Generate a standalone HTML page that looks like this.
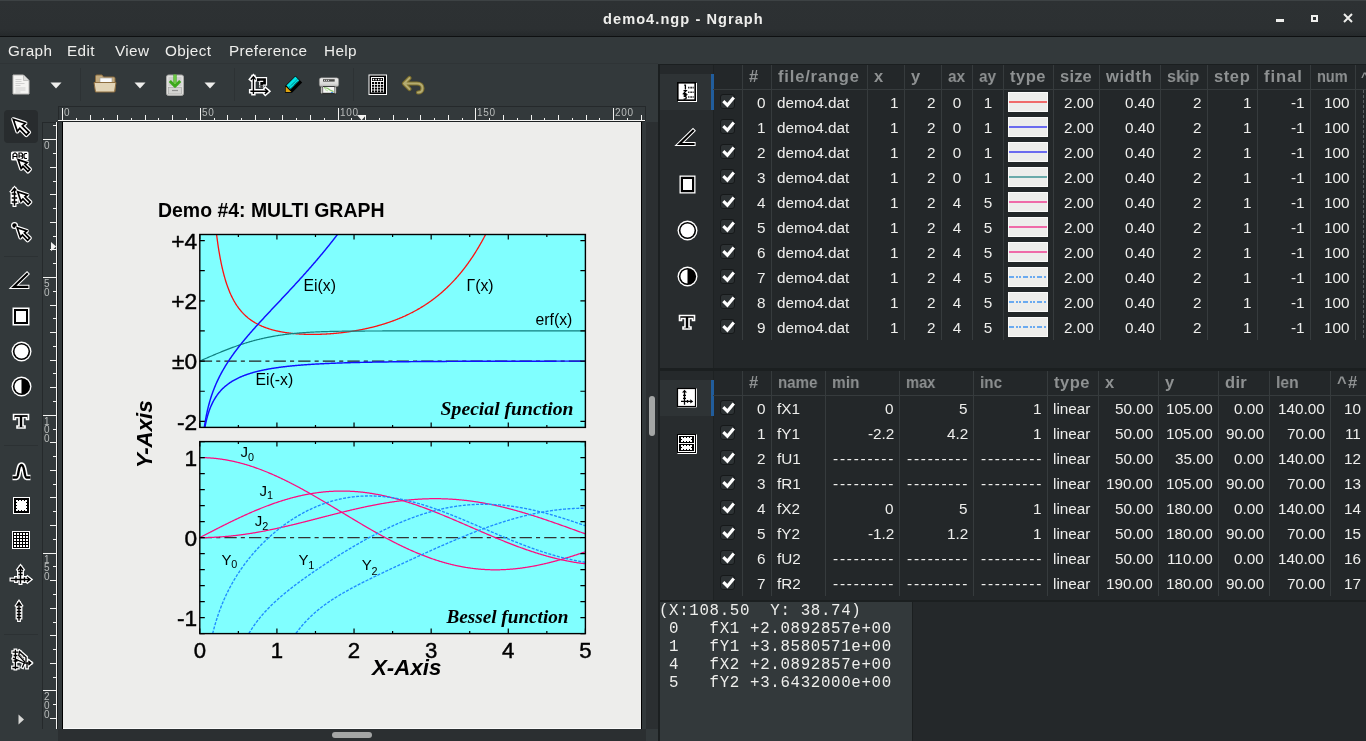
<!DOCTYPE html><html><head><meta charset="utf-8"><style>
*{margin:0;padding:0}
html,body{width:1366px;height:741px;overflow:hidden;background:#33393b;font-family:"Liberation Sans",sans-serif}
body>div,body>span,body>svg{position:absolute;display:block}
.t{white-space:pre;line-height:1;-webkit-font-smoothing:antialiased;will-change:transform}
svg{overflow:visible;will-change:transform}
</style></head><body><div style="left:0px;top:0px;width:1366px;height:36px;background:linear-gradient(to bottom,#2d3133 0%,#2c3032 80%,#25292b 100%)"></div><div style="left:0px;top:0px;width:1366px;height:1px;background:#3d4244"></div><div style="left:0px;top:36px;width:1366px;height:1px;background:#0e1011"></div><span class="t" style="left:603px;top:11.7px;font-weight:bold;font-size:14.6px;letter-spacing:1.05px;color:#eeeeec">demo4.ngp - Ngraph</span><div style="left:1276px;top:19px;width:8px;height:3px;background:#eeeeec"></div><div style="left:1311px;top:15px;width:7px;height:7px;border:2px solid #eeeeec;box-sizing:border-box"></div><svg style="left:1343px;top:13px" width="10" height="10"><path d="M1 1L9 9M9 1L1 9" stroke="#eeeeec" stroke-width="2"/></svg><div style="left:0px;top:37px;width:1366px;height:27px;background:#33393b"></div><span class="t" style="left:8px;top:42.5px;font-size:15.3px;letter-spacing:0.35px;color:#eeeeec">Graph</span><span class="t" style="left:67px;top:42.5px;font-size:15.3px;letter-spacing:0.35px;color:#eeeeec">Edit</span><span class="t" style="left:115px;top:42.5px;font-size:15.3px;letter-spacing:0.35px;color:#eeeeec">View</span><span class="t" style="left:165px;top:42.5px;font-size:15.3px;letter-spacing:0.35px;color:#eeeeec">Object</span><span class="t" style="left:229px;top:42.5px;font-size:15.3px;letter-spacing:0.35px;color:#eeeeec">Preference</span><span class="t" style="left:324px;top:42.5px;font-size:15.3px;letter-spacing:0.35px;color:#eeeeec">Help</span><div style="left:0px;top:63px;width:658px;height:1px;background:#2f3436"></div><div style="left:80px;top:68px;width:1px;height:33px;background:#2d3234"></div><div style="left:234px;top:68px;width:1px;height:33px;background:#2d3234"></div><div style="left:353px;top:68px;width:1px;height:33px;background:#2d3234"></div><svg style="left:50px;top:82px" width="12" height="7"><path d="M0.5 0.5L11.5 0.5L6 6.5Z" fill="#eeeeec"/></svg><svg style="left:134px;top:82px" width="12" height="7"><path d="M0.5 0.5L11.5 0.5L6 6.5Z" fill="#eeeeec"/></svg><svg style="left:204px;top:82px" width="12" height="7"><path d="M0.5 0.5L11.5 0.5L6 6.5Z" fill="#eeeeec"/></svg><div style="left:4px;top:110px;width:34px;height:33px;background:#282c2e;border-radius:4px"></div><div style="left:4px;top:256px;width:34px;height:1px;background:#2c3133"></div><div style="left:4px;top:445px;width:34px;height:1px;background:#2c3133"></div><div style="left:4px;top:634px;width:34px;height:1px;background:#2c3133"></div><div style="left:58px;top:106px;width:588px;height:15px;border-left:1px solid #25292b;border-top:1px solid #25292b;border-right:1px solid #25292b;box-sizing:border-box"></div><div style="left:58px;top:120px;width:587px;height:1px;background:#f4f4f2"></div><svg style="left:58px;top:106px" width="588" height="15"><line x1="4.5" y1="2" x2="4.5" y2="15" stroke="#f4f4f2" stroke-width="1"/><line x1="18.5" y1="12" x2="18.5" y2="15" stroke="#f4f4f2" stroke-width="1"/><line x1="32.5" y1="9" x2="32.5" y2="15" stroke="#f4f4f2" stroke-width="1"/><line x1="45.5" y1="12" x2="45.5" y2="15" stroke="#f4f4f2" stroke-width="1"/><line x1="59.5" y1="9" x2="59.5" y2="15" stroke="#f4f4f2" stroke-width="1"/><line x1="73.5" y1="12" x2="73.5" y2="15" stroke="#f4f4f2" stroke-width="1"/><line x1="87.5" y1="9" x2="87.5" y2="15" stroke="#f4f4f2" stroke-width="1"/><line x1="100.5" y1="12" x2="100.5" y2="15" stroke="#f4f4f2" stroke-width="1"/><line x1="114.5" y1="9" x2="114.5" y2="15" stroke="#f4f4f2" stroke-width="1"/><line x1="128.5" y1="12" x2="128.5" y2="15" stroke="#f4f4f2" stroke-width="1"/><line x1="142.5" y1="2" x2="142.5" y2="15" stroke="#f4f4f2" stroke-width="1"/><line x1="156.5" y1="12" x2="156.5" y2="15" stroke="#f4f4f2" stroke-width="1"/><line x1="169.5" y1="9" x2="169.5" y2="15" stroke="#f4f4f2" stroke-width="1"/><line x1="183.5" y1="12" x2="183.5" y2="15" stroke="#f4f4f2" stroke-width="1"/><line x1="197.5" y1="9" x2="197.5" y2="15" stroke="#f4f4f2" stroke-width="1"/><line x1="211.5" y1="12" x2="211.5" y2="15" stroke="#f4f4f2" stroke-width="1"/><line x1="224.5" y1="9" x2="224.5" y2="15" stroke="#f4f4f2" stroke-width="1"/><line x1="238.5" y1="12" x2="238.5" y2="15" stroke="#f4f4f2" stroke-width="1"/><line x1="252.5" y1="9" x2="252.5" y2="15" stroke="#f4f4f2" stroke-width="1"/><line x1="266.5" y1="12" x2="266.5" y2="15" stroke="#f4f4f2" stroke-width="1"/><line x1="280.5" y1="2" x2="280.5" y2="15" stroke="#f4f4f2" stroke-width="1"/><line x1="293.5" y1="12" x2="293.5" y2="15" stroke="#f4f4f2" stroke-width="1"/><line x1="307.5" y1="9" x2="307.5" y2="15" stroke="#f4f4f2" stroke-width="1"/><line x1="321.5" y1="12" x2="321.5" y2="15" stroke="#f4f4f2" stroke-width="1"/><line x1="335.5" y1="9" x2="335.5" y2="15" stroke="#f4f4f2" stroke-width="1"/><line x1="349.5" y1="12" x2="349.5" y2="15" stroke="#f4f4f2" stroke-width="1"/><line x1="362.5" y1="9" x2="362.5" y2="15" stroke="#f4f4f2" stroke-width="1"/><line x1="376.5" y1="12" x2="376.5" y2="15" stroke="#f4f4f2" stroke-width="1"/><line x1="390.5" y1="9" x2="390.5" y2="15" stroke="#f4f4f2" stroke-width="1"/><line x1="404.5" y1="12" x2="404.5" y2="15" stroke="#f4f4f2" stroke-width="1"/><line x1="417.5" y1="2" x2="417.5" y2="15" stroke="#f4f4f2" stroke-width="1"/><line x1="431.5" y1="12" x2="431.5" y2="15" stroke="#f4f4f2" stroke-width="1"/><line x1="445.5" y1="9" x2="445.5" y2="15" stroke="#f4f4f2" stroke-width="1"/><line x1="459.5" y1="12" x2="459.5" y2="15" stroke="#f4f4f2" stroke-width="1"/><line x1="473.5" y1="9" x2="473.5" y2="15" stroke="#f4f4f2" stroke-width="1"/><line x1="486.5" y1="12" x2="486.5" y2="15" stroke="#f4f4f2" stroke-width="1"/><line x1="500.5" y1="9" x2="500.5" y2="15" stroke="#f4f4f2" stroke-width="1"/><line x1="514.5" y1="12" x2="514.5" y2="15" stroke="#f4f4f2" stroke-width="1"/><line x1="528.5" y1="9" x2="528.5" y2="15" stroke="#f4f4f2" stroke-width="1"/><line x1="541.5" y1="12" x2="541.5" y2="15" stroke="#f4f4f2" stroke-width="1"/><line x1="555.5" y1="2" x2="555.5" y2="15" stroke="#f4f4f2" stroke-width="1"/><line x1="569.5" y1="12" x2="569.5" y2="15" stroke="#f4f4f2" stroke-width="1"/><line x1="583.5" y1="9" x2="583.5" y2="15" stroke="#f4f4f2" stroke-width="1"/></svg><span class="t" style="left:64px;top:107.5px;font-size:10px;letter-spacing:0.7px;color:#b9bcbb">0</span><span class="t" style="left:202px;top:107.5px;font-size:10px;letter-spacing:0.7px;color:#b9bcbb">50</span><span class="t" style="left:340px;top:107.5px;font-size:10px;letter-spacing:0.7px;color:#b9bcbb">100</span><span class="t" style="left:477px;top:107.5px;font-size:10px;letter-spacing:0.7px;color:#b9bcbb">150</span><span class="t" style="left:615px;top:107.5px;font-size:10px;letter-spacing:0.7px;color:#b9bcbb">200</span><svg style="left:357px;top:115px" width="10" height="6"><path d="M0 0L9.2 0L4.6 5.2Z" fill="#f4f4f2"/></svg><div style="left:42px;top:122px;width:15px;height:607px;border-left:1px solid #25292b;border-top:1px solid #25292b;box-sizing:border-box"></div><div style="left:56px;top:122px;width:1px;height:607px;background:#f4f4f2"></div><svg style="left:42px;top:122px" width="15" height="607"><line x1="11" y1="3.5" x2="15" y2="3.5" stroke="#f4f4f2" stroke-width="1"/><line x1="1" y1="17.5" x2="15" y2="17.5" stroke="#f4f4f2" stroke-width="1"/><line x1="11" y1="31.5" x2="15" y2="31.5" stroke="#f4f4f2" stroke-width="1"/><line x1="8" y1="45.5" x2="15" y2="45.5" stroke="#f4f4f2" stroke-width="1"/><line x1="11" y1="59.5" x2="15" y2="59.5" stroke="#f4f4f2" stroke-width="1"/><line x1="8" y1="72.5" x2="15" y2="72.5" stroke="#f4f4f2" stroke-width="1"/><line x1="11" y1="86.5" x2="15" y2="86.5" stroke="#f4f4f2" stroke-width="1"/><line x1="8" y1="100.5" x2="15" y2="100.5" stroke="#f4f4f2" stroke-width="1"/><line x1="11" y1="114.5" x2="15" y2="114.5" stroke="#f4f4f2" stroke-width="1"/><line x1="8" y1="127.5" x2="15" y2="127.5" stroke="#f4f4f2" stroke-width="1"/><line x1="11" y1="141.5" x2="15" y2="141.5" stroke="#f4f4f2" stroke-width="1"/><line x1="1" y1="155.5" x2="15" y2="155.5" stroke="#f4f4f2" stroke-width="1"/><line x1="11" y1="169.5" x2="15" y2="169.5" stroke="#f4f4f2" stroke-width="1"/><line x1="8" y1="183.5" x2="15" y2="183.5" stroke="#f4f4f2" stroke-width="1"/><line x1="11" y1="196.5" x2="15" y2="196.5" stroke="#f4f4f2" stroke-width="1"/><line x1="8" y1="210.5" x2="15" y2="210.5" stroke="#f4f4f2" stroke-width="1"/><line x1="11" y1="224.5" x2="15" y2="224.5" stroke="#f4f4f2" stroke-width="1"/><line x1="8" y1="238.5" x2="15" y2="238.5" stroke="#f4f4f2" stroke-width="1"/><line x1="11" y1="251.5" x2="15" y2="251.5" stroke="#f4f4f2" stroke-width="1"/><line x1="8" y1="265.5" x2="15" y2="265.5" stroke="#f4f4f2" stroke-width="1"/><line x1="11" y1="279.5" x2="15" y2="279.5" stroke="#f4f4f2" stroke-width="1"/><line x1="1" y1="293.5" x2="15" y2="293.5" stroke="#f4f4f2" stroke-width="1"/><line x1="11" y1="307.5" x2="15" y2="307.5" stroke="#f4f4f2" stroke-width="1"/><line x1="8" y1="320.5" x2="15" y2="320.5" stroke="#f4f4f2" stroke-width="1"/><line x1="11" y1="334.5" x2="15" y2="334.5" stroke="#f4f4f2" stroke-width="1"/><line x1="8" y1="348.5" x2="15" y2="348.5" stroke="#f4f4f2" stroke-width="1"/><line x1="11" y1="362.5" x2="15" y2="362.5" stroke="#f4f4f2" stroke-width="1"/><line x1="8" y1="375.5" x2="15" y2="375.5" stroke="#f4f4f2" stroke-width="1"/><line x1="11" y1="389.5" x2="15" y2="389.5" stroke="#f4f4f2" stroke-width="1"/><line x1="8" y1="403.5" x2="15" y2="403.5" stroke="#f4f4f2" stroke-width="1"/><line x1="11" y1="417.5" x2="15" y2="417.5" stroke="#f4f4f2" stroke-width="1"/><line x1="1" y1="431.5" x2="15" y2="431.5" stroke="#f4f4f2" stroke-width="1"/><line x1="11" y1="444.5" x2="15" y2="444.5" stroke="#f4f4f2" stroke-width="1"/><line x1="8" y1="458.5" x2="15" y2="458.5" stroke="#f4f4f2" stroke-width="1"/><line x1="11" y1="472.5" x2="15" y2="472.5" stroke="#f4f4f2" stroke-width="1"/><line x1="8" y1="486.5" x2="15" y2="486.5" stroke="#f4f4f2" stroke-width="1"/><line x1="11" y1="500.5" x2="15" y2="500.5" stroke="#f4f4f2" stroke-width="1"/><line x1="8" y1="513.5" x2="15" y2="513.5" stroke="#f4f4f2" stroke-width="1"/><line x1="11" y1="527.5" x2="15" y2="527.5" stroke="#f4f4f2" stroke-width="1"/><line x1="8" y1="541.5" x2="15" y2="541.5" stroke="#f4f4f2" stroke-width="1"/><line x1="11" y1="555.5" x2="15" y2="555.5" stroke="#f4f4f2" stroke-width="1"/><line x1="1" y1="568.5" x2="15" y2="568.5" stroke="#f4f4f2" stroke-width="1"/><line x1="11" y1="582.5" x2="15" y2="582.5" stroke="#f4f4f2" stroke-width="1"/><line x1="8" y1="596.5" x2="15" y2="596.5" stroke="#f4f4f2" stroke-width="1"/></svg><span class="t" style="left:43.5px;top:141.2px;font-size:10px;color:#b9bcbb">0</span><span class="t" style="left:43.5px;top:279.0px;font-size:10px;color:#b9bcbb">5</span><span class="t" style="left:43.5px;top:287.6px;font-size:10px;color:#b9bcbb">0</span><span class="t" style="left:43.5px;top:416.79999999999995px;font-size:10px;color:#b9bcbb">1</span><span class="t" style="left:43.5px;top:425.4px;font-size:10px;color:#b9bcbb">0</span><span class="t" style="left:43.5px;top:433.99999999999994px;font-size:10px;color:#b9bcbb">0</span><span class="t" style="left:43.5px;top:554.5999999999999px;font-size:10px;color:#b9bcbb">1</span><span class="t" style="left:43.5px;top:563.1999999999999px;font-size:10px;color:#b9bcbb">5</span><span class="t" style="left:43.5px;top:571.8px;font-size:10px;color:#b9bcbb">0</span><span class="t" style="left:43.5px;top:692.3999999999999px;font-size:10px;color:#b9bcbb">2</span><span class="t" style="left:43.5px;top:700.9999999999999px;font-size:10px;color:#b9bcbb">0</span><span class="t" style="left:43.5px;top:709.5999999999999px;font-size:10px;color:#b9bcbb">0</span><svg style="left:51px;top:241.5px" width="7" height="10"><path d="M0 0L0 9.2L5.2 4.6Z" fill="#f4f4f2"/></svg><div style="left:58px;top:121px;width:587px;height:1px;background:#1d2122"></div><div style="left:57px;top:122px;width:1px;height:607px;background:#1d2122"></div><div style="left:62px;top:122px;width:580px;height:607px;background:#000"></div><div style="left:63px;top:122px;width:578px;height:606px;background:#ededeb"></div><div style="left:63px;top:728px;width:578px;height:1px;background:#fafafa"></div><div style="left:58px;top:729px;width:588px;height:12px;background:#2b2f31"></div><div style="left:332px;top:732px;width:40px;height:6px;background:#a4a6a5;border-radius:3px"></div><div style="left:646px;top:122px;width:12px;height:607px;background:#2b2f31"></div><div style="left:649px;top:396px;width:6px;height:40px;background:#a4a6a5;border-radius:3px"></div><svg style="left:63px;top:122px" width="578" height="606"><g transform="translate(-63,-122)"><defs><clipPath id="cu"><rect x="199.8" y="234.5" width="385.6" height="192.9"/></clipPath><clipPath id="cl"><rect x="199.8" y="441.6" width="385.6" height="192.0"/></clipPath></defs><rect x="199.8" y="234.5" width="385.6" height="192.9" fill="#80ffff"/><rect x="199.8" y="441.6" width="385.6" height="192.0" fill="#80ffff"/><line x1="199.8" y1="361.09" x2="585.4" y2="361.09" stroke="#222" stroke-width="1.35" stroke-dasharray="12.3 4.1 4.1 4.1"/><line x1="199.8" y1="537.60" x2="585.4" y2="537.60" stroke="#333" stroke-width="1.35" stroke-dasharray="12.3 4.1 4.1 4.1"/><polyline clip-path="url(#cu)" fill="none" stroke="#ff1010" stroke-width="1.3" points="200.57,-2000.00 201.05,-1477.33 201.53,-962.31 202.02,-671.23 202.50,-484.15 202.98,-353.79 203.46,-257.78 203.94,-184.14 204.42,-125.87 204.91,-78.62 205.39,-39.54 205.87,-6.69 206.35,21.31 206.83,45.45 207.31,66.48 207.80,84.95 208.28,101.31 208.76,115.90 209.24,128.98 209.72,140.79 210.20,151.48 210.69,161.22 211.17,170.12 211.65,178.29 212.13,185.81 212.61,192.75 213.09,199.18 213.58,205.15 214.06,210.72 214.54,215.91 215.02,220.76 215.50,225.31 215.98,229.58 216.47,233.60 216.95,237.39 217.43,240.96 217.91,244.34 218.39,247.53 218.87,250.56 219.36,253.44 219.84,256.17 220.32,258.77 220.80,261.24 221.28,263.60 221.76,265.85 222.24,268.00 222.73,270.06 223.21,272.02 223.69,273.91 224.17,275.71 224.65,277.44 225.13,279.11 225.62,280.70 226.10,282.24 226.58,283.72 227.06,285.14 227.54,286.50 228.02,287.82 228.51,289.09 228.99,290.32 229.47,291.50 229.95,292.65 230.43,293.75 230.91,294.82 231.40,295.85 231.88,296.85 232.36,297.82 232.84,298.75 233.32,299.66 233.80,300.54 234.29,301.39 234.77,302.22 235.25,303.02 235.73,303.80 236.21,304.55 236.69,305.29 237.18,306.00 237.66,306.69 238.14,307.37 238.62,308.02 239.10,308.66 239.58,309.28 240.07,309.88 240.55,310.46 241.03,311.04 241.51,311.59 241.99,312.13 242.47,312.66 242.96,313.17 243.44,313.68 243.92,314.16 244.40,314.64 244.88,315.11 245.36,315.56 245.85,316.00 246.33,316.43 246.81,316.85 247.29,317.26 247.77,317.67 248.25,318.06 248.74,318.44 249.22,318.82 249.70,319.18 250.18,319.54 250.66,319.89 251.14,320.23 251.62,320.56 252.11,320.89 252.59,321.21 253.07,321.52 253.55,321.82 254.03,322.12 254.51,322.41 255.00,322.70 255.48,322.98 255.96,323.25 256.44,323.52 256.92,323.78 257.40,324.03 257.89,324.28 258.37,324.53 258.85,324.77 259.33,325.00 259.81,325.23 260.29,325.46 260.78,325.68 261.26,325.89 261.74,326.11 262.22,326.31 262.70,326.52 263.18,326.71 263.67,326.91 264.15,327.10 264.63,327.29 265.11,327.47 265.59,327.65 266.07,327.82 266.56,328.00 267.04,328.16 267.52,328.33 268.00,328.49 268.48,328.65 268.96,328.80 269.45,328.96 269.93,329.10 270.41,329.25 270.89,329.39 271.37,329.53 271.85,329.67 272.34,329.80 272.82,329.94 273.30,330.06 273.78,330.19 274.26,330.31 274.74,330.43 275.23,330.55 275.71,330.67 276.19,330.78 276.67,330.89 277.15,331.00 277.63,331.11 278.11,331.21 278.60,331.31 279.08,331.41 279.56,331.51 280.04,331.61 280.52,331.70 281.00,331.79 281.49,331.88 281.97,331.97 282.45,332.05 282.93,332.14 283.41,332.22 283.89,332.30 284.38,332.38 284.86,332.45 285.34,332.53 285.82,332.60 286.30,332.67 286.78,332.74 287.27,332.81 287.75,332.87 288.23,332.93 288.71,333.00 289.19,333.06 289.67,333.12 290.16,333.17 290.64,333.23 291.12,333.28 291.60,333.34 292.08,333.39 292.56,333.44 293.05,333.49 293.53,333.53 294.01,333.58 294.49,333.62 294.97,333.67 295.45,333.71 295.94,333.75 296.42,333.79 296.90,333.83 297.38,333.86 297.86,333.90 298.34,333.93 298.83,333.96 299.31,333.99 299.79,334.02 300.27,334.05 300.75,334.08 301.23,334.11 301.72,334.13 302.20,334.16 302.68,334.18 303.16,334.20 303.64,334.22 304.12,334.24 304.61,334.26 305.09,334.27 305.57,334.29 306.05,334.30 306.53,334.32 307.01,334.33 307.49,334.34 307.98,334.35 308.46,334.36 308.94,334.37 309.42,334.38 309.90,334.38 310.38,334.39 310.87,334.39 311.35,334.39 311.83,334.40 312.31,334.40 312.79,334.40 313.27,334.40 313.76,334.39 314.24,334.39 314.72,334.39 315.20,334.38 315.68,334.38 316.16,334.37 316.65,334.36 317.13,334.35 317.61,334.34 318.09,334.33 318.57,334.32 319.05,334.31 319.54,334.29 320.02,334.28 320.50,334.26 320.98,334.25 321.46,334.23 321.94,334.21 322.43,334.19 322.91,334.17 323.39,334.15 323.87,334.13 324.35,334.11 324.83,334.08 325.32,334.06 325.80,334.03 326.28,334.00 326.76,333.98 327.24,333.95 327.72,333.92 328.21,333.89 328.69,333.86 329.17,333.83 329.65,333.79 330.13,333.76 330.61,333.73 331.10,333.69 331.58,333.65 332.06,333.62 332.54,333.58 333.02,333.54 333.50,333.50 333.98,333.46 334.47,333.42 334.95,333.37 335.43,333.33 335.91,333.28 336.39,333.24 336.87,333.19 337.36,333.15 337.84,333.10 338.32,333.05 338.80,333.00 339.28,332.95 339.76,332.90 340.25,332.84 340.73,332.79 341.21,332.74 341.69,332.68 342.17,332.62 342.65,332.57 343.14,332.51 343.62,332.45 344.10,332.39 344.58,332.33 345.06,332.27 345.54,332.21 346.03,332.14 346.51,332.08 346.99,332.01 347.47,331.95 347.95,331.88 348.43,331.81 348.92,331.74 349.40,331.67 349.88,331.60 350.36,331.53 350.84,331.46 351.32,331.38 351.81,331.31 352.29,331.23 352.77,331.16 353.25,331.08 353.73,331.00 354.21,330.92 354.70,330.84 355.18,330.76 355.66,330.68 356.14,330.59 356.62,330.51 357.10,330.42 357.59,330.34 358.07,330.25 358.55,330.16 359.03,330.07 359.51,329.98 359.99,329.89 360.48,329.80 360.96,329.71 361.44,329.61 361.92,329.52 362.40,329.42 362.88,329.32 363.36,329.22 363.85,329.12 364.33,329.02 364.81,328.92 365.29,328.82 365.77,328.71 366.25,328.61 366.74,328.50 367.22,328.40 367.70,328.29 368.18,328.18 368.66,328.07 369.14,327.96 369.63,327.84 370.11,327.73 370.59,327.61 371.07,327.50 371.55,327.38 372.03,327.26 372.52,327.14 373.00,327.02 373.48,326.90 373.96,326.78 374.44,326.65 374.92,326.53 375.41,326.40 375.89,326.27 376.37,326.14 376.85,326.01 377.33,325.88 377.81,325.75 378.30,325.62 378.78,325.48 379.26,325.34 379.74,325.21 380.22,325.07 380.70,324.93 381.19,324.78 381.67,324.64 382.15,324.50 382.63,324.35 383.11,324.20 383.59,324.06 384.08,323.91 384.56,323.76 385.04,323.60 385.52,323.45 386.00,323.29 386.48,323.14 386.97,322.98 387.45,322.82 387.93,322.66 388.41,322.50 388.89,322.33 389.37,322.17 389.85,322.00 390.34,321.83 390.82,321.66 391.30,321.49 391.78,321.32 392.26,321.15 392.74,320.97 393.23,320.79 393.71,320.61 394.19,320.43 394.67,320.25 395.15,320.07 395.63,319.88 396.12,319.70 396.60,319.51 397.08,319.32 397.56,319.13 398.04,318.93 398.52,318.74 399.01,318.54 399.49,318.34 399.97,318.14 400.45,317.94 400.93,317.74 401.41,317.53 401.90,317.33 402.38,317.12 402.86,316.91 403.34,316.69 403.82,316.48 404.30,316.26 404.79,316.05 405.27,315.83 405.75,315.61 406.23,315.38 406.71,315.16 407.19,314.93 407.68,314.70 408.16,314.47 408.64,314.24 409.12,314.00 409.60,313.76 410.08,313.52 410.57,313.28 411.05,313.04 411.53,312.79 412.01,312.55 412.49,312.30 412.97,312.05 413.46,311.79 413.94,311.54 414.42,311.28 414.90,311.02 415.38,310.75 415.86,310.49 416.35,310.22 416.83,309.95 417.31,309.68 417.79,309.41 418.27,309.13 418.75,308.85 419.23,308.57 419.72,308.29 420.20,308.00 420.68,307.72 421.16,307.43 421.64,307.13 422.12,306.84 422.61,306.54 423.09,306.24 423.57,305.94 424.05,305.63 424.53,305.32 425.01,305.01 425.50,304.70 425.98,304.38 426.46,304.06 426.94,303.74 427.42,303.42 427.90,303.09 428.39,302.76 428.87,302.43 429.35,302.09 429.83,301.76 430.31,301.42 430.79,301.07 431.28,300.73 431.76,300.38 432.24,300.02 432.72,299.67 433.20,299.31 433.68,298.95 434.17,298.58 434.65,298.22 435.13,297.84 435.61,297.47 436.09,297.09 436.57,296.71 437.06,296.33 437.54,295.94 438.02,295.55 438.50,295.16 438.98,294.76 439.46,294.36 439.95,293.96 440.43,293.55 440.91,293.14 441.39,292.73 441.87,292.31 442.35,291.89 442.84,291.46 443.32,291.03 443.80,290.60 444.28,290.17 444.76,289.73 445.24,289.28 445.72,288.84 446.21,288.39 446.69,287.93 447.17,287.47 447.65,287.01 448.13,286.54 448.61,286.07 449.10,285.60 449.58,285.12 450.06,284.64 450.54,284.15 451.02,283.66 451.50,283.17 451.99,282.67 452.47,282.16 452.95,281.65 453.43,281.14 453.91,280.62 454.39,280.10 454.88,279.58 455.36,279.05 455.84,278.51 456.32,277.97 456.80,277.43 457.28,276.88 457.77,276.33 458.25,275.77 458.73,275.20 459.21,274.63 459.69,274.06 460.17,273.48 460.66,272.90 461.14,272.31 461.62,271.72 462.10,271.12 462.58,270.52 463.06,269.91 463.55,269.29 464.03,268.67 464.51,268.05 464.99,267.42 465.47,266.78 465.95,266.14 466.44,265.49 466.92,264.84 467.40,264.18 467.88,263.52 468.36,262.84 468.84,262.17 469.33,261.49 469.81,260.80 470.29,260.10 470.77,259.40 471.25,258.70 471.73,257.98 472.22,257.27 472.70,256.54 473.18,255.81 473.66,255.07 474.14,254.33 474.62,253.57 475.10,252.82 475.59,252.05 476.07,251.28 476.55,250.50 477.03,249.72 477.51,248.92 477.99,248.12 478.48,247.32 478.96,246.50 479.44,245.68 479.92,244.85 480.40,244.02 480.88,243.18 481.37,242.33 481.85,241.47 482.33,240.60 482.81,239.73 483.29,238.85 483.77,237.96 484.26,237.06 484.74,236.15 485.22,235.24 485.70,234.32 486.18,233.39 486.66,232.45 487.15,231.50 487.63,230.55 488.11,229.59 488.59,228.61 489.07,227.63 489.55,226.64 490.04,225.64 490.52,224.63 491.00,223.62 491.48,222.59 491.96,221.55 492.44,220.51 492.93,219.45 493.41,218.39 493.89,217.31 494.37,216.23 494.85,215.14 495.33,214.03 495.82,212.92 496.30,211.79 496.78,210.66 497.26,209.52 497.74,208.36 498.22,207.19 498.71,206.02 499.19,204.83 499.67,203.63 500.15,202.42 500.63,201.20 501.11,199.97 501.59,198.73 502.08,197.48 502.56,196.21 503.04,194.93 503.52,193.64 504.00,192.34 504.48,191.03 504.97,189.70 505.45,188.37 505.93,187.02 506.41,185.65 506.89,184.28 507.37,182.89 507.86,181.49 508.34,180.08 508.82,178.65 509.30,177.21 509.78,175.76 510.26,174.29 510.75,172.81 511.23,171.31 511.71,169.80 512.19,168.28 512.67,166.74 513.15,165.19 513.64,163.63 514.12,162.05 514.60,160.45 515.08,158.84 515.56,157.22 516.04,155.58 516.53,153.92 517.01,152.25 517.49,150.56 517.97,148.86 518.45,147.14 518.93,145.40 519.42,143.65 519.90,141.88 520.38,140.10 520.86,138.29 521.34,136.47 521.82,134.64 522.31,132.78 522.79,130.91 523.27,129.02 523.75,127.11 524.23,125.19 524.71,123.25 525.20,121.28 525.68,119.30 526.16,117.30 526.64,115.28 527.12,113.24 527.60,111.19 528.09,109.11 528.57,107.01 529.05,104.89 529.53,102.76 530.01,100.60 530.49,98.42 530.97,96.22 531.46,94.00 531.94,91.75 532.42,89.49 532.90,87.20 533.38,84.90 533.86,82.57 534.35,80.21 534.83,77.84 535.31,75.44 535.79,73.02 536.27,70.57 536.75,68.10 537.24,65.61 537.72,63.09 538.20,60.55 538.68,57.99 539.16,55.39 539.64,52.78 540.13,50.14 540.61,47.47 541.09,44.77 541.57,42.06 542.05,39.31 542.53,36.54 543.02,33.73 543.50,30.91 543.98,28.05 544.46,25.17 544.94,22.26 545.42,19.32 545.91,16.35 546.39,13.35 546.87,10.32 547.35,7.26 547.83,4.17 548.31,1.06 548.80,-2.09 549.28,-5.27 549.76,-8.48 550.24,-11.73 550.72,-15.00 551.20,-18.31 551.69,-21.65 552.17,-25.02 552.65,-28.43 553.13,-31.87 553.61,-35.35 554.09,-38.86 554.58,-42.40 555.06,-45.98 555.54,-49.60 556.02,-53.25 556.50,-56.93 556.98,-60.66 557.46,-64.42 557.95,-68.22 558.43,-72.06 558.91,-75.93 559.39,-79.85 559.87,-83.80 560.35,-87.79 560.84,-91.83 561.32,-95.90 561.80,-100.02 562.28,-104.17 562.76,-108.37 563.24,-112.61 563.73,-116.89 564.21,-121.22 564.69,-125.59 565.17,-130.00 565.65,-134.46 566.13,-138.96 566.62,-143.51 567.10,-148.11 567.58,-152.75 568.06,-157.44 568.54,-162.17 569.02,-166.96 569.51,-171.79 569.99,-176.67 570.47,-181.60 570.95,-186.58 571.43,-191.62 571.91,-196.70 572.40,-201.83 572.88,-207.02 573.36,-212.26 573.84,-217.56 574.32,-222.91 574.80,-228.31 575.29,-233.77 575.77,-239.28 576.25,-244.85 576.73,-250.48 577.21,-256.16 577.69,-261.91 578.18,-267.71 578.66,-273.57 579.14,-279.49 579.62,-285.48 580.10,-291.52 580.58,-297.63 581.07,-303.80 581.55,-310.03 582.03,-316.33 582.51,-322.70 582.99,-329.13 583.47,-335.62 583.96,-342.18 584.44,-348.82 584.92,-355.52 585.40,-362.28"/><polyline clip-path="url(#cu)" fill="none" stroke="#108080" stroke-width="1.2" points="199.88,361.06 200.52,360.77 201.16,360.49 201.81,360.21 202.45,359.92 203.10,359.64 203.74,359.36 204.38,359.07 205.03,358.79 205.67,358.51 206.31,358.23 206.96,357.94 207.60,357.66 208.24,357.38 208.89,357.10 209.53,356.82 210.17,356.54 210.82,356.26 211.46,355.99 212.11,355.71 212.75,355.43 213.39,355.16 214.04,354.88 214.68,354.61 215.32,354.34 215.97,354.06 216.61,353.79 217.25,353.52 217.90,353.25 218.54,352.99 219.19,352.72 219.83,352.45 220.47,352.19 221.12,351.92 221.76,351.66 222.40,351.40 223.05,351.14 223.69,350.88 224.33,350.63 224.98,350.37 225.62,350.11 226.27,349.86 226.91,349.61 227.55,349.36 228.20,349.11 228.84,348.86 229.48,348.62 230.13,348.37 230.77,348.13 231.41,347.89 232.06,347.65 232.70,347.42 233.34,347.18 233.99,346.95 234.63,346.71 235.28,346.48 235.92,346.25 236.56,346.03 237.21,345.80 237.85,345.58 238.49,345.36 239.14,345.14 239.78,344.92 240.42,344.70 241.07,344.49 241.71,344.28 242.36,344.07 243.00,343.86 243.64,343.65 244.29,343.45 244.93,343.24 245.57,343.04 246.22,342.85 246.86,342.65 247.50,342.45 248.15,342.26 248.79,342.07 249.44,341.88 250.08,341.70 250.72,341.51 251.37,341.33 252.01,341.15 252.65,340.97 253.30,340.79 253.94,340.62 254.58,340.45 255.23,340.28 255.87,340.11 256.51,339.94 257.16,339.78 257.80,339.62 258.45,339.46 259.09,339.30 259.73,339.14 260.38,338.99 261.02,338.83 261.66,338.68 262.31,338.54 262.95,338.39 263.59,338.25 264.24,338.10 264.88,337.96 265.53,337.83 266.17,337.69 266.81,337.55 267.46,337.42 268.10,337.29 268.74,337.16 269.39,337.04 270.03,336.91 270.67,336.79 271.32,336.67 271.96,336.55 272.61,336.43 273.25,336.32 273.89,336.20 274.54,336.09 275.18,335.98 275.82,335.87 276.47,335.77 277.11,335.66 277.75,335.56 278.40,335.46 279.04,335.36 279.68,335.26 280.33,335.16 280.97,335.07 281.62,334.97 282.26,334.88 282.90,334.79 283.55,334.71 284.19,334.62 284.83,334.53 285.48,334.45 286.12,334.37 286.76,334.29 287.41,334.21 288.05,334.13 288.70,334.06 289.34,333.98 289.98,333.91 290.63,333.84 291.27,333.77 291.91,333.70 292.56,333.63 293.20,333.56 293.84,333.50 294.49,333.44 295.13,333.37 295.78,333.31 296.42,333.25 297.06,333.20 297.71,333.14 298.35,333.08 298.99,333.03 299.64,332.97 300.28,332.92 300.92,332.87 301.57,332.82 302.21,332.77 302.85,332.72 303.50,332.67 304.14,332.63 304.79,332.58 305.43,332.54 306.07,332.50 306.72,332.45 307.36,332.41 308.00,332.37 308.65,332.33 309.29,332.30 309.93,332.26 310.58,332.22 311.22,332.19 311.87,332.15 312.51,332.12 313.15,332.08 313.80,332.05 314.44,332.02 315.08,331.99 315.73,331.96 316.37,331.93 317.01,331.90 317.66,331.87 318.30,331.85 318.95,331.82 319.59,331.80 320.23,331.77 320.88,331.75 321.52,331.72 322.16,331.70 322.81,331.68 323.45,331.65 324.09,331.63 324.74,331.61 325.38,331.59 326.02,331.57 326.67,331.55 327.31,331.53 327.96,331.52 328.60,331.50 329.24,331.48 329.89,331.46 330.53,331.45 331.17,331.43 331.82,331.42 332.46,331.40 333.10,331.39 333.75,331.37 334.39,331.36 335.04,331.35 335.68,331.33 336.32,331.32 336.97,331.31 337.61,331.30 338.25,331.29 338.90,331.27 339.54,331.26 340.18,331.25 340.83,331.24 341.47,331.23 342.12,331.22 342.76,331.21 343.40,331.20 344.05,331.20 344.69,331.19 345.33,331.18 345.98,331.17 346.62,331.16 347.26,331.16 347.91,331.15 348.55,331.14 349.19,331.14 349.84,331.13 350.48,331.12 351.13,331.12 351.77,331.11 352.41,331.10 353.06,331.10 353.70,331.09 354.34,331.09 354.99,331.08 355.63,331.08 356.27,331.07 356.92,331.07 357.56,331.07 358.21,331.06 358.85,331.06 359.49,331.05 360.14,331.05 360.78,331.05 361.42,331.04 362.07,331.04 362.71,331.03 363.35,331.03 364.00,331.03 364.64,331.03 365.29,331.02 365.93,331.02 366.57,331.02 367.22,331.01 367.86,331.01 368.50,331.01 369.15,331.01 369.79,331.01 370.43,331.00 371.08,331.00 371.72,331.00 372.36,331.00 373.01,330.99 373.65,330.99 374.30,330.99 374.94,330.99 375.58,330.99 376.23,330.99 376.87,330.99 377.51,330.98 378.16,330.98 378.80,330.98 379.44,330.98 380.09,330.98 380.73,330.98 381.38,330.98 382.02,330.98 382.66,330.97 383.31,330.97 383.95,330.97 384.59,330.97 385.24,330.97 385.88,330.97 386.52,330.97 387.17,330.97 387.81,330.97 388.46,330.97 389.10,330.97 389.74,330.96 390.39,330.96 391.03,330.96 391.67,330.96 392.32,330.96 392.96,330.96 393.60,330.96 394.25,330.96 394.89,330.96 395.53,330.96 396.18,330.96 396.82,330.96 397.47,330.96 398.11,330.96 398.75,330.96 399.40,330.96 400.04,330.96 400.68,330.96 401.33,330.96 401.97,330.96 402.61,330.96 403.26,330.96 403.90,330.96 404.55,330.96 405.19,330.95 405.83,330.95 406.48,330.95 407.12,330.95 407.76,330.95 408.41,330.95 409.05,330.95 409.69,330.95 410.34,330.95 410.98,330.95 411.63,330.95 412.27,330.95 412.91,330.95 413.56,330.95 414.20,330.95 414.84,330.95 415.49,330.95 416.13,330.95 416.77,330.95 417.42,330.95 418.06,330.95 418.70,330.95 419.35,330.95 419.99,330.95 420.64,330.95 421.28,330.95 421.92,330.95 422.57,330.95 423.21,330.95 423.85,330.95 424.50,330.95 425.14,330.95 425.78,330.95 426.43,330.95 427.07,330.95 427.72,330.95 428.36,330.95 429.00,330.95 429.65,330.95 430.29,330.95 430.93,330.95 431.58,330.95 432.22,330.95 432.86,330.95 433.51,330.95 434.15,330.95 434.80,330.95 435.44,330.95 436.08,330.95 436.73,330.95 437.37,330.95 438.01,330.95 438.66,330.95 439.30,330.95 439.94,330.95 440.59,330.95 441.23,330.95 441.87,330.95 442.52,330.95 443.16,330.95 443.81,330.95 444.45,330.95 445.09,330.95 445.74,330.95 446.38,330.95 447.02,330.95 447.67,330.95 448.31,330.95 448.95,330.95 449.60,330.95 450.24,330.95 450.89,330.95 451.53,330.95 452.17,330.95 452.82,330.95 453.46,330.95 454.10,330.95 454.75,330.95 455.39,330.95 456.03,330.95 456.68,330.95 457.32,330.95 457.97,330.95 458.61,330.95 459.25,330.95 459.90,330.95 460.54,330.95 461.18,330.95 461.83,330.95 462.47,330.95 463.11,330.95 463.76,330.95 464.40,330.95 465.04,330.95 465.69,330.95 466.33,330.95 466.98,330.95 467.62,330.95 468.26,330.95 468.91,330.95 469.55,330.95 470.19,330.95 470.84,330.95 471.48,330.95 472.12,330.95 472.77,330.95 473.41,330.95 474.06,330.95 474.70,330.95 475.34,330.95 475.99,330.95 476.63,330.95 477.27,330.95 477.92,330.95 478.56,330.95 479.20,330.95 479.85,330.95 480.49,330.95 481.14,330.95 481.78,330.95 482.42,330.95 483.07,330.95 483.71,330.95 484.35,330.95 485.00,330.95 485.64,330.95 486.28,330.95 486.93,330.95 487.57,330.95 488.21,330.95 488.86,330.95 489.50,330.95 490.15,330.95 490.79,330.95 491.43,330.95 492.08,330.95 492.72,330.95 493.36,330.95 494.01,330.95 494.65,330.95 495.29,330.95 495.94,330.95 496.58,330.95 497.23,330.95 497.87,330.95 498.51,330.95 499.16,330.95 499.80,330.95 500.44,330.95 501.09,330.95 501.73,330.95 502.37,330.95 503.02,330.95 503.66,330.95 504.31,330.95 504.95,330.95 505.59,330.95 506.24,330.95 506.88,330.95 507.52,330.95 508.17,330.95 508.81,330.95 509.45,330.95 510.10,330.95 510.74,330.95 511.38,330.95 512.03,330.95 512.67,330.95 513.32,330.95 513.96,330.95 514.60,330.95 515.25,330.95 515.89,330.95 516.53,330.95 517.18,330.95 517.82,330.95 518.46,330.95 519.11,330.95 519.75,330.95 520.40,330.95 521.04,330.95 521.68,330.95 522.33,330.95 522.97,330.95 523.61,330.95 524.26,330.95 524.90,330.95 525.54,330.95 526.19,330.95 526.83,330.95 527.48,330.95 528.12,330.95 528.76,330.95 529.41,330.95 530.05,330.95 530.69,330.95 531.34,330.95 531.98,330.95 532.62,330.95 533.27,330.95 533.91,330.95 534.55,330.95 535.20,330.95 535.84,330.95 536.49,330.95 537.13,330.95 537.77,330.95 538.42,330.95 539.06,330.95 539.70,330.95 540.35,330.95 540.99,330.95 541.63,330.95 542.28,330.95 542.92,330.95 543.57,330.95 544.21,330.95 544.85,330.95 545.50,330.95 546.14,330.95 546.78,330.95 547.43,330.95 548.07,330.95 548.71,330.95 549.36,330.95 550.00,330.95 550.65,330.95 551.29,330.95 551.93,330.95 552.58,330.95 553.22,330.95 553.86,330.95 554.51,330.95 555.15,330.95 555.79,330.95 556.44,330.95 557.08,330.95 557.72,330.95 558.37,330.95 559.01,330.95 559.66,330.95 560.30,330.95 560.94,330.95 561.59,330.95 562.23,330.95 562.87,330.95 563.52,330.95 564.16,330.95 564.80,330.95 565.45,330.95 566.09,330.95 566.74,330.95 567.38,330.95 568.02,330.95 568.67,330.95 569.31,330.95 569.95,330.95 570.60,330.95 571.24,330.95 571.88,330.95 572.53,330.95 573.17,330.95 573.82,330.95 574.46,330.95 575.10,330.95 575.75,330.95 576.39,330.95 577.03,330.95 577.68,330.95 578.32,330.95 578.96,330.95 579.61,330.95 580.25,330.95 580.89,330.95 581.54,330.95 582.18,330.95 582.83,330.95 583.47,330.95 584.11,330.95 584.76,330.95 585.40,330.95"/><polyline clip-path="url(#cu)" fill="none" stroke="#1010ff" stroke-width="1.45" points="200.57,482.19 201.05,467.38 201.53,457.38 202.02,449.81 202.50,443.69 202.98,438.55 203.46,434.10 203.94,430.18 204.42,426.68 204.91,423.49 205.39,420.58 205.87,417.89 206.35,415.40 206.83,413.06 207.31,410.87 207.80,408.80 208.28,406.84 208.76,404.97 209.24,403.19 209.72,401.49 210.20,399.86 210.69,398.30 211.17,396.79 211.65,395.34 212.13,393.93 212.61,392.57 213.09,391.25 213.58,389.98 214.06,388.73 214.54,387.52 215.02,386.35 215.50,385.20 215.98,384.08 216.47,382.99 216.95,381.92 217.43,380.87 217.91,379.85 218.39,378.84 218.87,377.86 219.36,376.89 219.84,375.95 220.32,375.01 220.80,374.10 221.28,373.20 221.76,372.31 222.24,371.44 222.73,370.58 223.21,369.74 223.69,368.90 224.17,368.08 224.65,367.27 225.13,366.47 225.62,365.68 226.10,364.90 226.58,364.12 227.06,363.36 227.54,362.61 228.02,361.86 228.51,361.12 228.99,360.39 229.47,359.67 229.95,358.96 230.43,358.25 230.91,357.55 231.40,356.85 231.88,356.16 232.36,355.48 232.84,354.80 233.32,354.13 233.80,353.46 234.29,352.80 234.77,352.15 235.25,351.50 235.73,350.85 236.21,350.21 236.69,349.57 237.18,348.94 237.66,348.31 238.14,347.69 238.62,347.06 239.10,346.45 239.58,345.84 240.07,345.23 240.55,344.62 241.03,344.02 241.51,343.42 241.99,342.82 242.47,342.23 242.96,341.64 243.44,341.05 243.92,340.47 244.40,339.88 244.88,339.31 245.36,338.73 245.85,338.16 246.33,337.58 246.81,337.01 247.29,336.45 247.77,335.88 248.25,335.32 248.74,334.76 249.22,334.20 249.70,333.64 250.18,333.09 250.66,332.54 251.14,331.99 251.62,331.44 252.11,330.89 252.59,330.34 253.07,329.80 253.55,329.26 254.03,328.71 254.51,328.17 255.00,327.64 255.48,327.10 255.96,326.56 256.44,326.03 256.92,325.49 257.40,324.96 257.89,324.43 258.37,323.90 258.85,323.37 259.33,322.84 259.81,322.31 260.29,321.79 260.78,321.26 261.26,320.74 261.74,320.21 262.22,319.69 262.70,319.17 263.18,318.65 263.67,318.13 264.15,317.61 264.63,317.09 265.11,316.57 265.59,316.05 266.07,315.53 266.56,315.02 267.04,314.50 267.52,313.98 268.00,313.47 268.48,312.95 268.96,312.44 269.45,311.92 269.93,311.41 270.41,310.90 270.89,310.38 271.37,309.87 271.85,309.36 272.34,308.84 272.82,308.33 273.30,307.82 273.78,307.31 274.26,306.80 274.74,306.28 275.23,305.77 275.71,305.26 276.19,304.75 276.67,304.24 277.15,303.72 277.63,303.21 278.11,302.70 278.60,302.19 279.08,301.68 279.56,301.17 280.04,300.65 280.52,300.14 281.00,299.63 281.49,299.12 281.97,298.60 282.45,298.09 282.93,297.58 283.41,297.06 283.89,296.55 284.38,296.04 284.86,295.52 285.34,295.01 285.82,294.49 286.30,293.98 286.78,293.46 287.27,292.95 287.75,292.43 288.23,291.92 288.71,291.40 289.19,290.88 289.67,290.36 290.16,289.85 290.64,289.33 291.12,288.81 291.60,288.29 292.08,287.77 292.56,287.25 293.05,286.73 293.53,286.20 294.01,285.68 294.49,285.16 294.97,284.63 295.45,284.11 295.94,283.58 296.42,283.06 296.90,282.53 297.38,282.01 297.86,281.48 298.34,280.95 298.83,280.42 299.31,279.89 299.79,279.36 300.27,278.83 300.75,278.30 301.23,277.76 301.72,277.23 302.20,276.70 302.68,276.16 303.16,275.63 303.64,275.09 304.12,274.55 304.61,274.01 305.09,273.47 305.57,272.93 306.05,272.39 306.53,271.85 307.01,271.30 307.49,270.76 307.98,270.22 308.46,269.67 308.94,269.12 309.42,268.57 309.90,268.02 310.38,267.47 310.87,266.92 311.35,266.37 311.83,265.82 312.31,265.26 312.79,264.71 313.27,264.15 313.76,263.59 314.24,263.03 314.72,262.47 315.20,261.91 315.68,261.35 316.16,260.79 316.65,260.22 317.13,259.66 317.61,259.09 318.09,258.52 318.57,257.95 319.05,257.38 319.54,256.81 320.02,256.24 320.50,255.66 320.98,255.09 321.46,254.51 321.94,253.93 322.43,253.35 322.91,252.77 323.39,252.19 323.87,251.60 324.35,251.02 324.83,250.43 325.32,249.84 325.80,249.25 326.28,248.66 326.76,248.07 327.24,247.47 327.72,246.88 328.21,246.28 328.69,245.68 329.17,245.08 329.65,244.48 330.13,243.88 330.61,243.28 331.10,242.67 331.58,242.06 332.06,241.45 332.54,240.84 333.02,240.23 333.50,239.62 333.98,239.00 334.47,238.38 334.95,237.76 335.43,237.14 335.91,236.52 336.39,235.90 336.87,235.27 337.36,234.65 337.84,234.02 338.32,233.39 338.80,232.75 339.28,232.12 339.76,231.48 340.25,230.85 340.73,230.21 341.21,229.56 341.69,228.92 342.17,228.28 342.65,227.63 343.14,226.98 343.62,226.33 344.10,225.68 344.58,225.02 345.06,224.37 345.54,223.71 346.03,223.05 346.51,222.39 346.99,221.72 347.47,221.06 347.95,220.39 348.43,219.72 348.92,219.05 349.40,218.37 349.88,217.70 350.36,217.02 350.84,216.34 351.32,215.65 351.81,214.97 352.29,214.28 352.77,213.59 353.25,212.90 353.73,212.21 354.21,211.52 354.70,210.82 355.18,210.12 355.66,209.42 356.14,208.71 356.62,208.01 357.10,207.30 357.59,206.59 358.07,205.88 358.55,205.16 359.03,204.44 359.51,203.72 359.99,203.00 360.48,202.28 360.96,201.55 361.44,200.82 361.92,200.09 362.40,199.35 362.88,198.62 363.36,197.88 363.85,197.14 364.33,196.39 364.81,195.65 365.29,194.90 365.77,194.15 366.25,193.39 366.74,192.64 367.22,191.88 367.70,191.12 368.18,190.35 368.66,189.59 369.14,188.82 369.63,188.05 370.11,187.27 370.59,186.49 371.07,185.71 371.55,184.93 372.03,184.15 372.52,183.36 373.00,182.57 373.48,181.78 373.96,180.98 374.44,180.18 374.92,179.38 375.41,178.57 375.89,177.77 376.37,176.96 376.85,176.14 377.33,175.33 377.81,174.51 378.30,173.69 378.78,172.86 379.26,172.04 379.74,171.21 380.22,170.37 380.70,169.54 381.19,168.70 381.67,167.85 382.15,167.01 382.63,166.16 383.11,165.31 383.59,164.45 384.08,163.60 384.56,162.74 385.04,161.87 385.52,161.00 386.00,160.13 386.48,159.26 386.97,158.38 387.45,157.50 387.93,156.62 388.41,155.73 388.89,154.84 389.37,153.95 389.85,153.06 390.34,152.16 390.82,151.25 391.30,150.35 391.78,149.44 392.26,148.52 392.74,147.61 393.23,146.69 393.71,145.76 394.19,144.84 394.67,143.91 395.15,142.97 395.63,142.03 396.12,141.09 396.60,140.15 397.08,139.20 397.56,138.25 398.04,137.29 398.52,136.33 399.01,135.37 399.49,134.40 399.97,133.43 400.45,132.46 400.93,131.48 401.41,130.50 401.90,129.52 402.38,128.53 402.86,127.53 403.34,126.54 403.82,125.54 404.30,124.53 404.79,123.52 405.27,122.51 405.75,121.49 406.23,120.47 406.71,119.45 407.19,118.42 407.68,117.39 408.16,116.35 408.64,115.31 409.12,114.27 409.60,113.22 410.08,112.17 410.57,111.11 411.05,110.05 411.53,108.98 412.01,107.91 412.49,106.84 412.97,105.76 413.46,104.68 413.94,103.59 414.42,102.50 414.90,101.40 415.38,100.30 415.86,99.20 416.35,98.09 416.83,96.98 417.31,95.86 417.79,94.74 418.27,93.61 418.75,92.48 419.23,91.34 419.72,90.20 420.20,89.06 420.68,87.91 421.16,86.75 421.64,85.59 422.12,84.43 422.61,83.26 423.09,82.08 423.57,80.91 424.05,79.72 424.53,78.53 425.01,77.34 425.50,76.14 425.98,74.94 426.46,73.73 426.94,72.52 427.42,71.30 427.90,70.08 428.39,68.85 428.87,67.62 429.35,66.38 429.83,65.14 430.31,63.89 430.79,62.63 431.28,61.38 431.76,60.11 432.24,58.84 432.72,57.57 433.20,56.29 433.68,55.00 434.17,53.71 434.65,52.41 435.13,51.11 435.61,49.81 436.09,48.49 436.57,47.17 437.06,45.85 437.54,44.52 438.02,43.19 438.50,41.85 438.98,40.50 439.46,39.15 439.95,37.79 440.43,36.43 440.91,35.06 441.39,33.68 441.87,32.30 442.35,30.91 442.84,29.52 443.32,28.12 443.80,26.72 444.28,25.31 444.76,23.89 445.24,22.47 445.72,21.04 446.21,19.60 446.69,18.16 447.17,16.71 447.65,15.26 448.13,13.80 448.61,12.33 449.10,10.86 449.58,9.38 450.06,7.90 450.54,6.40 451.02,4.91 451.50,3.40 451.99,1.89 452.47,0.37 452.95,-1.15 453.43,-2.68 453.91,-4.22 454.39,-5.77 454.88,-7.32 455.36,-8.88 455.84,-10.44 456.32,-12.01 456.80,-13.59 457.28,-15.18 457.77,-16.77 458.25,-18.37 458.73,-19.98 459.21,-21.59 459.69,-23.21 460.17,-24.84 460.66,-26.47 461.14,-28.11 461.62,-29.76 462.10,-31.42 462.58,-33.08 463.06,-34.76 463.55,-36.43 464.03,-38.12 464.51,-39.81 464.99,-41.52 465.47,-43.22 465.95,-44.94 466.44,-46.66 466.92,-48.40 467.40,-50.14 467.88,-51.88 468.36,-53.64 468.84,-55.40 469.33,-57.17 469.81,-58.95 470.29,-60.74 470.77,-62.53 471.25,-64.33 471.73,-66.14 472.22,-67.96 472.70,-69.79 473.18,-71.62 473.66,-73.47 474.14,-75.32 474.62,-77.18 475.10,-79.05 475.59,-80.92 476.07,-82.81 476.55,-84.70 477.03,-86.60 477.51,-88.52 477.99,-90.43 478.48,-92.36 478.96,-94.30 479.44,-96.25 479.92,-98.20 480.40,-100.16 480.88,-102.14 481.37,-104.12 481.85,-106.11 482.33,-108.11 482.81,-110.11 483.29,-112.13 483.77,-114.16 484.26,-116.19 484.74,-118.24 485.22,-120.29 485.70,-122.36 486.18,-124.43 486.66,-126.51 487.15,-128.61 487.63,-130.71 488.11,-132.82 488.59,-134.94 489.07,-137.07 489.55,-139.21 490.04,-141.36 490.52,-143.52 491.00,-145.69 491.48,-147.88 491.96,-150.07 492.44,-152.27 492.93,-154.48 493.41,-156.70 493.89,-158.93 494.37,-161.17 494.85,-163.42 495.33,-165.68 495.82,-167.96 496.30,-170.24 496.78,-172.53 497.26,-174.84 497.74,-177.15 498.22,-179.48 498.71,-181.82 499.19,-184.16 499.67,-186.52 500.15,-188.89 500.63,-191.27 501.11,-193.66 501.59,-196.07 502.08,-198.48 502.56,-200.90 503.04,-203.34 503.52,-205.79 504.00,-208.25 504.48,-210.72 504.97,-213.20 505.45,-215.69 505.93,-218.20 506.41,-220.72 506.89,-223.25 507.37,-225.79 507.86,-228.34 508.34,-230.91 508.82,-233.48 509.30,-236.07 509.78,-238.67 510.26,-241.29 510.75,-243.91 511.23,-246.55 511.71,-249.20 512.19,-251.86 512.67,-254.54 513.15,-257.23 513.64,-259.93 514.12,-262.64 514.60,-265.37 515.08,-268.11 515.56,-270.86 516.04,-273.62 516.53,-276.40 517.01,-279.19 517.49,-282.00 517.97,-284.82 518.45,-287.65 518.93,-290.49 519.42,-293.35 519.90,-296.22 520.38,-299.11 520.86,-302.01 521.34,-304.92 521.82,-307.85 522.31,-310.79 522.79,-313.74 523.27,-316.71 523.75,-319.69 524.23,-322.69 524.71,-325.70 525.20,-328.73 525.68,-331.77 526.16,-334.82 526.64,-337.89 527.12,-340.98 527.60,-344.08 528.09,-347.19 528.57,-350.32 529.05,-353.46 529.53,-356.62 530.01,-359.80 530.49,-362.98 530.97,-366.19 531.46,-369.41 531.94,-372.64 532.42,-375.90 532.90,-379.16 533.38,-382.44 533.86,-385.74 534.35,-389.06 534.83,-392.39 535.31,-395.73 535.79,-399.09 536.27,-402.47 536.75,-405.87 537.24,-409.28 537.72,-412.71 538.20,-416.15 538.68,-419.61 539.16,-423.09 539.64,-426.58 540.13,-430.09 540.61,-433.62 541.09,-437.17 541.57,-440.73 542.05,-444.31 542.53,-447.91 543.02,-451.52 543.50,-455.15 543.98,-458.80 544.46,-462.47 544.94,-466.15 545.42,-469.86 545.91,-473.58 546.39,-477.32 546.87,-481.07 547.35,-484.85 547.83,-488.64 548.31,-492.46 548.80,-496.29 549.28,-500.14 549.76,-504.01 550.24,-507.89 550.72,-511.80 551.20,-515.73 551.69,-519.67 552.17,-523.64 552.65,-527.62 553.13,-531.62 553.61,-535.64 554.09,-539.69 554.58,-543.75 555.06,-547.83 555.54,-551.93 556.02,-556.05 556.50,-560.20 556.98,-564.36 557.46,-568.54 557.95,-572.75 558.43,-576.97 558.91,-581.22 559.39,-585.48 559.87,-589.77 560.35,-594.08 560.84,-598.41 561.32,-602.76 561.80,-607.13 562.28,-611.52 562.76,-615.94 563.24,-620.37 563.73,-624.83 564.21,-629.31 564.69,-633.82 565.17,-638.34 565.65,-642.89 566.13,-647.46 566.62,-652.05 567.10,-656.67 567.58,-661.30 568.06,-665.96 568.54,-670.65 569.02,-675.36 569.51,-680.09 569.99,-684.84 570.47,-689.62 570.95,-694.42 571.43,-699.24 571.91,-704.09 572.40,-708.97 572.88,-713.86 573.36,-718.78 573.84,-723.73 574.32,-728.70 574.80,-733.70 575.29,-738.72 575.77,-743.76 576.25,-748.83 576.73,-753.93 577.21,-759.05 577.69,-764.19 578.18,-769.37 578.66,-774.56 579.14,-779.79 579.62,-785.04 580.10,-790.31 580.58,-795.62 581.07,-800.95 581.55,-806.30 582.03,-811.68 582.51,-817.09 582.99,-822.53 583.47,-827.99 583.96,-833.48 584.44,-839.00 584.92,-844.55 585.40,-850.12"/><polyline clip-path="url(#cu)" fill="none" stroke="#1010ff" stroke-width="1.45" points="200.57,482.80 201.05,468.36 201.53,458.74 202.02,451.54 202.50,445.80 202.98,441.03 203.46,436.96 203.94,433.42 204.42,430.29 204.91,427.49 205.39,424.95 205.87,422.64 206.35,420.52 206.83,418.56 207.31,416.74 207.80,415.05 208.28,413.47 208.76,411.98 209.24,410.58 209.72,409.26 210.20,408.00 210.69,406.81 211.17,405.69 211.65,404.61 212.13,403.58 212.61,402.60 213.09,401.66 213.58,400.76 214.06,399.90 214.54,399.07 215.02,398.27 215.50,397.50 215.98,396.76 216.47,396.05 216.95,395.36 217.43,394.69 217.91,394.05 218.39,393.42 218.87,392.82 219.36,392.23 219.84,391.67 220.32,391.12 220.80,390.58 221.28,390.06 221.76,389.56 222.24,389.07 222.73,388.59 223.21,388.13 223.69,387.68 224.17,387.24 224.65,386.81 225.13,386.39 225.62,385.98 226.10,385.58 226.58,385.20 227.06,384.82 227.54,384.45 228.02,384.09 228.51,383.74 228.99,383.39 229.47,383.05 229.95,382.72 230.43,382.40 230.91,382.09 231.40,381.78 231.88,381.48 232.36,381.18 232.84,380.89 233.32,380.61 233.80,380.33 234.29,380.06 234.77,379.79 235.25,379.53 235.73,379.28 236.21,379.03 236.69,378.78 237.18,378.54 237.66,378.30 238.14,378.07 238.62,377.84 239.10,377.62 239.58,377.40 240.07,377.18 240.55,376.97 241.03,376.76 241.51,376.56 241.99,376.35 242.47,376.16 242.96,375.96 243.44,375.77 243.92,375.59 244.40,375.40 244.88,375.22 245.36,375.04 245.85,374.87 246.33,374.70 246.81,374.53 247.29,374.36 247.77,374.20 248.25,374.03 248.74,373.88 249.22,373.72 249.70,373.57 250.18,373.42 250.66,373.27 251.14,373.12 251.62,372.98 252.11,372.83 252.59,372.69 253.07,372.56 253.55,372.42 254.03,372.29 254.51,372.16 255.00,372.03 255.48,371.90 255.96,371.77 256.44,371.65 256.92,371.53 257.40,371.41 257.89,371.29 258.37,371.17 258.85,371.06 259.33,370.94 259.81,370.83 260.29,370.72 260.78,370.61 261.26,370.50 261.74,370.40 262.22,370.29 262.70,370.19 263.18,370.09 263.67,369.99 264.15,369.89 264.63,369.79 265.11,369.70 265.59,369.60 266.07,369.51 266.56,369.42 267.04,369.33 267.52,369.24 268.00,369.15 268.48,369.06 268.96,368.98 269.45,368.89 269.93,368.81 270.41,368.72 270.89,368.64 271.37,368.56 271.85,368.48 272.34,368.40 272.82,368.33 273.30,368.25 273.78,368.17 274.26,368.10 274.74,368.02 275.23,367.95 275.71,367.88 276.19,367.81 276.67,367.74 277.15,367.67 277.63,367.60 278.11,367.53 278.60,367.47 279.08,367.40 279.56,367.34 280.04,367.27 280.52,367.21 281.00,367.15 281.49,367.08 281.97,367.02 282.45,366.96 282.93,366.90 283.41,366.84 283.89,366.78 284.38,366.73 284.86,366.67 285.34,366.61 285.82,366.56 286.30,366.50 286.78,366.45 287.27,366.39 287.75,366.34 288.23,366.29 288.71,366.24 289.19,366.19 289.67,366.14 290.16,366.09 290.64,366.04 291.12,365.99 291.60,365.94 292.08,365.89 292.56,365.84 293.05,365.80 293.53,365.75 294.01,365.71 294.49,365.66 294.97,365.62 295.45,365.57 295.94,365.53 296.42,365.48 296.90,365.44 297.38,365.40 297.86,365.36 298.34,365.32 298.83,365.28 299.31,365.24 299.79,365.20 300.27,365.16 300.75,365.12 301.23,365.08 301.72,365.04 302.20,365.00 302.68,364.96 303.16,364.93 303.64,364.89 304.12,364.85 304.61,364.82 305.09,364.78 305.57,364.75 306.05,364.71 306.53,364.68 307.01,364.65 307.49,364.61 307.98,364.58 308.46,364.55 308.94,364.51 309.42,364.48 309.90,364.45 310.38,364.42 310.87,364.39 311.35,364.36 311.83,364.33 312.31,364.30 312.79,364.27 313.27,364.24 313.76,364.21 314.24,364.18 314.72,364.15 315.20,364.12 315.68,364.09 316.16,364.07 316.65,364.04 317.13,364.01 317.61,363.98 318.09,363.96 318.57,363.93 319.05,363.91 319.54,363.88 320.02,363.85 320.50,363.83 320.98,363.80 321.46,363.78 321.94,363.75 322.43,363.73 322.91,363.71 323.39,363.68 323.87,363.66 324.35,363.64 324.83,363.61 325.32,363.59 325.80,363.57 326.28,363.54 326.76,363.52 327.24,363.50 327.72,363.48 328.21,363.46 328.69,363.44 329.17,363.41 329.65,363.39 330.13,363.37 330.61,363.35 331.10,363.33 331.58,363.31 332.06,363.29 332.54,363.27 333.02,363.25 333.50,363.23 333.98,363.22 334.47,363.20 334.95,363.18 335.43,363.16 335.91,363.14 336.39,363.12 336.87,363.10 337.36,363.09 337.84,363.07 338.32,363.05 338.80,363.03 339.28,363.02 339.76,363.00 340.25,362.98 340.73,362.97 341.21,362.95 341.69,362.93 342.17,362.92 342.65,362.90 343.14,362.89 343.62,362.87 344.10,362.85 344.58,362.84 345.06,362.82 345.54,362.81 346.03,362.79 346.51,362.78 346.99,362.76 347.47,362.75 347.95,362.74 348.43,362.72 348.92,362.71 349.40,362.69 349.88,362.68 350.36,362.67 350.84,362.65 351.32,362.64 351.81,362.62 352.29,362.61 352.77,362.60 353.25,362.59 353.73,362.57 354.21,362.56 354.70,362.55 355.18,362.53 355.66,362.52 356.14,362.51 356.62,362.50 357.10,362.49 357.59,362.47 358.07,362.46 358.55,362.45 359.03,362.44 359.51,362.43 359.99,362.42 360.48,362.40 360.96,362.39 361.44,362.38 361.92,362.37 362.40,362.36 362.88,362.35 363.36,362.34 363.85,362.33 364.33,362.32 364.81,362.31 365.29,362.30 365.77,362.29 366.25,362.28 366.74,362.27 367.22,362.26 367.70,362.25 368.18,362.24 368.66,362.23 369.14,362.22 369.63,362.21 370.11,362.20 370.59,362.19 371.07,362.18 371.55,362.17 372.03,362.16 372.52,362.15 373.00,362.14 373.48,362.14 373.96,362.13 374.44,362.12 374.92,362.11 375.41,362.10 375.89,362.09 376.37,362.08 376.85,362.08 377.33,362.07 377.81,362.06 378.30,362.05 378.78,362.04 379.26,362.04 379.74,362.03 380.22,362.02 380.70,362.01 381.19,362.00 381.67,362.00 382.15,361.99 382.63,361.98 383.11,361.97 383.59,361.97 384.08,361.96 384.56,361.95 385.04,361.95 385.52,361.94 386.00,361.93 386.48,361.92 386.97,361.92 387.45,361.91 387.93,361.90 388.41,361.90 388.89,361.89 389.37,361.88 389.85,361.88 390.34,361.87 390.82,361.86 391.30,361.86 391.78,361.85 392.26,361.85 392.74,361.84 393.23,361.83 393.71,361.83 394.19,361.82 394.67,361.82 395.15,361.81 395.63,361.80 396.12,361.80 396.60,361.79 397.08,361.79 397.56,361.78 398.04,361.78 398.52,361.77 399.01,361.76 399.49,361.76 399.97,361.75 400.45,361.75 400.93,361.74 401.41,361.74 401.90,361.73 402.38,361.73 402.86,361.72 403.34,361.72 403.82,361.71 404.30,361.71 404.79,361.70 405.27,361.70 405.75,361.69 406.23,361.69 406.71,361.68 407.19,361.68 407.68,361.67 408.16,361.67 408.64,361.66 409.12,361.66 409.60,361.65 410.08,361.65 410.57,361.64 411.05,361.64 411.53,361.64 412.01,361.63 412.49,361.63 412.97,361.62 413.46,361.62 413.94,361.61 414.42,361.61 414.90,361.61 415.38,361.60 415.86,361.60 416.35,361.59 416.83,361.59 417.31,361.59 417.79,361.58 418.27,361.58 418.75,361.57 419.23,361.57 419.72,361.57 420.20,361.56 420.68,361.56 421.16,361.55 421.64,361.55 422.12,361.55 422.61,361.54 423.09,361.54 423.57,361.54 424.05,361.53 424.53,361.53 425.01,361.53 425.50,361.52 425.98,361.52 426.46,361.52 426.94,361.51 427.42,361.51 427.90,361.51 428.39,361.50 428.87,361.50 429.35,361.50 429.83,361.49 430.31,361.49 430.79,361.49 431.28,361.48 431.76,361.48 432.24,361.48 432.72,361.47 433.20,361.47 433.68,361.47 434.17,361.46 434.65,361.46 435.13,361.46 435.61,361.46 436.09,361.45 436.57,361.45 437.06,361.45 437.54,361.44 438.02,361.44 438.50,361.44 438.98,361.44 439.46,361.43 439.95,361.43 440.43,361.43 440.91,361.43 441.39,361.42 441.87,361.42 442.35,361.42 442.84,361.42 443.32,361.41 443.80,361.41 444.28,361.41 444.76,361.41 445.24,361.40 445.72,361.40 446.21,361.40 446.69,361.40 447.17,361.39 447.65,361.39 448.13,361.39 448.61,361.39 449.10,361.38 449.58,361.38 450.06,361.38 450.54,361.38 451.02,361.37 451.50,361.37 451.99,361.37 452.47,361.37 452.95,361.37 453.43,361.36 453.91,361.36 454.39,361.36 454.88,361.36 455.36,361.36 455.84,361.35 456.32,361.35 456.80,361.35 457.28,361.35 457.77,361.35 458.25,361.34 458.73,361.34 459.21,361.34 459.69,361.34 460.17,361.34 460.66,361.33 461.14,361.33 461.62,361.33 462.10,361.33 462.58,361.33 463.06,361.32 463.55,361.32 464.03,361.32 464.51,361.32 464.99,361.32 465.47,361.32 465.95,361.31 466.44,361.31 466.92,361.31 467.40,361.31 467.88,361.31 468.36,361.31 468.84,361.30 469.33,361.30 469.81,361.30 470.29,361.30 470.77,361.30 471.25,361.30 471.73,361.29 472.22,361.29 472.70,361.29 473.18,361.29 473.66,361.29 474.14,361.29 474.62,361.28 475.10,361.28 475.59,361.28 476.07,361.28 476.55,361.28 477.03,361.28 477.51,361.28 477.99,361.27 478.48,361.27 478.96,361.27 479.44,361.27 479.92,361.27 480.40,361.27 480.88,361.27 481.37,361.27 481.85,361.26 482.33,361.26 482.81,361.26 483.29,361.26 483.77,361.26 484.26,361.26 484.74,361.26 485.22,361.25 485.70,361.25 486.18,361.25 486.66,361.25 487.15,361.25 487.63,361.25 488.11,361.25 488.59,361.25 489.07,361.24 489.55,361.24 490.04,361.24 490.52,361.24 491.00,361.24 491.48,361.24 491.96,361.24 492.44,361.24 492.93,361.24 493.41,361.23 493.89,361.23 494.37,361.23 494.85,361.23 495.33,361.23 495.82,361.23 496.30,361.23 496.78,361.23 497.26,361.23 497.74,361.23 498.22,361.22 498.71,361.22 499.19,361.22 499.67,361.22 500.15,361.22 500.63,361.22 501.11,361.22 501.59,361.22 502.08,361.22 502.56,361.22 503.04,361.21 503.52,361.21 504.00,361.21 504.48,361.21 504.97,361.21 505.45,361.21 505.93,361.21 506.41,361.21 506.89,361.21 507.37,361.21 507.86,361.21 508.34,361.20 508.82,361.20 509.30,361.20 509.78,361.20 510.26,361.20 510.75,361.20 511.23,361.20 511.71,361.20 512.19,361.20 512.67,361.20 513.15,361.20 513.64,361.20 514.12,361.19 514.60,361.19 515.08,361.19 515.56,361.19 516.04,361.19 516.53,361.19 517.01,361.19 517.49,361.19 517.97,361.19 518.45,361.19 518.93,361.19 519.42,361.19 519.90,361.19 520.38,361.18 520.86,361.18 521.34,361.18 521.82,361.18 522.31,361.18 522.79,361.18 523.27,361.18 523.75,361.18 524.23,361.18 524.71,361.18 525.20,361.18 525.68,361.18 526.16,361.18 526.64,361.18 527.12,361.18 527.60,361.17 528.09,361.17 528.57,361.17 529.05,361.17 529.53,361.17 530.01,361.17 530.49,361.17 530.97,361.17 531.46,361.17 531.94,361.17 532.42,361.17 532.90,361.17 533.38,361.17 533.86,361.17 534.35,361.17 534.83,361.17 535.31,361.17 535.79,361.16 536.27,361.16 536.75,361.16 537.24,361.16 537.72,361.16 538.20,361.16 538.68,361.16 539.16,361.16 539.64,361.16 540.13,361.16 540.61,361.16 541.09,361.16 541.57,361.16 542.05,361.16 542.53,361.16 543.02,361.16 543.50,361.16 543.98,361.16 544.46,361.16 544.94,361.15 545.42,361.15 545.91,361.15 546.39,361.15 546.87,361.15 547.35,361.15 547.83,361.15 548.31,361.15 548.80,361.15 549.28,361.15 549.76,361.15 550.24,361.15 550.72,361.15 551.20,361.15 551.69,361.15 552.17,361.15 552.65,361.15 553.13,361.15 553.61,361.15 554.09,361.15 554.58,361.15 555.06,361.15 555.54,361.15 556.02,361.14 556.50,361.14 556.98,361.14 557.46,361.14 557.95,361.14 558.43,361.14 558.91,361.14 559.39,361.14 559.87,361.14 560.35,361.14 560.84,361.14 561.32,361.14 561.80,361.14 562.28,361.14 562.76,361.14 563.24,361.14 563.73,361.14 564.21,361.14 564.69,361.14 565.17,361.14 565.65,361.14 566.13,361.14 566.62,361.14 567.10,361.14 567.58,361.14 568.06,361.14 568.54,361.14 569.02,361.14 569.51,361.13 569.99,361.13 570.47,361.13 570.95,361.13 571.43,361.13 571.91,361.13 572.40,361.13 572.88,361.13 573.36,361.13 573.84,361.13 574.32,361.13 574.80,361.13 575.29,361.13 575.77,361.13 576.25,361.13 576.73,361.13 577.21,361.13 577.69,361.13 578.18,361.13 578.66,361.13 579.14,361.13 579.62,361.13 580.10,361.13 580.58,361.13 581.07,361.13 581.55,361.13 582.03,361.13 582.51,361.13 582.99,361.13 583.47,361.13 583.96,361.13 584.44,361.13 584.92,361.13 585.40,361.13"/><polyline clip-path="url(#cl)" fill="none" stroke="#ff0a80" stroke-width="1.25" points="199.88,457.60 200.52,457.60 201.16,457.61 201.81,457.61 202.45,457.62 203.10,457.64 203.74,457.65 204.38,457.67 205.03,457.69 205.67,457.72 206.31,457.74 206.96,457.77 207.60,457.80 208.24,457.84 208.89,457.88 209.53,457.92 210.17,457.96 210.82,458.01 211.46,458.06 212.11,458.11 212.75,458.16 213.39,458.22 214.04,458.28 214.68,458.34 215.32,458.41 215.97,458.48 216.61,458.55 217.25,458.62 217.90,458.70 218.54,458.78 219.19,458.86 219.83,458.94 220.47,459.03 221.12,459.12 221.76,459.21 222.40,459.31 223.05,459.41 223.69,459.51 224.33,459.61 224.98,459.72 225.62,459.83 226.27,459.94 226.91,460.05 227.55,460.17 228.20,460.29 228.84,460.41 229.48,460.54 230.13,460.66 230.77,460.79 231.41,460.93 232.06,461.06 232.70,461.20 233.34,461.34 233.99,461.48 234.63,461.63 235.28,461.78 235.92,461.93 236.56,462.08 237.21,462.24 237.85,462.40 238.49,462.56 239.14,462.72 239.78,462.89 240.42,463.05 241.07,463.23 241.71,463.40 242.36,463.57 243.00,463.75 243.64,463.93 244.29,464.12 244.93,464.30 245.57,464.49 246.22,464.68 246.86,464.88 247.50,465.07 248.15,465.27 248.79,465.47 249.44,465.67 250.08,465.88 250.72,466.09 251.37,466.29 252.01,466.51 252.65,466.72 253.30,466.94 253.94,467.16 254.58,467.38 255.23,467.60 255.87,467.83 256.51,468.06 257.16,468.29 257.80,468.52 258.45,468.75 259.09,468.99 259.73,469.23 260.38,469.47 261.02,469.72 261.66,469.96 262.31,470.21 262.95,470.46 263.59,470.71 264.24,470.97 264.88,471.22 265.53,471.48 266.17,471.74 266.81,472.00 267.46,472.27 268.10,472.53 268.74,472.80 269.39,473.07 270.03,473.35 270.67,473.62 271.32,473.90 271.96,474.18 272.61,474.46 273.25,474.74 273.89,475.02 274.54,475.31 275.18,475.60 275.82,475.89 276.47,476.18 277.11,476.47 277.75,476.77 278.40,477.06 279.04,477.36 279.68,477.66 280.33,477.97 280.97,478.27 281.62,478.57 282.26,478.88 282.90,479.19 283.55,479.50 284.19,479.81 284.83,480.13 285.48,480.44 286.12,480.76 286.76,481.08 287.41,481.40 288.05,481.72 288.70,482.05 289.34,482.37 289.98,482.70 290.63,483.03 291.27,483.36 291.91,483.69 292.56,484.02 293.20,484.35 293.84,484.69 294.49,485.03 295.13,485.36 295.78,485.70 296.42,486.04 297.06,486.39 297.71,486.73 298.35,487.07 298.99,487.42 299.64,487.77 300.28,488.11 300.92,488.46 301.57,488.82 302.21,489.17 302.85,489.52 303.50,489.87 304.14,490.23 304.79,490.59 305.43,490.94 306.07,491.30 306.72,491.66 307.36,492.02 308.00,492.38 308.65,492.75 309.29,493.11 309.93,493.48 310.58,493.84 311.22,494.21 311.87,494.57 312.51,494.94 313.15,495.31 313.80,495.68 314.44,496.05 315.08,496.42 315.73,496.80 316.37,497.17 317.01,497.54 317.66,497.92 318.30,498.29 318.95,498.67 319.59,499.05 320.23,499.42 320.88,499.80 321.52,500.18 322.16,500.56 322.81,500.94 323.45,501.32 324.09,501.70 324.74,502.08 325.38,502.47 326.02,502.85 326.67,503.23 327.31,503.61 327.96,504.00 328.60,504.38 329.24,504.77 329.89,505.15 330.53,505.54 331.17,505.92 331.82,506.31 332.46,506.70 333.10,507.08 333.75,507.47 334.39,507.86 335.04,508.24 335.68,508.63 336.32,509.02 336.97,509.41 337.61,509.79 338.25,510.18 338.90,510.57 339.54,510.96 340.18,511.35 340.83,511.74 341.47,512.12 342.12,512.51 342.76,512.90 343.40,513.29 344.05,513.68 344.69,514.07 345.33,514.45 345.98,514.84 346.62,515.23 347.26,515.62 347.91,516.01 348.55,516.39 349.19,516.78 349.84,517.17 350.48,517.56 351.13,517.94 351.77,518.33 352.41,518.71 353.06,519.10 353.70,519.49 354.34,519.87 354.99,520.26 355.63,520.64 356.27,521.02 356.92,521.41 357.56,521.79 358.21,522.17 358.85,522.55 359.49,522.94 360.14,523.32 360.78,523.70 361.42,524.08 362.07,524.46 362.71,524.84 363.35,525.21 364.00,525.59 364.64,525.97 365.29,526.35 365.93,526.72 366.57,527.10 367.22,527.47 367.86,527.84 368.50,528.22 369.15,528.59 369.79,528.96 370.43,529.33 371.08,529.70 371.72,530.07 372.36,530.44 373.01,530.80 373.65,531.17 374.30,531.53 374.94,531.90 375.58,532.26 376.23,532.62 376.87,532.99 377.51,533.35 378.16,533.71 378.80,534.06 379.44,534.42 380.09,534.78 380.73,535.13 381.38,535.49 382.02,535.84 382.66,536.19 383.31,536.54 383.95,536.89 384.59,537.24 385.24,537.59 385.88,537.93 386.52,538.28 387.17,538.62 387.81,538.96 388.46,539.31 389.10,539.65 389.74,539.98 390.39,540.32 391.03,540.66 391.67,540.99 392.32,541.32 392.96,541.66 393.60,541.99 394.25,542.32 394.89,542.64 395.53,542.97 396.18,543.29 396.82,543.62 397.47,543.94 398.11,544.26 398.75,544.58 399.40,544.90 400.04,545.21 400.68,545.53 401.33,545.84 401.97,546.15 402.61,546.46 403.26,546.77 403.90,547.07 404.55,547.38 405.19,547.68 405.83,547.98 406.48,548.28 407.12,548.58 407.76,548.88 408.41,549.17 409.05,549.46 409.69,549.76 410.34,550.04 410.98,550.33 411.63,550.62 412.27,550.90 412.91,551.19 413.56,551.47 414.20,551.74 414.84,552.02 415.49,552.30 416.13,552.57 416.77,552.84 417.42,553.11 418.06,553.38 418.70,553.64 419.35,553.91 419.99,554.17 420.64,554.43 421.28,554.69 421.92,554.95 422.57,555.20 423.21,555.45 423.85,555.70 424.50,555.95 425.14,556.20 425.78,556.44 426.43,556.68 427.07,556.92 427.72,557.16 428.36,557.40 429.00,557.63 429.65,557.87 430.29,558.10 430.93,558.32 431.58,558.55 432.22,558.77 432.86,559.00 433.51,559.22 434.15,559.43 434.80,559.65 435.44,559.86 436.08,560.07 436.73,560.28 437.37,560.49 438.01,560.70 438.66,560.90 439.30,561.10 439.94,561.30 440.59,561.49 441.23,561.69 441.87,561.88 442.52,562.07 443.16,562.26 443.81,562.44 444.45,562.62 445.09,562.80 445.74,562.98 446.38,563.16 447.02,563.33 447.67,563.51 448.31,563.68 448.95,563.84 449.60,564.01 450.24,564.17 450.89,564.33 451.53,564.49 452.17,564.65 452.82,564.80 453.46,564.95 454.10,565.10 454.75,565.25 455.39,565.39 456.03,565.53 456.68,565.67 457.32,565.81 457.97,565.95 458.61,566.08 459.25,566.21 459.90,566.34 460.54,566.46 461.18,566.59 461.83,566.71 462.47,566.83 463.11,566.95 463.76,567.06 464.40,567.17 465.04,567.28 465.69,567.39 466.33,567.50 466.98,567.60 467.62,567.70 468.26,567.80 468.91,567.89 469.55,567.99 470.19,568.08 470.84,568.17 471.48,568.25 472.12,568.34 472.77,568.42 473.41,568.50 474.06,568.58 474.70,568.65 475.34,568.72 475.99,568.79 476.63,568.86 477.27,568.93 477.92,568.99 478.56,569.05 479.20,569.11 479.85,569.16 480.49,569.22 481.14,569.27 481.78,569.32 482.42,569.37 483.07,569.41 483.71,569.45 484.35,569.49 485.00,569.53 485.64,569.57 486.28,569.60 486.93,569.63 487.57,569.66 488.21,569.68 488.86,569.71 489.50,569.73 490.15,569.75 490.79,569.77 491.43,569.78 492.08,569.79 492.72,569.80 493.36,569.81 494.01,569.82 494.65,569.82 495.29,569.82 495.94,569.82 496.58,569.82 497.23,569.81 497.87,569.80 498.51,569.79 499.16,569.78 499.80,569.77 500.44,569.75 501.09,569.73 501.73,569.71 502.37,569.69 503.02,569.66 503.66,569.63 504.31,569.60 504.95,569.57 505.59,569.54 506.24,569.50 506.88,569.46 507.52,569.42 508.17,569.38 508.81,569.33 509.45,569.29 510.10,569.24 510.74,569.19 511.38,569.13 512.03,569.08 512.67,569.02 513.32,568.96 513.96,568.90 514.60,568.84 515.25,568.77 515.89,568.70 516.53,568.63 517.18,568.56 517.82,568.49 518.46,568.41 519.11,568.34 519.75,568.26 520.40,568.17 521.04,568.09 521.68,568.01 522.33,567.92 522.97,567.83 523.61,567.74 524.26,567.64 524.90,567.55 525.54,567.45 526.19,567.35 526.83,567.25 527.48,567.15 528.12,567.05 528.76,566.94 529.41,566.83 530.05,566.72 530.69,566.61 531.34,566.50 531.98,566.38 532.62,566.26 533.27,566.14 533.91,566.02 534.55,565.90 535.20,565.78 535.84,565.65 536.49,565.52 537.13,565.39 537.77,565.26 538.42,565.13 539.06,564.99 539.70,564.86 540.35,564.72 540.99,564.58 541.63,564.44 542.28,564.30 542.92,564.15 543.57,564.01 544.21,563.86 544.85,563.71 545.50,563.56 546.14,563.41 546.78,563.26 547.43,563.10 548.07,562.95 548.71,562.79 549.36,562.63 550.00,562.47 550.65,562.31 551.29,562.14 551.93,561.98 552.58,561.81 553.22,561.64 553.86,561.47 554.51,561.30 555.15,561.13 555.79,560.96 556.44,560.78 557.08,560.61 557.72,560.43 558.37,560.25 559.01,560.07 559.66,559.89 560.30,559.71 560.94,559.53 561.59,559.34 562.23,559.16 562.87,558.97 563.52,558.78 564.16,558.59 564.80,558.40 565.45,558.21 566.09,558.02 566.74,557.82 567.38,557.63 568.02,557.43 568.67,557.24 569.31,557.04 569.95,556.84 570.60,556.64 571.24,556.44 571.88,556.24 572.53,556.04 573.17,555.83 573.82,555.63 574.46,555.42 575.10,555.22 575.75,555.01 576.39,554.80 577.03,554.59 577.68,554.38 578.32,554.17 578.96,553.96 579.61,553.75 580.25,553.54 580.89,553.32 581.54,553.11 582.18,552.89 582.83,552.68 583.47,552.46 584.11,552.24 584.76,552.03 585.40,551.81"/><polyline clip-path="url(#cl)" fill="none" stroke="#ff0a80" stroke-width="1.25" points="199.88,537.56 200.52,537.23 201.16,536.89 201.81,536.56 202.45,536.22 203.10,535.89 203.74,535.56 204.38,535.22 205.03,534.89 205.67,534.56 206.31,534.22 206.96,533.89 207.60,533.56 208.24,533.23 208.89,532.89 209.53,532.56 210.17,532.23 210.82,531.90 211.46,531.57 212.11,531.24 212.75,530.91 213.39,530.58 214.04,530.25 214.68,529.92 215.32,529.59 215.97,529.26 216.61,528.93 217.25,528.60 217.90,528.28 218.54,527.95 219.19,527.62 219.83,527.30 220.47,526.97 221.12,526.65 221.76,526.33 222.40,526.00 223.05,525.68 223.69,525.36 224.33,525.04 224.98,524.71 225.62,524.39 226.27,524.07 226.91,523.76 227.55,523.44 228.20,523.12 228.84,522.80 229.48,522.49 230.13,522.17 230.77,521.86 231.41,521.54 232.06,521.23 232.70,520.92 233.34,520.61 233.99,520.30 234.63,519.99 235.28,519.68 235.92,519.37 236.56,519.07 237.21,518.76 237.85,518.46 238.49,518.16 239.14,517.85 239.78,517.55 240.42,517.25 241.07,516.95 241.71,516.65 242.36,516.36 243.00,516.06 243.64,515.77 244.29,515.47 244.93,515.18 245.57,514.89 246.22,514.60 246.86,514.31 247.50,514.02 248.15,513.74 248.79,513.45 249.44,513.17 250.08,512.88 250.72,512.60 251.37,512.32 252.01,512.04 252.65,511.76 253.30,511.49 253.94,511.21 254.58,510.94 255.23,510.67 255.87,510.40 256.51,510.13 257.16,509.86 257.80,509.59 258.45,509.33 259.09,509.06 259.73,508.80 260.38,508.54 261.02,508.28 261.66,508.03 262.31,507.77 262.95,507.52 263.59,507.26 264.24,507.01 264.88,506.76 265.53,506.51 266.17,506.27 266.81,506.02 267.46,505.78 268.10,505.54 268.74,505.30 269.39,505.06 270.03,504.82 270.67,504.59 271.32,504.35 271.96,504.12 272.61,503.89 273.25,503.66 273.89,503.44 274.54,503.21 275.18,502.99 275.82,502.77 276.47,502.55 277.11,502.33 277.75,502.12 278.40,501.90 279.04,501.69 279.68,501.48 280.33,501.27 280.97,501.07 281.62,500.86 282.26,500.66 282.90,500.46 283.55,500.26 284.19,500.06 284.83,499.87 285.48,499.67 286.12,499.48 286.76,499.29 287.41,499.11 288.05,498.92 288.70,498.74 289.34,498.56 289.98,498.38 290.63,498.20 291.27,498.02 291.91,497.85 292.56,497.68 293.20,497.51 293.84,497.34 294.49,497.18 295.13,497.02 295.78,496.86 296.42,496.70 297.06,496.54 297.71,496.38 298.35,496.23 298.99,496.08 299.64,495.93 300.28,495.79 300.92,495.64 301.57,495.50 302.21,495.36 302.85,495.22 303.50,495.09 304.14,494.95 304.79,494.82 305.43,494.69 306.07,494.57 306.72,494.44 307.36,494.32 308.00,494.20 308.65,494.08 309.29,493.97 309.93,493.85 310.58,493.74 311.22,493.63 311.87,493.52 312.51,493.42 313.15,493.32 313.80,493.22 314.44,493.12 315.08,493.02 315.73,492.93 316.37,492.84 317.01,492.75 317.66,492.66 318.30,492.58 318.95,492.49 319.59,492.41 320.23,492.34 320.88,492.26 321.52,492.19 322.16,492.12 322.81,492.05 323.45,491.98 324.09,491.92 324.74,491.86 325.38,491.80 326.02,491.74 326.67,491.68 327.31,491.63 327.96,491.58 328.60,491.53 329.24,491.49 329.89,491.44 330.53,491.40 331.17,491.36 331.82,491.33 332.46,491.29 333.10,491.26 333.75,491.23 334.39,491.20 335.04,491.18 335.68,491.15 336.32,491.13 336.97,491.12 337.61,491.10 338.25,491.09 338.90,491.07 339.54,491.06 340.18,491.06 340.83,491.05 341.47,491.05 342.12,491.05 342.76,491.05 343.40,491.06 344.05,491.06 344.69,491.07 345.33,491.09 345.98,491.10 346.62,491.11 347.26,491.13 347.91,491.15 348.55,491.18 349.19,491.20 349.84,491.23 350.48,491.26 351.13,491.29 351.77,491.32 352.41,491.36 353.06,491.40 353.70,491.44 354.34,491.48 354.99,491.53 355.63,491.58 356.27,491.62 356.92,491.68 357.56,491.73 358.21,491.79 358.85,491.85 359.49,491.91 360.14,491.97 360.78,492.03 361.42,492.10 362.07,492.17 362.71,492.24 363.35,492.32 364.00,492.39 364.64,492.47 365.29,492.55 365.93,492.63 366.57,492.72 367.22,492.80 367.86,492.89 368.50,492.98 369.15,493.08 369.79,493.17 370.43,493.27 371.08,493.37 371.72,493.47 372.36,493.57 373.01,493.68 373.65,493.79 374.30,493.90 374.94,494.01 375.58,494.12 376.23,494.24 376.87,494.35 377.51,494.47 378.16,494.59 378.80,494.72 379.44,494.84 380.09,494.97 380.73,495.10 381.38,495.23 382.02,495.37 382.66,495.50 383.31,495.64 383.95,495.78 384.59,495.92 385.24,496.06 385.88,496.21 386.52,496.35 387.17,496.50 387.81,496.65 388.46,496.81 389.10,496.96 389.74,497.12 390.39,497.28 391.03,497.44 391.67,497.60 392.32,497.76 392.96,497.93 393.60,498.09 394.25,498.26 394.89,498.43 395.53,498.60 396.18,498.78 396.82,498.95 397.47,499.13 398.11,499.31 398.75,499.49 399.40,499.67 400.04,499.86 400.68,500.04 401.33,500.23 401.97,500.42 402.61,500.61 403.26,500.80 403.90,500.99 404.55,501.19 405.19,501.39 405.83,501.58 406.48,501.78 407.12,501.99 407.76,502.19 408.41,502.39 409.05,502.60 409.69,502.81 410.34,503.02 410.98,503.23 411.63,503.44 412.27,503.65 412.91,503.87 413.56,504.08 414.20,504.30 414.84,504.52 415.49,504.74 416.13,504.96 416.77,505.18 417.42,505.41 418.06,505.63 418.70,505.86 419.35,506.09 419.99,506.31 420.64,506.55 421.28,506.78 421.92,507.01 422.57,507.24 423.21,507.48 423.85,507.71 424.50,507.95 425.14,508.19 425.78,508.43 426.43,508.67 427.07,508.91 427.72,509.16 428.36,509.40 429.00,509.65 429.65,509.89 430.29,510.14 430.93,510.39 431.58,510.64 432.22,510.89 432.86,511.14 433.51,511.39 434.15,511.64 434.80,511.90 435.44,512.15 436.08,512.41 436.73,512.66 437.37,512.92 438.01,513.18 438.66,513.44 439.30,513.70 439.94,513.96 440.59,514.22 441.23,514.48 441.87,514.75 442.52,515.01 443.16,515.28 443.81,515.54 444.45,515.81 445.09,516.07 445.74,516.34 446.38,516.61 447.02,516.88 447.67,517.14 448.31,517.41 448.95,517.68 449.60,517.96 450.24,518.23 450.89,518.50 451.53,518.77 452.17,519.04 452.82,519.32 453.46,519.59 454.10,519.86 454.75,520.14 455.39,520.41 456.03,520.69 456.68,520.97 457.32,521.24 457.97,521.52 458.61,521.80 459.25,522.07 459.90,522.35 460.54,522.63 461.18,522.91 461.83,523.18 462.47,523.46 463.11,523.74 463.76,524.02 464.40,524.30 465.04,524.58 465.69,524.86 466.33,525.14 466.98,525.42 467.62,525.70 468.26,525.98 468.91,526.26 469.55,526.54 470.19,526.82 470.84,527.10 471.48,527.38 472.12,527.66 472.77,527.94 473.41,528.22 474.06,528.50 474.70,528.78 475.34,529.06 475.99,529.34 476.63,529.61 477.27,529.89 477.92,530.17 478.56,530.45 479.20,530.73 479.85,531.01 480.49,531.29 481.14,531.57 481.78,531.84 482.42,532.12 483.07,532.40 483.71,532.68 484.35,532.95 485.00,533.23 485.64,533.51 486.28,533.78 486.93,534.06 487.57,534.33 488.21,534.61 488.86,534.88 489.50,535.16 490.15,535.43 490.79,535.70 491.43,535.97 492.08,536.25 492.72,536.52 493.36,536.79 494.01,537.06 494.65,537.33 495.29,537.60 495.94,537.87 496.58,538.13 497.23,538.40 497.87,538.67 498.51,538.93 499.16,539.20 499.80,539.46 500.44,539.73 501.09,539.99 501.73,540.25 502.37,540.52 503.02,540.78 503.66,541.04 504.31,541.30 504.95,541.56 505.59,541.81 506.24,542.07 506.88,542.33 507.52,542.58 508.17,542.84 508.81,543.09 509.45,543.35 510.10,543.60 510.74,543.85 511.38,544.10 512.03,544.35 512.67,544.60 513.32,544.84 513.96,545.09 514.60,545.34 515.25,545.58 515.89,545.82 516.53,546.07 517.18,546.31 517.82,546.55 518.46,546.79 519.11,547.02 519.75,547.26 520.40,547.50 521.04,547.73 521.68,547.97 522.33,548.20 522.97,548.43 523.61,548.66 524.26,548.89 524.90,549.12 525.54,549.34 526.19,549.57 526.83,549.79 527.48,550.01 528.12,550.24 528.76,550.46 529.41,550.68 530.05,550.89 530.69,551.11 531.34,551.33 531.98,551.54 532.62,551.75 533.27,551.96 533.91,552.17 534.55,552.38 535.20,552.59 535.84,552.79 536.49,553.00 537.13,553.20 537.77,553.40 538.42,553.60 539.06,553.80 539.70,554.00 540.35,554.19 540.99,554.39 541.63,554.58 542.28,554.77 542.92,554.96 543.57,555.15 544.21,555.34 544.85,555.52 545.50,555.71 546.14,555.89 546.78,556.07 547.43,556.25 548.07,556.43 548.71,556.60 549.36,556.78 550.00,556.95 550.65,557.12 551.29,557.29 551.93,557.46 552.58,557.62 553.22,557.79 553.86,557.95 554.51,558.11 555.15,558.27 555.79,558.43 556.44,558.59 557.08,558.74 557.72,558.90 558.37,559.05 559.01,559.20 559.66,559.34 560.30,559.49 560.94,559.64 561.59,559.78 562.23,559.92 562.87,560.06 563.52,560.20 564.16,560.33 564.80,560.47 565.45,560.60 566.09,560.73 566.74,560.86 567.38,560.99 568.02,561.11 568.67,561.23 569.31,561.36 569.95,561.48 570.60,561.59 571.24,561.71 571.88,561.82 572.53,561.94 573.17,562.05 573.82,562.16 574.46,562.26 575.10,562.37 575.75,562.47 576.39,562.58 577.03,562.68 577.68,562.77 578.32,562.87 578.96,562.96 579.61,563.06 580.25,563.15 580.89,563.24 581.54,563.32 582.18,563.41 582.83,563.49 583.47,563.57 584.11,563.65 584.76,563.73 585.40,563.81"/><polyline clip-path="url(#cl)" fill="none" stroke="#ff0a80" stroke-width="1.25" points="199.88,537.60 200.52,537.60 201.16,537.60 201.81,537.59 202.45,537.59 203.10,537.58 203.74,537.57 204.38,537.56 205.03,537.55 205.67,537.54 206.31,537.53 206.96,537.51 207.60,537.50 208.24,537.48 208.89,537.46 209.53,537.44 210.17,537.42 210.82,537.40 211.46,537.37 212.11,537.35 212.75,537.32 213.39,537.29 214.04,537.26 214.68,537.23 215.32,537.20 215.97,537.16 216.61,537.13 217.25,537.09 217.90,537.05 218.54,537.01 219.19,536.97 219.83,536.93 220.47,536.89 221.12,536.84 221.76,536.79 222.40,536.75 223.05,536.70 223.69,536.65 224.33,536.60 224.98,536.54 225.62,536.49 226.27,536.43 226.91,536.38 227.55,536.32 228.20,536.26 228.84,536.20 229.48,536.14 230.13,536.07 230.77,536.01 231.41,535.94 232.06,535.88 232.70,535.81 233.34,535.74 233.99,535.67 234.63,535.59 235.28,535.52 235.92,535.45 236.56,535.37 237.21,535.29 237.85,535.21 238.49,535.14 239.14,535.05 239.78,534.97 240.42,534.89 241.07,534.80 241.71,534.72 242.36,534.63 243.00,534.54 243.64,534.45 244.29,534.36 244.93,534.27 245.57,534.18 246.22,534.09 246.86,533.99 247.50,533.89 248.15,533.80 248.79,533.70 249.44,533.60 250.08,533.50 250.72,533.40 251.37,533.29 252.01,533.19 252.65,533.08 253.30,532.98 253.94,532.87 254.58,532.76 255.23,532.65 255.87,532.54 256.51,532.43 257.16,532.32 257.80,532.21 258.45,532.09 259.09,531.98 259.73,531.86 260.38,531.74 261.02,531.62 261.66,531.50 262.31,531.38 262.95,531.26 263.59,531.14 264.24,531.02 264.88,530.89 265.53,530.77 266.17,530.64 266.81,530.51 267.46,530.39 268.10,530.26 268.74,530.13 269.39,530.00 270.03,529.87 270.67,529.73 271.32,529.60 271.96,529.47 272.61,529.33 273.25,529.20 273.89,529.06 274.54,528.92 275.18,528.78 275.82,528.65 276.47,528.51 277.11,528.37 277.75,528.23 278.40,528.08 279.04,527.94 279.68,527.80 280.33,527.65 280.97,527.51 281.62,527.36 282.26,527.22 282.90,527.07 283.55,526.92 284.19,526.78 284.83,526.63 285.48,526.48 286.12,526.33 286.76,526.18 287.41,526.03 288.05,525.88 288.70,525.72 289.34,525.57 289.98,525.42 290.63,525.26 291.27,525.11 291.91,524.96 292.56,524.80 293.20,524.64 293.84,524.49 294.49,524.33 295.13,524.17 295.78,524.02 296.42,523.86 297.06,523.70 297.71,523.54 298.35,523.38 298.99,523.22 299.64,523.06 300.28,522.90 300.92,522.74 301.57,522.58 302.21,522.42 302.85,522.26 303.50,522.09 304.14,521.93 304.79,521.77 305.43,521.61 306.07,521.44 306.72,521.28 307.36,521.12 308.00,520.95 308.65,520.79 309.29,520.62 309.93,520.46 310.58,520.29 311.22,520.13 311.87,519.96 312.51,519.80 313.15,519.63 313.80,519.47 314.44,519.30 315.08,519.14 315.73,518.97 316.37,518.80 317.01,518.64 317.66,518.47 318.30,518.31 318.95,518.14 319.59,517.97 320.23,517.81 320.88,517.64 321.52,517.47 322.16,517.31 322.81,517.14 323.45,516.98 324.09,516.81 324.74,516.64 325.38,516.48 326.02,516.31 326.67,516.15 327.31,515.98 327.96,515.82 328.60,515.65 329.24,515.49 329.89,515.32 330.53,515.16 331.17,514.99 331.82,514.83 332.46,514.66 333.10,514.50 333.75,514.34 334.39,514.17 335.04,514.01 335.68,513.85 336.32,513.68 336.97,513.52 337.61,513.36 338.25,513.20 338.90,513.04 339.54,512.88 340.18,512.72 340.83,512.56 341.47,512.40 342.12,512.24 342.76,512.08 343.40,511.92 344.05,511.76 344.69,511.60 345.33,511.45 345.98,511.29 346.62,511.14 347.26,510.98 347.91,510.82 348.55,510.67 349.19,510.52 349.84,510.36 350.48,510.21 351.13,510.06 351.77,509.90 352.41,509.75 353.06,509.60 353.70,509.45 354.34,509.30 354.99,509.15 355.63,509.01 356.27,508.86 356.92,508.71 357.56,508.56 358.21,508.42 358.85,508.27 359.49,508.13 360.14,507.99 360.78,507.84 361.42,507.70 362.07,507.56 362.71,507.42 363.35,507.28 364.00,507.14 364.64,507.00 365.29,506.87 365.93,506.73 366.57,506.59 367.22,506.46 367.86,506.33 368.50,506.19 369.15,506.06 369.79,505.93 370.43,505.80 371.08,505.67 371.72,505.54 372.36,505.41 373.01,505.29 373.65,505.16 374.30,505.03 374.94,504.91 375.58,504.79 376.23,504.67 376.87,504.54 377.51,504.42 378.16,504.30 378.80,504.19 379.44,504.07 380.09,503.95 380.73,503.84 381.38,503.72 382.02,503.61 382.66,503.50 383.31,503.39 383.95,503.28 384.59,503.17 385.24,503.06 385.88,502.96 386.52,502.85 387.17,502.75 387.81,502.64 388.46,502.54 389.10,502.44 389.74,502.34 390.39,502.24 391.03,502.15 391.67,502.05 392.32,501.96 392.96,501.86 393.60,501.77 394.25,501.68 394.89,501.59 395.53,501.50 396.18,501.41 396.82,501.33 397.47,501.24 398.11,501.16 398.75,501.08 399.40,501.00 400.04,500.92 400.68,500.84 401.33,500.76 401.97,500.68 402.61,500.61 403.26,500.54 403.90,500.46 404.55,500.39 405.19,500.32 405.83,500.26 406.48,500.19 407.12,500.12 407.76,500.06 408.41,500.00 409.05,499.94 409.69,499.88 410.34,499.82 410.98,499.76 411.63,499.71 412.27,499.65 412.91,499.60 413.56,499.55 414.20,499.50 414.84,499.45 415.49,499.40 416.13,499.36 416.77,499.31 417.42,499.27 418.06,499.23 418.70,499.19 419.35,499.15 419.99,499.11 420.64,499.08 421.28,499.05 421.92,499.01 422.57,498.98 423.21,498.95 423.85,498.92 424.50,498.90 425.14,498.87 425.78,498.85 426.43,498.83 427.07,498.81 427.72,498.79 428.36,498.77 429.00,498.75 429.65,498.74 430.29,498.73 430.93,498.72 431.58,498.71 432.22,498.70 432.86,498.69 433.51,498.69 434.15,498.68 434.80,498.68 435.44,498.68 436.08,498.68 436.73,498.68 437.37,498.69 438.01,498.69 438.66,498.70 439.30,498.71 439.94,498.72 440.59,498.73 441.23,498.75 441.87,498.76 442.52,498.78 443.16,498.79 443.81,498.81 444.45,498.84 445.09,498.86 445.74,498.88 446.38,498.91 447.02,498.94 447.67,498.97 448.31,499.00 448.95,499.03 449.60,499.06 450.24,499.10 450.89,499.14 451.53,499.17 452.17,499.21 452.82,499.26 453.46,499.30 454.10,499.34 454.75,499.39 455.39,499.44 456.03,499.49 456.68,499.54 457.32,499.59 457.97,499.65 458.61,499.70 459.25,499.76 459.90,499.82 460.54,499.88 461.18,499.94 461.83,500.00 462.47,500.07 463.11,500.14 463.76,500.20 464.40,500.27 465.04,500.35 465.69,500.42 466.33,500.49 466.98,500.57 467.62,500.65 468.26,500.73 468.91,500.81 469.55,500.89 470.19,500.97 470.84,501.06 471.48,501.14 472.12,501.23 472.77,501.32 473.41,501.41 474.06,501.50 474.70,501.60 475.34,501.69 475.99,501.79 476.63,501.89 477.27,501.99 477.92,502.09 478.56,502.20 479.20,502.30 479.85,502.41 480.49,502.51 481.14,502.62 481.78,502.73 482.42,502.84 483.07,502.96 483.71,503.07 484.35,503.19 485.00,503.31 485.64,503.43 486.28,503.55 486.93,503.67 487.57,503.79 488.21,503.92 488.86,504.04 489.50,504.17 490.15,504.30 490.79,504.43 491.43,504.56 492.08,504.69 492.72,504.83 493.36,504.96 494.01,505.10 494.65,505.24 495.29,505.38 495.94,505.52 496.58,505.66 497.23,505.80 497.87,505.95 498.51,506.10 499.16,506.24 499.80,506.39 500.44,506.54 501.09,506.69 501.73,506.85 502.37,507.00 503.02,507.16 503.66,507.31 504.31,507.47 504.95,507.63 505.59,507.79 506.24,507.95 506.88,508.11 507.52,508.28 508.17,508.44 508.81,508.61 509.45,508.77 510.10,508.94 510.74,509.11 511.38,509.28 512.03,509.45 512.67,509.63 513.32,509.80 513.96,509.98 514.60,510.15 515.25,510.33 515.89,510.51 516.53,510.69 517.18,510.87 517.82,511.05 518.46,511.23 519.11,511.42 519.75,511.60 520.40,511.79 521.04,511.97 521.68,512.16 522.33,512.35 522.97,512.54 523.61,512.73 524.26,512.92 524.90,513.11 525.54,513.31 526.19,513.50 526.83,513.70 527.48,513.89 528.12,514.09 528.76,514.29 529.41,514.49 530.05,514.69 530.69,514.89 531.34,515.09 531.98,515.29 532.62,515.50 533.27,515.70 533.91,515.90 534.55,516.11 535.20,516.32 535.84,516.52 536.49,516.73 537.13,516.94 537.77,517.15 538.42,517.36 539.06,517.57 539.70,517.78 540.35,517.99 540.99,518.21 541.63,518.42 542.28,518.64 542.92,518.85 543.57,519.07 544.21,519.28 544.85,519.50 545.50,519.72 546.14,519.93 546.78,520.15 547.43,520.37 548.07,520.59 548.71,520.81 549.36,521.03 550.00,521.25 550.65,521.48 551.29,521.70 551.93,521.92 552.58,522.14 553.22,522.37 553.86,522.59 554.51,522.82 555.15,523.04 555.79,523.27 556.44,523.49 557.08,523.72 557.72,523.95 558.37,524.17 559.01,524.40 559.66,524.63 560.30,524.86 560.94,525.08 561.59,525.31 562.23,525.54 562.87,525.77 563.52,526.00 564.16,526.23 564.80,526.46 565.45,526.69 566.09,526.92 566.74,527.15 567.38,527.38 568.02,527.61 568.67,527.84 569.31,528.08 569.95,528.31 570.60,528.54 571.24,528.77 571.88,529.00 572.53,529.24 573.17,529.47 573.82,529.70 574.46,529.93 575.10,530.16 575.75,530.40 576.39,530.63 577.03,530.86 577.68,531.09 578.32,531.32 578.96,531.56 579.61,531.79 580.25,532.02 580.89,532.25 581.54,532.49 582.18,532.72 582.83,532.95 583.47,533.18 584.11,533.41 584.76,533.64 585.40,533.87"/><polyline clip-path="url(#cl)" fill="none" stroke="#1e8cff" stroke-width="1.35" stroke-dasharray="3 1.4" points="200.57,778.04 201.05,753.31 201.53,736.73 202.02,724.24 202.50,714.20 202.98,705.81 203.46,698.60 203.94,692.28 204.42,686.64 204.91,681.56 205.39,676.94 205.87,672.69 206.35,668.76 206.83,665.10 207.31,661.68 207.80,658.47 208.28,655.44 208.76,652.58 209.24,649.86 209.72,647.27 210.20,644.80 210.69,642.44 211.17,640.18 211.65,638.01 212.13,635.91 212.61,633.90 213.09,631.96 213.58,630.08 214.06,628.26 214.54,626.50 215.02,624.80 215.50,623.14 215.98,621.53 216.47,619.96 216.95,618.44 217.43,616.95 217.91,615.50 218.39,614.09 218.87,612.71 219.36,611.36 219.84,610.04 220.32,608.75 220.80,607.49 221.28,606.25 221.76,605.04 222.24,603.85 222.73,602.68 223.21,601.54 223.69,600.41 224.17,599.31 224.65,598.23 225.13,597.16 225.62,596.11 226.10,595.08 226.58,594.07 227.06,593.07 227.54,592.09 228.02,591.12 228.51,590.16 228.99,589.22 229.47,588.30 229.95,587.38 230.43,586.48 230.91,585.59 231.40,584.71 231.88,583.85 232.36,582.99 232.84,582.15 233.32,581.32 233.80,580.49 234.29,579.68 234.77,578.88 235.25,578.08 235.73,577.30 236.21,576.52 236.69,575.75 237.18,574.99 237.66,574.24 238.14,573.50 238.62,572.76 239.10,572.04 239.58,571.32 240.07,570.61 240.55,569.90 241.03,569.20 241.51,568.51 241.99,567.83 242.47,567.15 242.96,566.48 243.44,565.81 243.92,565.15 244.40,564.50 244.88,563.85 245.36,563.21 245.85,562.58 246.33,561.95 246.81,561.32 247.29,560.71 247.77,560.09 248.25,559.48 248.74,558.88 249.22,558.28 249.70,557.69 250.18,557.10 250.66,556.52 251.14,555.94 251.62,555.37 252.11,554.80 252.59,554.24 253.07,553.68 253.55,553.12 254.03,552.57 254.51,552.02 255.00,551.48 255.48,550.94 255.96,550.41 256.44,549.88 256.92,549.35 257.40,548.83 257.89,548.31 258.37,547.79 258.85,547.28 259.33,546.78 259.81,546.27 260.29,545.77 260.78,545.28 261.26,544.79 261.74,544.30 262.22,543.81 262.70,543.33 263.18,542.85 263.67,542.38 264.15,541.91 264.63,541.44 265.11,540.97 265.59,540.51 266.07,540.05 266.56,539.60 267.04,539.15 267.52,538.70 268.00,538.25 268.48,537.81 268.96,537.37 269.45,536.94 269.93,536.50 270.41,536.07 270.89,535.64 271.37,535.22 271.85,534.80 272.34,534.38 272.82,533.96 273.30,533.55 273.78,533.14 274.26,532.74 274.74,532.33 275.23,531.93 275.71,531.53 276.19,531.14 276.67,530.74 277.15,530.35 277.63,529.96 278.11,529.58 278.60,529.20 279.08,528.82 279.56,528.44 280.04,528.07 280.52,527.69 281.00,527.33 281.49,526.96 281.97,526.59 282.45,526.23 282.93,525.87 283.41,525.52 283.89,525.16 284.38,524.81 284.86,524.46 285.34,524.12 285.82,523.77 286.30,523.43 286.78,523.09 287.27,522.76 287.75,522.42 288.23,522.09 288.71,521.76 289.19,521.43 289.67,521.11 290.16,520.79 290.64,520.47 291.12,520.15 291.60,519.83 292.08,519.52 292.56,519.21 293.05,518.90 293.53,518.60 294.01,518.29 294.49,517.99 294.97,517.69 295.45,517.40 295.94,517.10 296.42,516.81 296.90,516.52 297.38,516.23 297.86,515.95 298.34,515.67 298.83,515.38 299.31,515.11 299.79,514.83 300.27,514.56 300.75,514.28 301.23,514.01 301.72,513.75 302.20,513.48 302.68,513.22 303.16,512.96 303.64,512.70 304.12,512.44 304.61,512.19 305.09,511.93 305.57,511.68 306.05,511.44 306.53,511.19 307.01,510.95 307.49,510.70 307.98,510.46 308.46,510.23 308.94,509.99 309.42,509.76 309.90,509.53 310.38,509.30 310.87,509.07 311.35,508.85 311.83,508.62 312.31,508.40 312.79,508.19 313.27,507.97 313.76,507.75 314.24,507.54 314.72,507.33 315.20,507.12 315.68,506.92 316.16,506.71 316.65,506.51 317.13,506.31 317.61,506.11 318.09,505.92 318.57,505.72 319.05,505.53 319.54,505.34 320.02,505.15 320.50,504.97 320.98,504.78 321.46,504.60 321.94,504.42 322.43,504.24 322.91,504.07 323.39,503.90 323.87,503.72 324.35,503.55 324.83,503.39 325.32,503.22 325.80,503.06 326.28,502.89 326.76,502.73 327.24,502.58 327.72,502.42 328.21,502.27 328.69,502.11 329.17,501.96 329.65,501.81 330.13,501.67 330.61,501.52 331.10,501.38 331.58,501.24 332.06,501.10 332.54,500.97 333.02,500.83 333.50,500.70 333.98,500.57 334.47,500.44 334.95,500.31 335.43,500.19 335.91,500.06 336.39,499.94 336.87,499.82 337.36,499.70 337.84,499.59 338.32,499.47 338.80,499.36 339.28,499.25 339.76,499.14 340.25,499.04 340.73,498.93 341.21,498.83 341.69,498.73 342.17,498.63 342.65,498.53 343.14,498.44 343.62,498.35 344.10,498.25 344.58,498.16 345.06,498.08 345.54,497.99 346.03,497.91 346.51,497.82 346.99,497.74 347.47,497.66 347.95,497.59 348.43,497.51 348.92,497.44 349.40,497.37 349.88,497.30 350.36,497.23 350.84,497.16 351.32,497.10 351.81,497.04 352.29,496.98 352.77,496.92 353.25,496.86 353.73,496.80 354.21,496.75 354.70,496.70 355.18,496.65 355.66,496.60 356.14,496.55 356.62,496.51 357.10,496.47 357.59,496.42 358.07,496.38 358.55,496.35 359.03,496.31 359.51,496.27 359.99,496.24 360.48,496.21 360.96,496.18 361.44,496.15 361.92,496.13 362.40,496.10 362.88,496.08 363.36,496.06 363.85,496.04 364.33,496.02 364.81,496.01 365.29,495.99 365.77,495.98 366.25,495.97 366.74,495.96 367.22,495.95 367.70,495.95 368.18,495.94 368.66,495.94 369.14,495.94 369.63,495.94 370.11,495.94 370.59,495.94 371.07,495.95 371.55,495.96 372.03,495.96 372.52,495.97 373.00,495.99 373.48,496.00 373.96,496.01 374.44,496.03 374.92,496.05 375.41,496.07 375.89,496.09 376.37,496.11 376.85,496.14 377.33,496.16 377.81,496.19 378.30,496.22 378.78,496.25 379.26,496.28 379.74,496.31 380.22,496.35 380.70,496.39 381.19,496.42 381.67,496.46 382.15,496.51 382.63,496.55 383.11,496.59 383.59,496.64 384.08,496.68 384.56,496.73 385.04,496.78 385.52,496.83 386.00,496.89 386.48,496.94 386.97,497.00 387.45,497.05 387.93,497.11 388.41,497.17 388.89,497.23 389.37,497.30 389.85,497.36 390.34,497.43 390.82,497.49 391.30,497.56 391.78,497.63 392.26,497.70 392.74,497.78 393.23,497.85 393.71,497.93 394.19,498.00 394.67,498.08 395.15,498.16 395.63,498.24 396.12,498.32 396.60,498.41 397.08,498.49 397.56,498.58 398.04,498.66 398.52,498.75 399.01,498.84 399.49,498.93 399.97,499.03 400.45,499.12 400.93,499.22 401.41,499.31 401.90,499.41 402.38,499.51 402.86,499.61 403.34,499.71 403.82,499.81 404.30,499.92 404.79,500.02 405.27,500.13 405.75,500.24 406.23,500.34 406.71,500.45 407.19,500.57 407.68,500.68 408.16,500.79 408.64,500.91 409.12,501.02 409.60,501.14 410.08,501.26 410.57,501.38 411.05,501.50 411.53,501.62 412.01,501.74 412.49,501.86 412.97,501.99 413.46,502.12 413.94,502.24 414.42,502.37 414.90,502.50 415.38,502.63 415.86,502.76 416.35,502.89 416.83,503.03 417.31,503.16 417.79,503.30 418.27,503.43 418.75,503.57 419.23,503.71 419.72,503.85 420.20,503.99 420.68,504.13 421.16,504.28 421.64,504.42 422.12,504.56 422.61,504.71 423.09,504.86 423.57,505.00 424.05,505.15 424.53,505.30 425.01,505.45 425.50,505.60 425.98,505.76 426.46,505.91 426.94,506.06 427.42,506.22 427.90,506.38 428.39,506.53 428.87,506.69 429.35,506.85 429.83,507.01 430.31,507.17 430.79,507.33 431.28,507.49 431.76,507.65 432.24,507.82 432.72,507.98 433.20,508.15 433.68,508.31 434.17,508.48 434.65,508.65 435.13,508.82 435.61,508.99 436.09,509.16 436.57,509.33 437.06,509.50 437.54,509.67 438.02,509.84 438.50,510.02 438.98,510.19 439.46,510.37 439.95,510.54 440.43,510.72 440.91,510.90 441.39,511.07 441.87,511.25 442.35,511.43 442.84,511.61 443.32,511.79 443.80,511.97 444.28,512.16 444.76,512.34 445.24,512.52 445.72,512.71 446.21,512.89 446.69,513.08 447.17,513.26 447.65,513.45 448.13,513.63 448.61,513.82 449.10,514.01 449.58,514.20 450.06,514.39 450.54,514.58 451.02,514.77 451.50,514.96 451.99,515.15 452.47,515.34 452.95,515.53 453.43,515.73 453.91,515.92 454.39,516.11 454.88,516.31 455.36,516.50 455.84,516.70 456.32,516.89 456.80,517.09 457.28,517.28 457.77,517.48 458.25,517.68 458.73,517.88 459.21,518.07 459.69,518.27 460.17,518.47 460.66,518.67 461.14,518.87 461.62,519.07 462.10,519.27 462.58,519.47 463.06,519.67 463.55,519.87 464.03,520.07 464.51,520.28 464.99,520.48 465.47,520.68 465.95,520.88 466.44,521.09 466.92,521.29 467.40,521.49 467.88,521.70 468.36,521.90 468.84,522.11 469.33,522.31 469.81,522.52 470.29,522.72 470.77,522.93 471.25,523.13 471.73,523.34 472.22,523.54 472.70,523.75 473.18,523.96 473.66,524.16 474.14,524.37 474.62,524.57 475.10,524.78 475.59,524.99 476.07,525.20 476.55,525.40 477.03,525.61 477.51,525.82 477.99,526.03 478.48,526.23 478.96,526.44 479.44,526.65 479.92,526.86 480.40,527.06 480.88,527.27 481.37,527.48 481.85,527.69 482.33,527.90 482.81,528.11 483.29,528.31 483.77,528.52 484.26,528.73 484.74,528.94 485.22,529.15 485.70,529.35 486.18,529.56 486.66,529.77 487.15,529.98 487.63,530.19 488.11,530.40 488.59,530.60 489.07,530.81 489.55,531.02 490.04,531.23 490.52,531.43 491.00,531.64 491.48,531.85 491.96,532.06 492.44,532.26 492.93,532.47 493.41,532.68 493.89,532.88 494.37,533.09 494.85,533.30 495.33,533.50 495.82,533.71 496.30,533.91 496.78,534.12 497.26,534.32 497.74,534.53 498.22,534.74 498.71,534.94 499.19,535.14 499.67,535.35 500.15,535.55 500.63,535.76 501.11,535.96 501.59,536.16 502.08,536.37 502.56,536.57 503.04,536.77 503.52,536.97 504.00,537.18 504.48,537.38 504.97,537.58 505.45,537.78 505.93,537.98 506.41,538.18 506.89,538.38 507.37,538.58 507.86,538.78 508.34,538.98 508.82,539.18 509.30,539.38 509.78,539.57 510.26,539.77 510.75,539.97 511.23,540.16 511.71,540.36 512.19,540.56 512.67,540.75 513.15,540.95 513.64,541.14 514.12,541.34 514.60,541.53 515.08,541.72 515.56,541.92 516.04,542.11 516.53,542.30 517.01,542.49 517.49,542.68 517.97,542.87 518.45,543.06 518.93,543.25 519.42,543.44 519.90,543.63 520.38,543.82 520.86,544.00 521.34,544.19 521.82,544.38 522.31,544.56 522.79,544.75 523.27,544.93 523.75,545.12 524.23,545.30 524.71,545.48 525.20,545.67 525.68,545.85 526.16,546.03 526.64,546.21 527.12,546.39 527.60,546.57 528.09,546.75 528.57,546.93 529.05,547.10 529.53,547.28 530.01,547.46 530.49,547.63 530.97,547.81 531.46,547.98 531.94,548.16 532.42,548.33 532.90,548.50 533.38,548.67 533.86,548.84 534.35,549.01 534.83,549.18 535.31,549.35 535.79,549.52 536.27,549.69 536.75,549.86 537.24,550.02 537.72,550.19 538.20,550.35 538.68,550.52 539.16,550.68 539.64,550.84 540.13,551.00 540.61,551.16 541.09,551.32 541.57,551.48 542.05,551.64 542.53,551.80 543.02,551.96 543.50,552.11 543.98,552.27 544.46,552.42 544.94,552.58 545.42,552.73 545.91,552.88 546.39,553.03 546.87,553.19 547.35,553.34 547.83,553.48 548.31,553.63 548.80,553.78 549.28,553.93 549.76,554.07 550.24,554.22 550.72,554.36 551.20,554.50 551.69,554.65 552.17,554.79 552.65,554.93 553.13,555.07 553.61,555.21 554.09,555.35 554.58,555.48 555.06,555.62 555.54,555.76 556.02,555.89 556.50,556.02 556.98,556.16 557.46,556.29 557.95,556.42 558.43,556.55 558.91,556.68 559.39,556.81 559.87,556.93 560.35,557.06 560.84,557.18 561.32,557.31 561.80,557.43 562.28,557.56 562.76,557.68 563.24,557.80 563.73,557.92 564.21,558.04 564.69,558.15 565.17,558.27 565.65,558.39 566.13,558.50 566.62,558.62 567.10,558.73 567.58,558.84 568.06,558.95 568.54,559.06 569.02,559.17 569.51,559.28 569.99,559.39 570.47,559.49 570.95,559.60 571.43,559.70 571.91,559.81 572.40,559.91 572.88,560.01 573.36,560.11 573.84,560.21 574.32,560.31 574.80,560.40 575.29,560.50 575.77,560.60 576.25,560.69 576.73,560.78 577.21,560.87 577.69,560.97 578.18,561.06 578.66,561.14 579.14,561.23 579.62,561.32 580.10,561.41 580.58,561.49 581.07,561.57 581.55,561.66 582.03,561.74 582.51,561.82 582.99,561.90 583.47,561.98 583.96,562.06 584.44,562.13 584.92,562.21 585.40,562.28"/><polyline clip-path="url(#cl)" fill="none" stroke="#1e8cff" stroke-width="1.35" stroke-dasharray="3 1.4" points="200.57,2000.00 201.05,2000.00 201.53,2000.00 202.02,2000.00 202.50,1997.05 202.98,1776.95 203.46,1614.86 203.94,1490.55 204.42,1392.19 204.91,1312.45 205.39,1246.51 205.87,1191.07 206.35,1143.83 206.83,1103.09 207.31,1067.60 207.80,1036.42 208.28,1008.80 208.76,984.18 209.24,962.09 209.72,942.16 210.20,924.09 210.69,907.64 211.17,892.59 211.65,878.78 212.13,866.06 212.61,854.31 213.09,843.42 213.58,833.30 214.06,823.88 214.54,815.07 215.02,806.83 215.50,799.11 215.98,791.84 216.47,785.01 216.95,778.56 217.43,772.47 217.91,766.71 218.39,761.25 218.87,756.07 219.36,751.15 219.84,746.47 220.32,742.01 220.80,737.75 221.28,733.69 221.76,729.81 222.24,726.10 222.73,722.55 223.21,719.14 223.69,715.87 224.17,712.73 224.65,709.72 225.13,706.82 225.62,704.03 226.10,701.34 226.58,698.75 227.06,696.24 227.54,693.83 228.02,691.50 228.51,689.25 228.99,687.07 229.47,684.96 229.95,682.91 230.43,680.93 230.91,679.02 231.40,677.15 231.88,675.35 232.36,673.60 232.84,671.89 233.32,670.24 233.80,668.63 234.29,667.06 234.77,665.53 235.25,664.05 235.73,662.60 236.21,661.19 236.69,659.82 237.18,658.48 237.66,657.17 238.14,655.89 238.62,654.65 239.10,653.43 239.58,652.24 240.07,651.07 240.55,649.93 241.03,648.82 241.51,647.73 241.99,646.66 242.47,645.62 242.96,644.59 243.44,643.59 243.92,642.61 244.40,641.64 244.88,640.70 245.36,639.77 245.85,638.85 246.33,637.96 246.81,637.08 247.29,636.22 247.77,635.37 248.25,634.54 248.74,633.72 249.22,632.91 249.70,632.12 250.18,631.33 250.66,630.57 251.14,629.81 251.62,629.07 252.11,628.33 252.59,627.61 253.07,626.90 253.55,626.20 254.03,625.50 254.51,624.82 255.00,624.15 255.48,623.48 255.96,622.83 256.44,622.18 256.92,621.54 257.40,620.91 257.89,620.29 258.37,619.68 258.85,619.07 259.33,618.47 259.81,617.87 260.29,617.29 260.78,616.71 261.26,616.13 261.74,615.57 262.22,615.00 262.70,614.45 263.18,613.90 263.67,613.35 264.15,612.82 264.63,612.28 265.11,611.75 265.59,611.23 266.07,610.71 266.56,610.20 267.04,609.69 267.52,609.19 268.00,608.69 268.48,608.19 268.96,607.70 269.45,607.21 269.93,606.73 270.41,606.25 270.89,605.77 271.37,605.30 271.85,604.83 272.34,604.37 272.82,603.90 273.30,603.44 273.78,602.99 274.26,602.54 274.74,602.09 275.23,601.64 275.71,601.20 276.19,600.76 276.67,600.32 277.15,599.89 277.63,599.46 278.11,599.03 278.60,598.60 279.08,598.18 279.56,597.76 280.04,597.34 280.52,596.92 281.00,596.50 281.49,596.09 281.97,595.68 282.45,595.27 282.93,594.87 283.41,594.46 283.89,594.06 284.38,593.66 284.86,593.26 285.34,592.87 285.82,592.47 286.30,592.08 286.78,591.69 287.27,591.30 287.75,590.91 288.23,590.53 288.71,590.14 289.19,589.76 289.67,589.38 290.16,589.00 290.64,588.62 291.12,588.24 291.60,587.87 292.08,587.49 292.56,587.12 293.05,586.75 293.53,586.38 294.01,586.01 294.49,585.64 294.97,585.28 295.45,584.91 295.94,584.55 296.42,584.19 296.90,583.82 297.38,583.46 297.86,583.10 298.34,582.75 298.83,582.39 299.31,582.03 299.79,581.68 300.27,581.32 300.75,580.97 301.23,580.62 301.72,580.27 302.20,579.92 302.68,579.57 303.16,579.22 303.64,578.87 304.12,578.53 304.61,578.18 305.09,577.84 305.57,577.49 306.05,577.15 306.53,576.81 307.01,576.47 307.49,576.12 307.98,575.78 308.46,575.45 308.94,575.11 309.42,574.77 309.90,574.43 310.38,574.10 310.87,573.76 311.35,573.43 311.83,573.09 312.31,572.76 312.79,572.43 313.27,572.10 313.76,571.76 314.24,571.43 314.72,571.10 315.20,570.78 315.68,570.45 316.16,570.12 316.65,569.79 317.13,569.47 317.61,569.14 318.09,568.81 318.57,568.49 319.05,568.17 319.54,567.84 320.02,567.52 320.50,567.20 320.98,566.88 321.46,566.55 321.94,566.23 322.43,565.91 322.91,565.59 323.39,565.28 323.87,564.96 324.35,564.64 324.83,564.32 325.32,564.01 325.80,563.69 326.28,563.38 326.76,563.06 327.24,562.75 327.72,562.43 328.21,562.12 328.69,561.81 329.17,561.50 329.65,561.19 330.13,560.88 330.61,560.56 331.10,560.26 331.58,559.95 332.06,559.64 332.54,559.33 333.02,559.02 333.50,558.72 333.98,558.41 334.47,558.10 334.95,557.80 335.43,557.49 335.91,557.19 336.39,556.89 336.87,556.58 337.36,556.28 337.84,555.98 338.32,555.68 338.80,555.38 339.28,555.08 339.76,554.78 340.25,554.48 340.73,554.18 341.21,553.88 341.69,553.59 342.17,553.29 342.65,552.99 343.14,552.70 343.62,552.40 344.10,552.11 344.58,551.81 345.06,551.52 345.54,551.23 346.03,550.94 346.51,550.64 346.99,550.35 347.47,550.06 347.95,549.77 348.43,549.48 348.92,549.20 349.40,548.91 349.88,548.62 350.36,548.33 350.84,548.05 351.32,547.76 351.81,547.48 352.29,547.19 352.77,546.91 353.25,546.63 353.73,546.34 354.21,546.06 354.70,545.78 355.18,545.50 355.66,545.22 356.14,544.94 356.62,544.66 357.10,544.38 357.59,544.11 358.07,543.83 358.55,543.55 359.03,543.28 359.51,543.00 359.99,542.73 360.48,542.46 360.96,542.18 361.44,541.91 361.92,541.64 362.40,541.37 362.88,541.10 363.36,540.83 363.85,540.56 364.33,540.29 364.81,540.03 365.29,539.76 365.77,539.49 366.25,539.23 366.74,538.96 367.22,538.70 367.70,538.44 368.18,538.18 368.66,537.91 369.14,537.65 369.63,537.39 370.11,537.13 370.59,536.88 371.07,536.62 371.55,536.36 372.03,536.10 372.52,535.85 373.00,535.59 373.48,535.34 373.96,535.09 374.44,534.84 374.92,534.58 375.41,534.33 375.89,534.08 376.37,533.83 376.85,533.59 377.33,533.34 377.81,533.09 378.30,532.84 378.78,532.60 379.26,532.36 379.74,532.11 380.22,531.87 380.70,531.63 381.19,531.39 381.67,531.15 382.15,530.91 382.63,530.67 383.11,530.43 383.59,530.19 384.08,529.96 384.56,529.72 385.04,529.49 385.52,529.25 386.00,529.02 386.48,528.79 386.97,528.56 387.45,528.33 387.93,528.10 388.41,527.87 388.89,527.65 389.37,527.42 389.85,527.19 390.34,526.97 390.82,526.75 391.30,526.52 391.78,526.30 392.26,526.08 392.74,525.86 393.23,525.64 393.71,525.42 394.19,525.21 394.67,524.99 395.15,524.78 395.63,524.56 396.12,524.35 396.60,524.14 397.08,523.92 397.56,523.71 398.04,523.50 398.52,523.30 399.01,523.09 399.49,522.88 399.97,522.68 400.45,522.47 400.93,522.27 401.41,522.07 401.90,521.86 402.38,521.66 402.86,521.46 403.34,521.27 403.82,521.07 404.30,520.87 404.79,520.68 405.27,520.48 405.75,520.29 406.23,520.10 406.71,519.91 407.19,519.71 407.68,519.53 408.16,519.34 408.64,519.15 409.12,518.96 409.60,518.78 410.08,518.60 410.57,518.41 411.05,518.23 411.53,518.05 412.01,517.87 412.49,517.69 412.97,517.51 413.46,517.34 413.94,517.16 414.42,516.99 414.90,516.81 415.38,516.64 415.86,516.47 416.35,516.30 416.83,516.13 417.31,515.96 417.79,515.80 418.27,515.63 418.75,515.47 419.23,515.30 419.72,515.14 420.20,514.98 420.68,514.82 421.16,514.66 421.64,514.51 422.12,514.35 422.61,514.19 423.09,514.04 423.57,513.89 424.05,513.73 424.53,513.58 425.01,513.43 425.50,513.29 425.98,513.14 426.46,512.99 426.94,512.85 427.42,512.70 427.90,512.56 428.39,512.42 428.87,512.28 429.35,512.14 429.83,512.00 430.31,511.86 430.79,511.73 431.28,511.59 431.76,511.46 432.24,511.33 432.72,511.20 433.20,511.07 433.68,510.94 434.17,510.81 434.65,510.69 435.13,510.56 435.61,510.44 436.09,510.31 436.57,510.19 437.06,510.07 437.54,509.95 438.02,509.84 438.50,509.72 438.98,509.60 439.46,509.49 439.95,509.38 440.43,509.26 440.91,509.15 441.39,509.04 441.87,508.94 442.35,508.83 442.84,508.72 443.32,508.62 443.80,508.52 444.28,508.41 444.76,508.31 445.24,508.21 445.72,508.12 446.21,508.02 446.69,507.92 447.17,507.83 447.65,507.73 448.13,507.64 448.61,507.55 449.10,507.46 449.58,507.37 450.06,507.29 450.54,507.20 451.02,507.12 451.50,507.03 451.99,506.95 452.47,506.87 452.95,506.79 453.43,506.71 453.91,506.63 454.39,506.56 454.88,506.48 455.36,506.41 455.84,506.34 456.32,506.26 456.80,506.19 457.28,506.13 457.77,506.06 458.25,505.99 458.73,505.93 459.21,505.86 459.69,505.80 460.17,505.74 460.66,505.68 461.14,505.62 461.62,505.56 462.10,505.51 462.58,505.45 463.06,505.40 463.55,505.35 464.03,505.30 464.51,505.25 464.99,505.20 465.47,505.15 465.95,505.10 466.44,505.06 466.92,505.01 467.40,504.97 467.88,504.93 468.36,504.89 468.84,504.85 469.33,504.81 469.81,504.78 470.29,504.74 470.77,504.71 471.25,504.68 471.73,504.65 472.22,504.62 472.70,504.59 473.18,504.56 473.66,504.53 474.14,504.51 474.62,504.48 475.10,504.46 475.59,504.44 476.07,504.42 476.55,504.40 477.03,504.38 477.51,504.37 477.99,504.35 478.48,504.34 478.96,504.32 479.44,504.31 479.92,504.30 480.40,504.29 480.88,504.28 481.37,504.28 481.85,504.27 482.33,504.27 482.81,504.26 483.29,504.26 483.77,504.26 484.26,504.26 484.74,504.26 485.22,504.27 485.70,504.27 486.18,504.28 486.66,504.28 487.15,504.29 487.63,504.30 488.11,504.31 488.59,504.32 489.07,504.33 489.55,504.35 490.04,504.36 490.52,504.38 491.00,504.39 491.48,504.41 491.96,504.43 492.44,504.45 492.93,504.47 493.41,504.50 493.89,504.52 494.37,504.55 494.85,504.57 495.33,504.60 495.82,504.63 496.30,504.66 496.78,504.69 497.26,504.72 497.74,504.76 498.22,504.79 498.71,504.83 499.19,504.86 499.67,504.90 500.15,504.94 500.63,504.98 501.11,505.02 501.59,505.06 502.08,505.11 502.56,505.15 503.04,505.20 503.52,505.24 504.00,505.29 504.48,505.34 504.97,505.39 505.45,505.44 505.93,505.49 506.41,505.55 506.89,505.60 507.37,505.66 507.86,505.72 508.34,505.77 508.82,505.83 509.30,505.89 509.78,505.95 510.26,506.01 510.75,506.08 511.23,506.14 511.71,506.21 512.19,506.27 512.67,506.34 513.15,506.41 513.64,506.48 514.12,506.55 514.60,506.62 515.08,506.69 515.56,506.77 516.04,506.84 516.53,506.92 517.01,506.99 517.49,507.07 517.97,507.15 518.45,507.23 518.93,507.31 519.42,507.39 519.90,507.47 520.38,507.56 520.86,507.64 521.34,507.73 521.82,507.81 522.31,507.90 522.79,507.99 523.27,508.08 523.75,508.17 524.23,508.26 524.71,508.35 525.20,508.44 525.68,508.54 526.16,508.63 526.64,508.73 527.12,508.83 527.60,508.92 528.09,509.02 528.57,509.12 529.05,509.22 529.53,509.32 530.01,509.43 530.49,509.53 530.97,509.63 531.46,509.74 531.94,509.84 532.42,509.95 532.90,510.06 533.38,510.17 533.86,510.27 534.35,510.38 534.83,510.50 535.31,510.61 535.79,510.72 536.27,510.83 536.75,510.95 537.24,511.06 537.72,511.18 538.20,511.30 538.68,511.41 539.16,511.53 539.64,511.65 540.13,511.77 540.61,511.89 541.09,512.01 541.57,512.13 542.05,512.26 542.53,512.38 543.02,512.51 543.50,512.63 543.98,512.76 544.46,512.88 544.94,513.01 545.42,513.14 545.91,513.27 546.39,513.40 546.87,513.53 547.35,513.66 547.83,513.79 548.31,513.92 548.80,514.06 549.28,514.19 549.76,514.33 550.24,514.46 550.72,514.60 551.20,514.73 551.69,514.87 552.17,515.01 552.65,515.15 553.13,515.29 553.61,515.43 554.09,515.57 554.58,515.71 555.06,515.85 555.54,515.99 556.02,516.13 556.50,516.28 556.98,516.42 557.46,516.57 557.95,516.71 558.43,516.86 558.91,517.00 559.39,517.15 559.87,517.30 560.35,517.45 560.84,517.60 561.32,517.75 561.80,517.89 562.28,518.05 562.76,518.20 563.24,518.35 563.73,518.50 564.21,518.65 564.69,518.80 565.17,518.96 565.65,519.11 566.13,519.27 566.62,519.42 567.10,519.58 567.58,519.73 568.06,519.89 568.54,520.05 569.02,520.20 569.51,520.36 569.99,520.52 570.47,520.68 570.95,520.84 571.43,521.00 571.91,521.16 572.40,521.32 572.88,521.48 573.36,521.64 573.84,521.80 574.32,521.96 574.80,522.12 575.29,522.28 575.77,522.45 576.25,522.61 576.73,522.77 577.21,522.94 577.69,523.10 578.18,523.27 578.66,523.43 579.14,523.60 579.62,523.76 580.10,523.93 580.58,524.09 581.07,524.26 581.55,524.43 582.03,524.59 582.51,524.76 582.99,524.93 583.47,525.10 583.96,525.27 584.44,525.43 584.92,525.60 585.40,525.77"/><polyline clip-path="url(#cl)" fill="none" stroke="#1e8cff" stroke-width="1.35" stroke-dasharray="3 1.4" points="200.57,2000.00 201.05,2000.00 201.53,2000.00 202.02,2000.00 202.50,2000.00 202.98,2000.00 203.46,2000.00 203.94,2000.00 204.42,2000.00 204.91,2000.00 205.39,2000.00 205.87,2000.00 206.35,2000.00 206.83,2000.00 207.31,2000.00 207.80,2000.00 208.28,2000.00 208.76,2000.00 209.24,2000.00 209.72,2000.00 210.20,2000.00 210.69,2000.00 211.17,2000.00 211.65,2000.00 212.13,2000.00 212.61,2000.00 213.09,2000.00 213.58,2000.00 214.06,2000.00 214.54,2000.00 215.02,2000.00 215.50,2000.00 215.98,2000.00 216.47,2000.00 216.95,2000.00 217.43,2000.00 217.91,2000.00 218.39,2000.00 218.87,2000.00 219.36,2000.00 219.84,2000.00 220.32,2000.00 220.80,1937.79 221.28,1876.92 221.76,1820.01 222.24,1766.72 222.73,1716.77 223.21,1669.86 223.69,1625.77 224.17,1584.26 224.65,1545.15 225.13,1508.25 225.62,1473.40 226.10,1440.45 226.58,1409.26 227.06,1379.72 227.54,1351.70 228.02,1325.10 228.51,1299.84 228.99,1275.81 229.47,1252.95 229.95,1231.18 230.43,1210.43 230.91,1190.63 231.40,1171.74 231.88,1153.69 232.36,1136.44 232.84,1119.94 233.32,1104.15 233.80,1089.03 234.29,1074.53 234.77,1060.64 235.25,1047.30 235.73,1034.51 236.21,1022.21 236.69,1010.40 237.18,999.04 237.66,988.12 238.14,977.60 238.62,967.48 239.10,957.73 239.58,948.33 240.07,939.26 240.55,930.52 241.03,922.08 241.51,913.94 241.99,906.07 242.47,898.47 242.96,891.13 243.44,884.02 243.92,877.15 244.40,870.50 244.88,864.07 245.36,857.84 245.85,851.80 246.33,845.95 246.81,840.28 247.29,834.79 247.77,829.46 248.25,824.29 248.74,819.27 249.22,814.40 249.70,809.66 250.18,805.07 250.66,800.61 251.14,796.27 251.62,792.05 252.11,787.95 252.59,783.96 253.07,780.08 253.55,776.31 254.03,772.63 254.51,769.05 255.00,765.57 255.48,762.18 255.96,758.87 256.44,755.65 256.92,752.51 257.40,749.45 257.89,746.46 258.37,743.55 258.85,740.71 259.33,737.94 259.81,735.24 260.29,732.60 260.78,730.02 261.26,727.51 261.74,725.05 262.22,722.65 262.70,720.31 263.18,718.01 263.67,715.77 264.15,713.59 264.63,711.44 265.11,709.35 265.59,707.30 266.07,705.30 266.56,703.34 267.04,701.42 267.52,699.55 268.00,697.71 268.48,695.91 268.96,694.15 269.45,692.43 269.93,690.74 270.41,689.08 270.89,687.46 271.37,685.87 271.85,684.32 272.34,682.79 272.82,681.29 273.30,679.83 273.78,678.39 274.26,676.98 274.74,675.59 275.23,674.23 275.71,672.90 276.19,671.59 276.67,670.31 277.15,669.05 277.63,667.82 278.11,666.60 278.60,665.41 279.08,664.24 279.56,663.09 280.04,661.96 280.52,660.85 281.00,659.76 281.49,658.69 281.97,657.63 282.45,656.60 282.93,655.58 283.41,654.58 283.89,653.59 284.38,652.63 284.86,651.67 285.34,650.74 285.82,649.82 286.30,648.91 286.78,648.02 287.27,647.14 287.75,646.27 288.23,645.42 288.71,644.59 289.19,643.76 289.67,642.95 290.16,642.15 290.64,641.36 291.12,640.59 291.60,639.82 292.08,639.07 292.56,638.33 293.05,637.60 293.53,636.87 294.01,636.16 294.49,635.46 294.97,634.77 295.45,634.09 295.94,633.42 296.42,632.76 296.90,632.11 297.38,631.46 297.86,630.82 298.34,630.20 298.83,629.58 299.31,628.97 299.79,628.36 300.27,627.77 300.75,627.18 301.23,626.60 301.72,626.03 302.20,625.46 302.68,624.90 303.16,624.35 303.64,623.81 304.12,623.27 304.61,622.74 305.09,622.21 305.57,621.69 306.05,621.18 306.53,620.67 307.01,620.17 307.49,619.67 307.98,619.18 308.46,618.69 308.94,618.21 309.42,617.74 309.90,617.27 310.38,616.81 310.87,616.35 311.35,615.89 311.83,615.44 312.31,615.00 312.79,614.56 313.27,614.12 313.76,613.69 314.24,613.26 314.72,612.84 315.20,612.42 315.68,612.00 316.16,611.59 316.65,611.18 317.13,610.78 317.61,610.38 318.09,609.98 318.57,609.59 319.05,609.20 319.54,608.81 320.02,608.43 320.50,608.05 320.98,607.68 321.46,607.30 321.94,606.94 322.43,606.57 322.91,606.21 323.39,605.84 323.87,605.49 324.35,605.13 324.83,604.78 325.32,604.43 325.80,604.08 326.28,603.74 326.76,603.40 327.24,603.06 327.72,602.72 328.21,602.39 328.69,602.06 329.17,601.73 329.65,601.40 330.13,601.08 330.61,600.75 331.10,600.43 331.58,600.11 332.06,599.80 332.54,599.48 333.02,599.17 333.50,598.86 333.98,598.55 334.47,598.25 334.95,597.94 335.43,597.64 335.91,597.34 336.39,597.04 336.87,596.74 337.36,596.44 337.84,596.15 338.32,595.86 338.80,595.56 339.28,595.27 339.76,594.99 340.25,594.70 340.73,594.41 341.21,594.13 341.69,593.85 342.17,593.57 342.65,593.29 343.14,593.01 343.62,592.73 344.10,592.45 344.58,592.18 345.06,591.90 345.54,591.63 346.03,591.36 346.51,591.09 346.99,590.82 347.47,590.55 347.95,590.29 348.43,590.02 348.92,589.75 349.40,589.49 349.88,589.23 350.36,588.97 350.84,588.70 351.32,588.44 351.81,588.18 352.29,587.93 352.77,587.67 353.25,587.41 353.73,587.16 354.21,586.90 354.70,586.65 355.18,586.39 355.66,586.14 356.14,585.89 356.62,585.64 357.10,585.39 357.59,585.14 358.07,584.89 358.55,584.64 359.03,584.39 359.51,584.14 359.99,583.90 360.48,583.65 360.96,583.40 361.44,583.16 361.92,582.92 362.40,582.67 362.88,582.43 363.36,582.19 363.85,581.94 364.33,581.70 364.81,581.46 365.29,581.22 365.77,580.98 366.25,580.74 366.74,580.50 367.22,580.26 367.70,580.02 368.18,579.79 368.66,579.55 369.14,579.31 369.63,579.07 370.11,578.84 370.59,578.60 371.07,578.37 371.55,578.13 372.03,577.90 372.52,577.66 373.00,577.43 373.48,577.19 373.96,576.96 374.44,576.73 374.92,576.49 375.41,576.26 375.89,576.03 376.37,575.80 376.85,575.57 377.33,575.33 377.81,575.10 378.30,574.87 378.78,574.64 379.26,574.41 379.74,574.18 380.22,573.95 380.70,573.72 381.19,573.49 381.67,573.26 382.15,573.03 382.63,572.80 383.11,572.58 383.59,572.35 384.08,572.12 384.56,571.89 385.04,571.66 385.52,571.43 386.00,571.21 386.48,570.98 386.97,570.75 387.45,570.53 387.93,570.30 388.41,570.07 388.89,569.85 389.37,569.62 389.85,569.39 390.34,569.17 390.82,568.94 391.30,568.72 391.78,568.49 392.26,568.26 392.74,568.04 393.23,567.81 393.71,567.59 394.19,567.36 394.67,567.14 395.15,566.91 395.63,566.69 396.12,566.47 396.60,566.24 397.08,566.02 397.56,565.79 398.04,565.57 398.52,565.34 399.01,565.12 399.49,564.90 399.97,564.67 400.45,564.45 400.93,564.23 401.41,564.00 401.90,563.78 402.38,563.56 402.86,563.33 403.34,563.11 403.82,562.89 404.30,562.67 404.79,562.44 405.27,562.22 405.75,562.00 406.23,561.78 406.71,561.56 407.19,561.33 407.68,561.11 408.16,560.89 408.64,560.67 409.12,560.45 409.60,560.22 410.08,560.00 410.57,559.78 411.05,559.56 411.53,559.34 412.01,559.12 412.49,558.90 412.97,558.68 413.46,558.46 413.94,558.24 414.42,558.02 414.90,557.80 415.38,557.58 415.86,557.36 416.35,557.14 416.83,556.92 417.31,556.70 417.79,556.48 418.27,556.26 418.75,556.04 419.23,555.82 419.72,555.60 420.20,555.38 420.68,555.16 421.16,554.94 421.64,554.72 422.12,554.50 422.61,554.29 423.09,554.07 423.57,553.85 424.05,553.63 424.53,553.41 425.01,553.20 425.50,552.98 425.98,552.76 426.46,552.54 426.94,552.33 427.42,552.11 427.90,551.89 428.39,551.68 428.87,551.46 429.35,551.24 429.83,551.03 430.31,550.81 430.79,550.60 431.28,550.38 431.76,550.16 432.24,549.95 432.72,549.73 433.20,549.52 433.68,549.30 434.17,549.09 434.65,548.88 435.13,548.66 435.61,548.45 436.09,548.23 436.57,548.02 437.06,547.81 437.54,547.59 438.02,547.38 438.50,547.17 438.98,546.95 439.46,546.74 439.95,546.53 440.43,546.32 440.91,546.11 441.39,545.89 441.87,545.68 442.35,545.47 442.84,545.26 443.32,545.05 443.80,544.84 444.28,544.63 444.76,544.42 445.24,544.21 445.72,544.00 446.21,543.79 446.69,543.58 447.17,543.37 447.65,543.17 448.13,542.96 448.61,542.75 449.10,542.54 449.58,542.34 450.06,542.13 450.54,541.92 451.02,541.72 451.50,541.51 451.99,541.30 452.47,541.10 452.95,540.89 453.43,540.69 453.91,540.48 454.39,540.28 454.88,540.08 455.36,539.87 455.84,539.67 456.32,539.47 456.80,539.26 457.28,539.06 457.77,538.86 458.25,538.66 458.73,538.46 459.21,538.26 459.69,538.06 460.17,537.86 460.66,537.66 461.14,537.46 461.62,537.26 462.10,537.06 462.58,536.86 463.06,536.66 463.55,536.47 464.03,536.27 464.51,536.07 464.99,535.88 465.47,535.68 465.95,535.48 466.44,535.29 466.92,535.09 467.40,534.90 467.88,534.71 468.36,534.51 468.84,534.32 469.33,534.13 469.81,533.94 470.29,533.74 470.77,533.55 471.25,533.36 471.73,533.17 472.22,532.98 472.70,532.79 473.18,532.60 473.66,532.41 474.14,532.23 474.62,532.04 475.10,531.85 475.59,531.67 476.07,531.48 476.55,531.29 477.03,531.11 477.51,530.92 477.99,530.74 478.48,530.56 478.96,530.37 479.44,530.19 479.92,530.01 480.40,529.83 480.88,529.65 481.37,529.47 481.85,529.29 482.33,529.11 482.81,528.93 483.29,528.75 483.77,528.57 484.26,528.39 484.74,528.22 485.22,528.04 485.70,527.86 486.18,527.69 486.66,527.51 487.15,527.34 487.63,527.17 488.11,526.99 488.59,526.82 489.07,526.65 489.55,526.48 490.04,526.31 490.52,526.14 491.00,525.97 491.48,525.80 491.96,525.63 492.44,525.47 492.93,525.30 493.41,525.13 493.89,524.97 494.37,524.80 494.85,524.64 495.33,524.48 495.82,524.31 496.30,524.15 496.78,523.99 497.26,523.83 497.74,523.67 498.22,523.51 498.71,523.35 499.19,523.19 499.67,523.03 500.15,522.87 500.63,522.72 501.11,522.56 501.59,522.41 502.08,522.25 502.56,522.10 503.04,521.95 503.52,521.79 504.00,521.64 504.48,521.49 504.97,521.34 505.45,521.19 505.93,521.04 506.41,520.90 506.89,520.75 507.37,520.60 507.86,520.46 508.34,520.31 508.82,520.17 509.30,520.02 509.78,519.88 510.26,519.74 510.75,519.60 511.23,519.45 511.71,519.31 512.19,519.18 512.67,519.04 513.15,518.90 513.64,518.76 514.12,518.63 514.60,518.49 515.08,518.36 515.56,518.22 516.04,518.09 516.53,517.96 517.01,517.83 517.49,517.70 517.97,517.57 518.45,517.44 518.93,517.31 519.42,517.18 519.90,517.05 520.38,516.93 520.86,516.80 521.34,516.68 521.82,516.55 522.31,516.43 522.79,516.31 523.27,516.19 523.75,516.07 524.23,515.95 524.71,515.83 525.20,515.71 525.68,515.60 526.16,515.48 526.64,515.37 527.12,515.25 527.60,515.14 528.09,515.02 528.57,514.91 529.05,514.80 529.53,514.69 530.01,514.58 530.49,514.47 530.97,514.37 531.46,514.26 531.94,514.15 532.42,514.05 532.90,513.95 533.38,513.84 533.86,513.74 534.35,513.64 534.83,513.54 535.31,513.44 535.79,513.34 536.27,513.24 536.75,513.14 537.24,513.05 537.72,512.95 538.20,512.86 538.68,512.77 539.16,512.67 539.64,512.58 540.13,512.49 540.61,512.40 541.09,512.31 541.57,512.22 542.05,512.14 542.53,512.05 543.02,511.97 543.50,511.88 543.98,511.80 544.46,511.72 544.94,511.63 545.42,511.55 545.91,511.47 546.39,511.39 546.87,511.32 547.35,511.24 547.83,511.16 548.31,511.09 548.80,511.01 549.28,510.94 549.76,510.87 550.24,510.80 550.72,510.73 551.20,510.66 551.69,510.59 552.17,510.52 552.65,510.46 553.13,510.39 553.61,510.33 554.09,510.26 554.58,510.20 555.06,510.14 555.54,510.08 556.02,510.02 556.50,509.96 556.98,509.90 557.46,509.84 557.95,509.79 558.43,509.73 558.91,509.68 559.39,509.62 559.87,509.57 560.35,509.52 560.84,509.47 561.32,509.42 561.80,509.37 562.28,509.32 562.76,509.28 563.24,509.23 563.73,509.19 564.21,509.14 564.69,509.10 565.17,509.06 565.65,509.02 566.13,508.98 566.62,508.94 567.10,508.90 567.58,508.87 568.06,508.83 568.54,508.79 569.02,508.76 569.51,508.73 569.99,508.70 570.47,508.67 570.95,508.64 571.43,508.61 571.91,508.58 572.40,508.55 572.88,508.52 573.36,508.50 573.84,508.48 574.32,508.45 574.80,508.43 575.29,508.41 575.77,508.39 576.25,508.37 576.73,508.35 577.21,508.33 577.69,508.32 578.18,508.30 578.66,508.29 579.14,508.27 579.62,508.26 580.10,508.25 580.58,508.24 581.07,508.23 581.55,508.22 582.03,508.21 582.51,508.21 582.99,508.20 583.47,508.20 583.96,508.19 584.44,508.19 584.92,508.19 585.40,508.19"/><rect x="199.8" y="234.5" width="385.6" height="192.9" fill="none" stroke="#000" stroke-width="1.4"/><rect x="199.8" y="441.6" width="385.6" height="192.0" fill="none" stroke="#000" stroke-width="1.4"/><path d="M199.80 427.4v-5M199.80 234.5v5M199.80 633.6v-5M199.80 441.6v5M238.36 427.4v-2.5M238.36 234.5v2.5M238.36 633.6v-2.5M238.36 441.6v2.5M276.92 427.4v-5M276.92 234.5v5M276.92 633.6v-5M276.92 441.6v5M315.48 427.4v-2.5M315.48 234.5v2.5M315.48 633.6v-2.5M315.48 441.6v2.5M354.04 427.4v-5M354.04 234.5v5M354.04 633.6v-5M354.04 441.6v5M392.60 427.4v-2.5M392.60 234.5v2.5M392.60 633.6v-2.5M392.60 441.6v2.5M431.16 427.4v-5M431.16 234.5v5M431.16 633.6v-5M431.16 441.6v5M469.72 427.4v-2.5M469.72 234.5v2.5M469.72 633.6v-2.5M469.72 441.6v2.5M508.28 427.4v-5M508.28 234.5v5M508.28 633.6v-5M508.28 441.6v5M546.84 427.4v-2.5M546.84 234.5v2.5M546.84 633.6v-2.5M546.84 441.6v2.5M585.40 427.4v-5M585.40 234.5v5M585.40 633.6v-5M585.40 441.6v5M199.8 421.37h5M585.4 421.37h-5M199.8 391.23h5M585.4 391.23h-5M199.8 361.09h5M585.4 361.09h-5M199.8 330.95h5M585.4 330.95h-5M199.8 300.81h5M585.4 300.81h-5M199.8 270.67h5M585.4 270.67h-5M199.8 240.53h5M585.4 240.53h-5M199.8 633.60h5M585.4 633.60h-5M199.8 617.60h5M585.4 617.60h-5M199.8 601.60h5M585.4 601.60h-5M199.8 585.60h5M585.4 585.60h-5M199.8 569.60h5M585.4 569.60h-5M199.8 553.60h5M585.4 553.60h-5M199.8 537.60h5M585.4 537.60h-5M199.8 521.60h5M585.4 521.60h-5M199.8 505.60h5M585.4 505.60h-5M199.8 489.60h5M585.4 489.60h-5M199.8 473.60h5M585.4 473.60h-5M199.8 457.60h5M585.4 457.60h-5M199.8 441.60h5M585.4 441.60h-5" stroke="#000" stroke-width="1.2" fill="none"/><text x="158" y="217" font-size="19.45" text-anchor="start" font-family="Liberation Sans" font-weight="bold">Demo #4: MULTI GRAPH</text><text x="197.2" y="248.82812500000003" font-size="22.7" text-anchor="end" font-family="Liberation Sans" stroke="#000" stroke-width="0.45">+4</text><text x="197.2" y="309.109375" font-size="22.7" text-anchor="end" font-family="Liberation Sans" stroke="#000" stroke-width="0.45">+2</text><text x="197.2" y="369.390625" font-size="22.7" text-anchor="end" font-family="Liberation Sans" stroke="#000" stroke-width="0.45">±0</text><text x="197.2" y="429.671875" font-size="22.7" text-anchor="end" font-family="Liberation Sans" stroke="#000" stroke-width="0.45">-2</text><text x="197.2" y="465.90000000000003" font-size="22.7" text-anchor="end" font-family="Liberation Sans" stroke="#000" stroke-width="0.45">1</text><text x="197.2" y="545.9" font-size="22.7" text-anchor="end" font-family="Liberation Sans" stroke="#000" stroke-width="0.45">0</text><text x="197.2" y="625.9" font-size="22.7" text-anchor="end" font-family="Liberation Sans" stroke="#000" stroke-width="0.45">-1</text><text x="199.8" y="658.4" font-size="22.2" text-anchor="middle" font-family="Liberation Sans" stroke="#000" stroke-width="0.45">0</text><text x="276.92" y="658.4" font-size="22.2" text-anchor="middle" font-family="Liberation Sans" stroke="#000" stroke-width="0.45">1</text><text x="354.03999999999996" y="658.4" font-size="22.2" text-anchor="middle" font-family="Liberation Sans" stroke="#000" stroke-width="0.45">2</text><text x="431.15999999999997" y="658.4" font-size="22.2" text-anchor="middle" font-family="Liberation Sans" stroke="#000" stroke-width="0.45">3</text><text x="508.28" y="658.4" font-size="22.2" text-anchor="middle" font-family="Liberation Sans" stroke="#000" stroke-width="0.45">4</text><text x="585.4" y="658.4" font-size="22.2" text-anchor="middle" font-family="Liberation Sans" stroke="#000" stroke-width="0.45">5</text><text x="372" y="675.3" font-size="22.3" text-anchor="start" font-family="Liberation Sans" font-weight="bold" font-style="italic">X-Axis</text><text transform="translate(152.4,434.2) rotate(-90)" x="0" y="0" font-size="22.3" text-anchor="middle" font-family="Liberation Sans" font-weight="bold" font-style="italic">Y-Axis</text><text x="573.5" y="414.8" font-size="19.7" text-anchor="end" font-family="Liberation Serif" font-weight="bold" font-style="italic">Special function</text><text x="568.5" y="623" font-size="19.2" text-anchor="end" font-family="Liberation Serif" font-weight="bold" font-style="italic">Bessel function</text><text x="303.5" y="291.2" font-size="15.8" text-anchor="start" font-family="Liberation Sans" >Ei(x)</text><text x="255.5" y="385" font-size="15.8" text-anchor="start" font-family="Liberation Sans" >Ei(-x)</text><text x="466.5" y="290.8" font-size="15.8" text-anchor="start" font-family="Liberation Sans" >Γ(x)</text><text x="535.5" y="324.5" font-size="15.8" text-anchor="start" font-family="Liberation Sans" >erf(x)</text><text x="240.5" y="457.3" font-size="15" text-anchor="start" font-family="Liberation Sans" >J</text><text x="248.1" y="461.4" font-size="10.8" text-anchor="start" font-family="Liberation Sans" >0</text><text x="259.5" y="496.2" font-size="15" text-anchor="start" font-family="Liberation Sans" >J</text><text x="267.1" y="499.4" font-size="10.8" text-anchor="start" font-family="Liberation Sans" >1</text><text x="254.7" y="526.4" font-size="15" text-anchor="start" font-family="Liberation Sans" >J</text><text x="262.3" y="530.3" font-size="10.8" text-anchor="start" font-family="Liberation Sans" >2</text><text x="221.5" y="564.7" font-size="15" text-anchor="start" font-family="Liberation Sans" >Y</text><text x="231.3" y="568.4" font-size="10.8" text-anchor="start" font-family="Liberation Sans" >0</text><text x="298.5" y="564.7" font-size="15" text-anchor="start" font-family="Liberation Sans" >Y</text><text x="308.3" y="568.6" font-size="10.8" text-anchor="start" font-family="Liberation Sans" >1</text><text x="361.8" y="570.2" font-size="15" text-anchor="start" font-family="Liberation Sans" >Y</text><text x="371.6" y="575.1" font-size="10.8" text-anchor="start" font-family="Liberation Sans" >2</text></g></svg><div style="left:658px;top:64px;width:2px;height:677px;background:#1b1f20"></div><div style="left:660px;top:64px;width:706px;height:1px;background:#1b1f20"></div><div style="left:660px;top:65px;width:53px;height:303px;background:#282c2e"></div><div style="left:660px;top:65px;width:53px;height:9px;background:#25292b"></div><div style="left:660px;top:74px;width:53px;height:36px;background:#2e3335"></div><div style="left:713px;top:65px;width:1px;height:303px;background:#1e2223"></div><div style="left:714px;top:65px;width:652px;height:303px;background:#232729"></div><div style="left:711px;top:74px;width:3px;height:36px;background:#215d9c"></div><div style="left:660px;top:368px;width:706px;height:3px;background:#1b1f20"></div><div style="left:660px;top:371px;width:53px;height:229px;background:#282c2e"></div><div style="left:660px;top:371px;width:53px;height:9px;background:#25292b"></div><div style="left:660px;top:380px;width:53px;height:36px;background:#2e3335"></div><div style="left:713px;top:371px;width:1px;height:229px;background:#1e2223"></div><div style="left:714px;top:371px;width:652px;height:229px;background:#232729"></div><div style="left:711px;top:380px;width:3px;height:36px;background:#215d9c"></div><div style="left:713px;top:89px;width:653px;height:1px;background:#363b3d"></div><div style="left:742px;top:65px;width:1px;height:275px;background:#363b3d"></div><div style="left:771px;top:65px;width:1px;height:275px;background:#363b3d"></div><div style="left:867px;top:65px;width:1px;height:275px;background:#363b3d"></div><div style="left:904px;top:65px;width:1px;height:275px;background:#363b3d"></div><div style="left:941px;top:65px;width:1px;height:275px;background:#363b3d"></div><div style="left:972px;top:65px;width:1px;height:275px;background:#363b3d"></div><div style="left:1003px;top:65px;width:1px;height:275px;background:#363b3d"></div><div style="left:1053px;top:65px;width:1px;height:275px;background:#363b3d"></div><div style="left:1099px;top:65px;width:1px;height:275px;background:#363b3d"></div><div style="left:1160px;top:65px;width:1px;height:275px;background:#363b3d"></div><div style="left:1207px;top:65px;width:1px;height:275px;background:#363b3d"></div><div style="left:1257px;top:65px;width:1px;height:275px;background:#363b3d"></div><div style="left:1310px;top:65px;width:1px;height:275px;background:#363b3d"></div><div style="left:1355px;top:65px;width:1px;height:275px;background:#363b3d"></div><span class="t" style="left:749px;top:68px;font-weight:bold;font-size:16.5px;color:#8e9192">#</span><span class="t" style="left:778px;top:68px;font-weight:bold;font-size:16.5px;color:#8e9192;letter-spacing:0.84px">file/range</span><span class="t" style="left:874px;top:68px;font-weight:bold;font-size:16.5px;color:#8e9192">x</span><span class="t" style="left:911px;top:68px;font-weight:bold;font-size:16.5px;color:#8e9192">y</span><span class="t" style="left:948px;top:68px;font-weight:bold;font-size:16.5px;color:#8e9192;transform:scaleX(0.924);transform-origin:0 0">ax</span><span class="t" style="left:979px;top:68px;font-weight:bold;font-size:16.5px;color:#8e9192;transform:scaleX(0.924);transform-origin:0 0">ay</span><span class="t" style="left:1010px;top:68px;font-weight:bold;font-size:16.5px;color:#8e9192;letter-spacing:0.53px">type</span><span class="t" style="left:1060px;top:68px;font-weight:bold;font-size:16.5px;color:#8e9192;letter-spacing:0.20px">size</span><span class="t" style="left:1106px;top:68px;font-weight:bold;font-size:16.5px;color:#8e9192;letter-spacing:0.70px">width</span><span class="t" style="left:1167px;top:68px;font-weight:bold;font-size:16.5px;color:#8e9192;transform:scaleX(0.976);transform-origin:0 0">skip</span><span class="t" style="left:1214px;top:68px;font-weight:bold;font-size:16.5px;color:#8e9192;letter-spacing:0.60px">step</span><span class="t" style="left:1264px;top:68px;font-weight:bold;font-size:16.5px;color:#8e9192;letter-spacing:0.95px">final</span><span class="t" style="left:1317px;top:68px;font-weight:bold;font-size:16.5px;color:#8e9192;transform:scaleX(0.876);transform-origin:0 0">num</span><div style="left:720px;top:94px;width:15px;height:15px;background:#2d3234;border:1px solid #16191a;border-radius:3px;box-sizing:border-box"></div><svg style="left:720px;top:94px" width="15" height="15"><path d="M3.3 7.2L7.4 11.2L13.8 3.6" stroke="#fff" stroke-width="3.1" fill="none"/></svg><span class="t" style="right:600px;top:95px;font-size:15.3px;color:#eeeeec">0</span><span class="t" style="left:777px;top:95px;font-size:15.3px;color:#eeeeec">demo4.dat</span><span class="t" style="right:467px;top:95px;font-size:15.3px;color:#eeeeec">1</span><span class="t" style="right:430px;top:95px;font-size:15.3px;color:#eeeeec">2</span><span class="t" style="left:942px;top:95px;width:30px;text-align:center;font-size:15.3px;color:#eeeeec">0</span><span class="t" style="left:973px;top:95px;width:30px;text-align:center;font-size:15.3px;color:#eeeeec">1</span><span class="t" style="right:272px;top:95px;font-size:15.3px;color:#eeeeec">2.00</span><span class="t" style="right:211px;top:95px;font-size:15.3px;color:#eeeeec">0.40</span><span class="t" style="right:164px;top:95px;font-size:15.3px;color:#eeeeec">2</span><span class="t" style="right:114px;top:95px;font-size:15.3px;color:#eeeeec">1</span><span class="t" style="right:61px;top:95px;font-size:15.3px;color:#eeeeec">-1</span><span class="t" style="right:16px;top:95px;font-size:15.3px;color:#eeeeec">100</span><div style="left:720px;top:119px;width:15px;height:15px;background:#2d3234;border:1px solid #16191a;border-radius:3px;box-sizing:border-box"></div><svg style="left:720px;top:119px" width="15" height="15"><path d="M3.3 7.2L7.4 11.2L13.8 3.6" stroke="#fff" stroke-width="3.1" fill="none"/></svg><span class="t" style="right:600px;top:120px;font-size:15.3px;color:#eeeeec">1</span><span class="t" style="left:777px;top:120px;font-size:15.3px;color:#eeeeec">demo4.dat</span><span class="t" style="right:467px;top:120px;font-size:15.3px;color:#eeeeec">1</span><span class="t" style="right:430px;top:120px;font-size:15.3px;color:#eeeeec">2</span><span class="t" style="left:942px;top:120px;width:30px;text-align:center;font-size:15.3px;color:#eeeeec">0</span><span class="t" style="left:973px;top:120px;width:30px;text-align:center;font-size:15.3px;color:#eeeeec">1</span><span class="t" style="right:272px;top:120px;font-size:15.3px;color:#eeeeec">2.00</span><span class="t" style="right:211px;top:120px;font-size:15.3px;color:#eeeeec">0.40</span><span class="t" style="right:164px;top:120px;font-size:15.3px;color:#eeeeec">2</span><span class="t" style="right:114px;top:120px;font-size:15.3px;color:#eeeeec">1</span><span class="t" style="right:61px;top:120px;font-size:15.3px;color:#eeeeec">-1</span><span class="t" style="right:16px;top:120px;font-size:15.3px;color:#eeeeec">100</span><div style="left:720px;top:144px;width:15px;height:15px;background:#2d3234;border:1px solid #16191a;border-radius:3px;box-sizing:border-box"></div><svg style="left:720px;top:144px" width="15" height="15"><path d="M3.3 7.2L7.4 11.2L13.8 3.6" stroke="#fff" stroke-width="3.1" fill="none"/></svg><span class="t" style="right:600px;top:145px;font-size:15.3px;color:#eeeeec">2</span><span class="t" style="left:777px;top:145px;font-size:15.3px;color:#eeeeec">demo4.dat</span><span class="t" style="right:467px;top:145px;font-size:15.3px;color:#eeeeec">1</span><span class="t" style="right:430px;top:145px;font-size:15.3px;color:#eeeeec">2</span><span class="t" style="left:942px;top:145px;width:30px;text-align:center;font-size:15.3px;color:#eeeeec">0</span><span class="t" style="left:973px;top:145px;width:30px;text-align:center;font-size:15.3px;color:#eeeeec">1</span><span class="t" style="right:272px;top:145px;font-size:15.3px;color:#eeeeec">2.00</span><span class="t" style="right:211px;top:145px;font-size:15.3px;color:#eeeeec">0.40</span><span class="t" style="right:164px;top:145px;font-size:15.3px;color:#eeeeec">2</span><span class="t" style="right:114px;top:145px;font-size:15.3px;color:#eeeeec">1</span><span class="t" style="right:61px;top:145px;font-size:15.3px;color:#eeeeec">-1</span><span class="t" style="right:16px;top:145px;font-size:15.3px;color:#eeeeec">100</span><div style="left:720px;top:169px;width:15px;height:15px;background:#2d3234;border:1px solid #16191a;border-radius:3px;box-sizing:border-box"></div><svg style="left:720px;top:169px" width="15" height="15"><path d="M3.3 7.2L7.4 11.2L13.8 3.6" stroke="#fff" stroke-width="3.1" fill="none"/></svg><span class="t" style="right:600px;top:170px;font-size:15.3px;color:#eeeeec">3</span><span class="t" style="left:777px;top:170px;font-size:15.3px;color:#eeeeec">demo4.dat</span><span class="t" style="right:467px;top:170px;font-size:15.3px;color:#eeeeec">1</span><span class="t" style="right:430px;top:170px;font-size:15.3px;color:#eeeeec">2</span><span class="t" style="left:942px;top:170px;width:30px;text-align:center;font-size:15.3px;color:#eeeeec">0</span><span class="t" style="left:973px;top:170px;width:30px;text-align:center;font-size:15.3px;color:#eeeeec">1</span><span class="t" style="right:272px;top:170px;font-size:15.3px;color:#eeeeec">2.00</span><span class="t" style="right:211px;top:170px;font-size:15.3px;color:#eeeeec">0.40</span><span class="t" style="right:164px;top:170px;font-size:15.3px;color:#eeeeec">2</span><span class="t" style="right:114px;top:170px;font-size:15.3px;color:#eeeeec">1</span><span class="t" style="right:61px;top:170px;font-size:15.3px;color:#eeeeec">-1</span><span class="t" style="right:16px;top:170px;font-size:15.3px;color:#eeeeec">100</span><div style="left:720px;top:194px;width:15px;height:15px;background:#2d3234;border:1px solid #16191a;border-radius:3px;box-sizing:border-box"></div><svg style="left:720px;top:194px" width="15" height="15"><path d="M3.3 7.2L7.4 11.2L13.8 3.6" stroke="#fff" stroke-width="3.1" fill="none"/></svg><span class="t" style="right:600px;top:195px;font-size:15.3px;color:#eeeeec">4</span><span class="t" style="left:777px;top:195px;font-size:15.3px;color:#eeeeec">demo4.dat</span><span class="t" style="right:467px;top:195px;font-size:15.3px;color:#eeeeec">1</span><span class="t" style="right:430px;top:195px;font-size:15.3px;color:#eeeeec">2</span><span class="t" style="left:942px;top:195px;width:30px;text-align:center;font-size:15.3px;color:#eeeeec">4</span><span class="t" style="left:973px;top:195px;width:30px;text-align:center;font-size:15.3px;color:#eeeeec">5</span><span class="t" style="right:272px;top:195px;font-size:15.3px;color:#eeeeec">2.00</span><span class="t" style="right:211px;top:195px;font-size:15.3px;color:#eeeeec">0.40</span><span class="t" style="right:164px;top:195px;font-size:15.3px;color:#eeeeec">2</span><span class="t" style="right:114px;top:195px;font-size:15.3px;color:#eeeeec">1</span><span class="t" style="right:61px;top:195px;font-size:15.3px;color:#eeeeec">-1</span><span class="t" style="right:16px;top:195px;font-size:15.3px;color:#eeeeec">100</span><div style="left:720px;top:219px;width:15px;height:15px;background:#2d3234;border:1px solid #16191a;border-radius:3px;box-sizing:border-box"></div><svg style="left:720px;top:219px" width="15" height="15"><path d="M3.3 7.2L7.4 11.2L13.8 3.6" stroke="#fff" stroke-width="3.1" fill="none"/></svg><span class="t" style="right:600px;top:220px;font-size:15.3px;color:#eeeeec">5</span><span class="t" style="left:777px;top:220px;font-size:15.3px;color:#eeeeec">demo4.dat</span><span class="t" style="right:467px;top:220px;font-size:15.3px;color:#eeeeec">1</span><span class="t" style="right:430px;top:220px;font-size:15.3px;color:#eeeeec">2</span><span class="t" style="left:942px;top:220px;width:30px;text-align:center;font-size:15.3px;color:#eeeeec">4</span><span class="t" style="left:973px;top:220px;width:30px;text-align:center;font-size:15.3px;color:#eeeeec">5</span><span class="t" style="right:272px;top:220px;font-size:15.3px;color:#eeeeec">2.00</span><span class="t" style="right:211px;top:220px;font-size:15.3px;color:#eeeeec">0.40</span><span class="t" style="right:164px;top:220px;font-size:15.3px;color:#eeeeec">2</span><span class="t" style="right:114px;top:220px;font-size:15.3px;color:#eeeeec">1</span><span class="t" style="right:61px;top:220px;font-size:15.3px;color:#eeeeec">-1</span><span class="t" style="right:16px;top:220px;font-size:15.3px;color:#eeeeec">100</span><div style="left:720px;top:244px;width:15px;height:15px;background:#2d3234;border:1px solid #16191a;border-radius:3px;box-sizing:border-box"></div><svg style="left:720px;top:244px" width="15" height="15"><path d="M3.3 7.2L7.4 11.2L13.8 3.6" stroke="#fff" stroke-width="3.1" fill="none"/></svg><span class="t" style="right:600px;top:245px;font-size:15.3px;color:#eeeeec">6</span><span class="t" style="left:777px;top:245px;font-size:15.3px;color:#eeeeec">demo4.dat</span><span class="t" style="right:467px;top:245px;font-size:15.3px;color:#eeeeec">1</span><span class="t" style="right:430px;top:245px;font-size:15.3px;color:#eeeeec">2</span><span class="t" style="left:942px;top:245px;width:30px;text-align:center;font-size:15.3px;color:#eeeeec">4</span><span class="t" style="left:973px;top:245px;width:30px;text-align:center;font-size:15.3px;color:#eeeeec">5</span><span class="t" style="right:272px;top:245px;font-size:15.3px;color:#eeeeec">2.00</span><span class="t" style="right:211px;top:245px;font-size:15.3px;color:#eeeeec">0.40</span><span class="t" style="right:164px;top:245px;font-size:15.3px;color:#eeeeec">2</span><span class="t" style="right:114px;top:245px;font-size:15.3px;color:#eeeeec">1</span><span class="t" style="right:61px;top:245px;font-size:15.3px;color:#eeeeec">-1</span><span class="t" style="right:16px;top:245px;font-size:15.3px;color:#eeeeec">100</span><div style="left:720px;top:269px;width:15px;height:15px;background:#2d3234;border:1px solid #16191a;border-radius:3px;box-sizing:border-box"></div><svg style="left:720px;top:269px" width="15" height="15"><path d="M3.3 7.2L7.4 11.2L13.8 3.6" stroke="#fff" stroke-width="3.1" fill="none"/></svg><span class="t" style="right:600px;top:270px;font-size:15.3px;color:#eeeeec">7</span><span class="t" style="left:777px;top:270px;font-size:15.3px;color:#eeeeec">demo4.dat</span><span class="t" style="right:467px;top:270px;font-size:15.3px;color:#eeeeec">1</span><span class="t" style="right:430px;top:270px;font-size:15.3px;color:#eeeeec">2</span><span class="t" style="left:942px;top:270px;width:30px;text-align:center;font-size:15.3px;color:#eeeeec">4</span><span class="t" style="left:973px;top:270px;width:30px;text-align:center;font-size:15.3px;color:#eeeeec">5</span><span class="t" style="right:272px;top:270px;font-size:15.3px;color:#eeeeec">2.00</span><span class="t" style="right:211px;top:270px;font-size:15.3px;color:#eeeeec">0.40</span><span class="t" style="right:164px;top:270px;font-size:15.3px;color:#eeeeec">2</span><span class="t" style="right:114px;top:270px;font-size:15.3px;color:#eeeeec">1</span><span class="t" style="right:61px;top:270px;font-size:15.3px;color:#eeeeec">-1</span><span class="t" style="right:16px;top:270px;font-size:15.3px;color:#eeeeec">100</span><div style="left:720px;top:294px;width:15px;height:15px;background:#2d3234;border:1px solid #16191a;border-radius:3px;box-sizing:border-box"></div><svg style="left:720px;top:294px" width="15" height="15"><path d="M3.3 7.2L7.4 11.2L13.8 3.6" stroke="#fff" stroke-width="3.1" fill="none"/></svg><span class="t" style="right:600px;top:295px;font-size:15.3px;color:#eeeeec">8</span><span class="t" style="left:777px;top:295px;font-size:15.3px;color:#eeeeec">demo4.dat</span><span class="t" style="right:467px;top:295px;font-size:15.3px;color:#eeeeec">1</span><span class="t" style="right:430px;top:295px;font-size:15.3px;color:#eeeeec">2</span><span class="t" style="left:942px;top:295px;width:30px;text-align:center;font-size:15.3px;color:#eeeeec">4</span><span class="t" style="left:973px;top:295px;width:30px;text-align:center;font-size:15.3px;color:#eeeeec">5</span><span class="t" style="right:272px;top:295px;font-size:15.3px;color:#eeeeec">2.00</span><span class="t" style="right:211px;top:295px;font-size:15.3px;color:#eeeeec">0.40</span><span class="t" style="right:164px;top:295px;font-size:15.3px;color:#eeeeec">2</span><span class="t" style="right:114px;top:295px;font-size:15.3px;color:#eeeeec">1</span><span class="t" style="right:61px;top:295px;font-size:15.3px;color:#eeeeec">-1</span><span class="t" style="right:16px;top:295px;font-size:15.3px;color:#eeeeec">100</span><div style="left:720px;top:319px;width:15px;height:15px;background:#2d3234;border:1px solid #16191a;border-radius:3px;box-sizing:border-box"></div><svg style="left:720px;top:319px" width="15" height="15"><path d="M3.3 7.2L7.4 11.2L13.8 3.6" stroke="#fff" stroke-width="3.1" fill="none"/></svg><span class="t" style="right:600px;top:320px;font-size:15.3px;color:#eeeeec">9</span><span class="t" style="left:777px;top:320px;font-size:15.3px;color:#eeeeec">demo4.dat</span><span class="t" style="right:467px;top:320px;font-size:15.3px;color:#eeeeec">1</span><span class="t" style="right:430px;top:320px;font-size:15.3px;color:#eeeeec">2</span><span class="t" style="left:942px;top:320px;width:30px;text-align:center;font-size:15.3px;color:#eeeeec">4</span><span class="t" style="left:973px;top:320px;width:30px;text-align:center;font-size:15.3px;color:#eeeeec">5</span><span class="t" style="right:272px;top:320px;font-size:15.3px;color:#eeeeec">2.00</span><span class="t" style="right:211px;top:320px;font-size:15.3px;color:#eeeeec">0.40</span><span class="t" style="right:164px;top:320px;font-size:15.3px;color:#eeeeec">2</span><span class="t" style="right:114px;top:320px;font-size:15.3px;color:#eeeeec">1</span><span class="t" style="right:61px;top:320px;font-size:15.3px;color:#eeeeec">-1</span><span class="t" style="right:16px;top:320px;font-size:15.3px;color:#eeeeec">100</span><div style="left:1008px;top:92px;width:40px;height:20px;background:#fbfbfa"></div><div style="left:1009px;top:93px;width:38px;height:18px;background:#ededeb"></div><div style="left:1009px;top:101px;width:38px;height:2px;background:#f06a6a"></div><div style="left:1008px;top:117px;width:40px;height:20px;background:#fbfbfa"></div><div style="left:1009px;top:118px;width:38px;height:18px;background:#ededeb"></div><div style="left:1009px;top:126px;width:38px;height:2px;background:#6b6bef"></div><div style="left:1008px;top:142px;width:40px;height:20px;background:#fbfbfa"></div><div style="left:1009px;top:143px;width:38px;height:18px;background:#ededeb"></div><div style="left:1009px;top:151px;width:38px;height:2px;background:#6b6bef"></div><div style="left:1008px;top:167px;width:40px;height:20px;background:#fbfbfa"></div><div style="left:1009px;top:168px;width:38px;height:18px;background:#ededeb"></div><div style="left:1009px;top:176px;width:38px;height:2px;background:#6aaaaa"></div><div style="left:1008px;top:192px;width:40px;height:20px;background:#fbfbfa"></div><div style="left:1009px;top:193px;width:38px;height:18px;background:#ededeb"></div><div style="left:1009px;top:201px;width:38px;height:2px;background:#ef6aa8"></div><div style="left:1008px;top:217px;width:40px;height:20px;background:#fbfbfa"></div><div style="left:1009px;top:218px;width:38px;height:18px;background:#ededeb"></div><div style="left:1009px;top:226px;width:38px;height:2px;background:#ef6aa8"></div><div style="left:1008px;top:242px;width:40px;height:20px;background:#fbfbfa"></div><div style="left:1009px;top:243px;width:38px;height:18px;background:#ededeb"></div><div style="left:1009px;top:251px;width:38px;height:2px;background:#ef6aa8"></div><div style="left:1008px;top:267px;width:40px;height:20px;background:#fbfbfa"></div><div style="left:1009px;top:268px;width:38px;height:18px;background:#ededeb"></div><svg style="left:1009px;top:276px" width="38" height="2"><line x1="0" y1="1" x2="38" y2="1" stroke="#6aaaf0" stroke-width="2" stroke-dasharray="5 2 2 1 2 2"/></svg><div style="left:1008px;top:292px;width:40px;height:20px;background:#fbfbfa"></div><div style="left:1009px;top:293px;width:38px;height:18px;background:#ededeb"></div><svg style="left:1009px;top:301px" width="38" height="2"><line x1="0" y1="1" x2="38" y2="1" stroke="#6aaaf0" stroke-width="2" stroke-dasharray="5 2 2 1 2 2"/></svg><div style="left:1008px;top:317px;width:40px;height:20px;background:#fbfbfa"></div><div style="left:1009px;top:318px;width:38px;height:18px;background:#ededeb"></div><svg style="left:1009px;top:326px" width="38" height="2"><line x1="0" y1="1" x2="38" y2="1" stroke="#6aaaf0" stroke-width="2" stroke-dasharray="5 2 2 1 2 2"/></svg><svg style="left:1362px;top:90px" width="2" height="250"><line x1="1.5" y1="0" x2="1.5" y2="250" stroke="#5a5f61" stroke-width="1" stroke-dasharray="3 2"/></svg><span class="t" style="left:1361px;top:70px;font-size:13px;color:#8e9192;font-weight:bold">^</span><div style="left:713px;top:395px;width:653px;height:1px;background:#363b3d"></div><div style="left:742px;top:371px;width:1px;height:225px;background:#363b3d"></div><div style="left:771px;top:371px;width:1px;height:225px;background:#363b3d"></div><div style="left:825px;top:371px;width:1px;height:225px;background:#363b3d"></div><div style="left:899px;top:371px;width:1px;height:225px;background:#363b3d"></div><div style="left:973px;top:371px;width:1px;height:225px;background:#363b3d"></div><div style="left:1047px;top:371px;width:1px;height:225px;background:#363b3d"></div><div style="left:1098px;top:371px;width:1px;height:225px;background:#363b3d"></div><div style="left:1158px;top:371px;width:1px;height:225px;background:#363b3d"></div><div style="left:1218px;top:371px;width:1px;height:225px;background:#363b3d"></div><div style="left:1269px;top:371px;width:1px;height:225px;background:#363b3d"></div><div style="left:1330px;top:371px;width:1px;height:225px;background:#363b3d"></div><span class="t" style="left:749px;top:374px;font-weight:bold;font-size:16.5px;color:#8e9192">#</span><span class="t" style="left:778px;top:374px;font-weight:bold;font-size:16.5px;color:#8e9192;transform:scaleX(0.914);transform-origin:0 0">name</span><span class="t" style="left:832px;top:374px;font-weight:bold;font-size:16.5px;color:#8e9192;transform:scaleX(0.935);transform-origin:0 0">min</span><span class="t" style="left:906px;top:374px;font-weight:bold;font-size:16.5px;color:#8e9192;transform:scaleX(0.888);transform-origin:0 0">max</span><span class="t" style="left:980px;top:374px;font-weight:bold;font-size:16.5px;color:#8e9192;transform:scaleX(0.924);transform-origin:0 0">inc</span><span class="t" style="left:1054px;top:374px;font-weight:bold;font-size:16.5px;color:#8e9192;letter-spacing:0.53px">type</span><span class="t" style="left:1105px;top:374px;font-weight:bold;font-size:16.5px;color:#8e9192">x</span><span class="t" style="left:1165px;top:374px;font-weight:bold;font-size:16.5px;color:#8e9192">y</span><span class="t" style="left:1225px;top:374px;font-weight:bold;font-size:16.5px;color:#8e9192;letter-spacing:0.35px">dir</span><span class="t" style="left:1276px;top:374px;font-weight:bold;font-size:16.5px;color:#8e9192;transform:scaleX(0.950);transform-origin:0 0">len</span><span class="t" style="left:1337px;top:374px;font-weight:bold;font-size:16.5px;color:#8e9192;letter-spacing:1.40px">^#</span><div style="left:720px;top:400px;width:15px;height:15px;background:#2d3234;border:1px solid #16191a;border-radius:3px;box-sizing:border-box"></div><svg style="left:720px;top:400px" width="15" height="15"><path d="M3.3 7.2L7.4 11.2L13.8 3.6" stroke="#fff" stroke-width="3.1" fill="none"/></svg><span class="t" style="right:600px;top:401px;font-size:15.3px;color:#eeeeec">0</span><span class="t" style="left:777px;top:401px;font-size:15.3px;color:#eeeeec">fX1</span><span class="t" style="right:472px;top:401px;font-size:15.3px;color:#eeeeec">0</span><span class="t" style="right:398px;top:401px;font-size:15.3px;color:#eeeeec">5</span><span class="t" style="right:324px;top:401px;font-size:15.3px;color:#eeeeec">1</span><span class="t" style="left:1053px;top:401px;font-size:15.3px;color:#eeeeec">linear</span><span class="t" style="right:213px;top:401px;font-size:15.3px;color:#eeeeec">50.00</span><span class="t" style="right:153px;top:401px;font-size:15.3px;color:#eeeeec">105.00</span><span class="t" style="right:102px;top:401px;font-size:15.3px;color:#eeeeec">0.00</span><span class="t" style="right:41px;top:401px;font-size:15.3px;color:#eeeeec">140.00</span><span class="t" style="right:5px;top:401px;font-size:15.3px;color:#eeeeec">10</span><div style="left:720px;top:425px;width:15px;height:15px;background:#2d3234;border:1px solid #16191a;border-radius:3px;box-sizing:border-box"></div><svg style="left:720px;top:425px" width="15" height="15"><path d="M3.3 7.2L7.4 11.2L13.8 3.6" stroke="#fff" stroke-width="3.1" fill="none"/></svg><span class="t" style="right:600px;top:426px;font-size:15.3px;color:#eeeeec">1</span><span class="t" style="left:777px;top:426px;font-size:15.3px;color:#eeeeec">fY1</span><span class="t" style="right:472px;top:426px;font-size:15.3px;color:#eeeeec">-2.2</span><span class="t" style="right:398px;top:426px;font-size:15.3px;color:#eeeeec">4.2</span><span class="t" style="right:324px;top:426px;font-size:15.3px;color:#eeeeec">1</span><span class="t" style="left:1053px;top:426px;font-size:15.3px;color:#eeeeec">linear</span><span class="t" style="right:213px;top:426px;font-size:15.3px;color:#eeeeec">50.00</span><span class="t" style="right:153px;top:426px;font-size:15.3px;color:#eeeeec">105.00</span><span class="t" style="right:102px;top:426px;font-size:15.3px;color:#eeeeec">90.00</span><span class="t" style="right:41px;top:426px;font-size:15.3px;color:#eeeeec">70.00</span><span class="t" style="right:5px;top:426px;font-size:15.3px;color:#eeeeec">11</span><div style="left:720px;top:450px;width:15px;height:15px;background:#2d3234;border:1px solid #16191a;border-radius:3px;box-sizing:border-box"></div><svg style="left:720px;top:450px" width="15" height="15"><path d="M3.3 7.2L7.4 11.2L13.8 3.6" stroke="#fff" stroke-width="3.1" fill="none"/></svg><span class="t" style="right:600px;top:451px;font-size:15.3px;color:#eeeeec">2</span><span class="t" style="left:777px;top:451px;font-size:15.3px;color:#eeeeec">fU1</span><span class="t" style="right:471px;top:451px;font-size:15.3px;color:#eeeeec;letter-spacing:1.8px">---------</span><span class="t" style="right:397px;top:451px;font-size:15.3px;color:#eeeeec;letter-spacing:1.8px">---------</span><span class="t" style="right:323px;top:451px;font-size:15.3px;color:#eeeeec;letter-spacing:1.8px">---------</span><span class="t" style="left:1053px;top:451px;font-size:15.3px;color:#eeeeec">linear</span><span class="t" style="right:213px;top:451px;font-size:15.3px;color:#eeeeec">50.00</span><span class="t" style="right:153px;top:451px;font-size:15.3px;color:#eeeeec">35.00</span><span class="t" style="right:102px;top:451px;font-size:15.3px;color:#eeeeec">0.00</span><span class="t" style="right:41px;top:451px;font-size:15.3px;color:#eeeeec">140.00</span><span class="t" style="right:5px;top:451px;font-size:15.3px;color:#eeeeec">12</span><div style="left:720px;top:475px;width:15px;height:15px;background:#2d3234;border:1px solid #16191a;border-radius:3px;box-sizing:border-box"></div><svg style="left:720px;top:475px" width="15" height="15"><path d="M3.3 7.2L7.4 11.2L13.8 3.6" stroke="#fff" stroke-width="3.1" fill="none"/></svg><span class="t" style="right:600px;top:476px;font-size:15.3px;color:#eeeeec">3</span><span class="t" style="left:777px;top:476px;font-size:15.3px;color:#eeeeec">fR1</span><span class="t" style="right:471px;top:476px;font-size:15.3px;color:#eeeeec;letter-spacing:1.8px">---------</span><span class="t" style="right:397px;top:476px;font-size:15.3px;color:#eeeeec;letter-spacing:1.8px">---------</span><span class="t" style="right:323px;top:476px;font-size:15.3px;color:#eeeeec;letter-spacing:1.8px">---------</span><span class="t" style="left:1053px;top:476px;font-size:15.3px;color:#eeeeec">linear</span><span class="t" style="right:213px;top:476px;font-size:15.3px;color:#eeeeec">190.00</span><span class="t" style="right:153px;top:476px;font-size:15.3px;color:#eeeeec">105.00</span><span class="t" style="right:102px;top:476px;font-size:15.3px;color:#eeeeec">90.00</span><span class="t" style="right:41px;top:476px;font-size:15.3px;color:#eeeeec">70.00</span><span class="t" style="right:5px;top:476px;font-size:15.3px;color:#eeeeec">13</span><div style="left:720px;top:500px;width:15px;height:15px;background:#2d3234;border:1px solid #16191a;border-radius:3px;box-sizing:border-box"></div><svg style="left:720px;top:500px" width="15" height="15"><path d="M3.3 7.2L7.4 11.2L13.8 3.6" stroke="#fff" stroke-width="3.1" fill="none"/></svg><span class="t" style="right:600px;top:501px;font-size:15.3px;color:#eeeeec">4</span><span class="t" style="left:777px;top:501px;font-size:15.3px;color:#eeeeec">fX2</span><span class="t" style="right:472px;top:501px;font-size:15.3px;color:#eeeeec">0</span><span class="t" style="right:398px;top:501px;font-size:15.3px;color:#eeeeec">5</span><span class="t" style="right:324px;top:501px;font-size:15.3px;color:#eeeeec">1</span><span class="t" style="left:1053px;top:501px;font-size:15.3px;color:#eeeeec">linear</span><span class="t" style="right:213px;top:501px;font-size:15.3px;color:#eeeeec">50.00</span><span class="t" style="right:153px;top:501px;font-size:15.3px;color:#eeeeec">180.00</span><span class="t" style="right:102px;top:501px;font-size:15.3px;color:#eeeeec">0.00</span><span class="t" style="right:41px;top:501px;font-size:15.3px;color:#eeeeec">140.00</span><span class="t" style="right:5px;top:501px;font-size:15.3px;color:#eeeeec">14</span><div style="left:720px;top:525px;width:15px;height:15px;background:#2d3234;border:1px solid #16191a;border-radius:3px;box-sizing:border-box"></div><svg style="left:720px;top:525px" width="15" height="15"><path d="M3.3 7.2L7.4 11.2L13.8 3.6" stroke="#fff" stroke-width="3.1" fill="none"/></svg><span class="t" style="right:600px;top:526px;font-size:15.3px;color:#eeeeec">5</span><span class="t" style="left:777px;top:526px;font-size:15.3px;color:#eeeeec">fY2</span><span class="t" style="right:472px;top:526px;font-size:15.3px;color:#eeeeec">-1.2</span><span class="t" style="right:398px;top:526px;font-size:15.3px;color:#eeeeec">1.2</span><span class="t" style="right:324px;top:526px;font-size:15.3px;color:#eeeeec">1</span><span class="t" style="left:1053px;top:526px;font-size:15.3px;color:#eeeeec">linear</span><span class="t" style="right:213px;top:526px;font-size:15.3px;color:#eeeeec">50.00</span><span class="t" style="right:153px;top:526px;font-size:15.3px;color:#eeeeec">180.00</span><span class="t" style="right:102px;top:526px;font-size:15.3px;color:#eeeeec">90.00</span><span class="t" style="right:41px;top:526px;font-size:15.3px;color:#eeeeec">70.00</span><span class="t" style="right:5px;top:526px;font-size:15.3px;color:#eeeeec">15</span><div style="left:720px;top:550px;width:15px;height:15px;background:#2d3234;border:1px solid #16191a;border-radius:3px;box-sizing:border-box"></div><svg style="left:720px;top:550px" width="15" height="15"><path d="M3.3 7.2L7.4 11.2L13.8 3.6" stroke="#fff" stroke-width="3.1" fill="none"/></svg><span class="t" style="right:600px;top:551px;font-size:15.3px;color:#eeeeec">6</span><span class="t" style="left:777px;top:551px;font-size:15.3px;color:#eeeeec">fU2</span><span class="t" style="right:471px;top:551px;font-size:15.3px;color:#eeeeec;letter-spacing:1.8px">---------</span><span class="t" style="right:397px;top:551px;font-size:15.3px;color:#eeeeec;letter-spacing:1.8px">---------</span><span class="t" style="right:323px;top:551px;font-size:15.3px;color:#eeeeec;letter-spacing:1.8px">---------</span><span class="t" style="left:1053px;top:551px;font-size:15.3px;color:#eeeeec">linear</span><span class="t" style="right:213px;top:551px;font-size:15.3px;color:#eeeeec">50.00</span><span class="t" style="right:153px;top:551px;font-size:15.3px;color:#eeeeec">110.00</span><span class="t" style="right:102px;top:551px;font-size:15.3px;color:#eeeeec">0.00</span><span class="t" style="right:41px;top:551px;font-size:15.3px;color:#eeeeec">140.00</span><span class="t" style="right:5px;top:551px;font-size:15.3px;color:#eeeeec">16</span><div style="left:720px;top:575px;width:15px;height:15px;background:#2d3234;border:1px solid #16191a;border-radius:3px;box-sizing:border-box"></div><svg style="left:720px;top:575px" width="15" height="15"><path d="M3.3 7.2L7.4 11.2L13.8 3.6" stroke="#fff" stroke-width="3.1" fill="none"/></svg><span class="t" style="right:600px;top:576px;font-size:15.3px;color:#eeeeec">7</span><span class="t" style="left:777px;top:576px;font-size:15.3px;color:#eeeeec">fR2</span><span class="t" style="right:471px;top:576px;font-size:15.3px;color:#eeeeec;letter-spacing:1.8px">---------</span><span class="t" style="right:397px;top:576px;font-size:15.3px;color:#eeeeec;letter-spacing:1.8px">---------</span><span class="t" style="right:323px;top:576px;font-size:15.3px;color:#eeeeec;letter-spacing:1.8px">---------</span><span class="t" style="left:1053px;top:576px;font-size:15.3px;color:#eeeeec">linear</span><span class="t" style="right:213px;top:576px;font-size:15.3px;color:#eeeeec">190.00</span><span class="t" style="right:153px;top:576px;font-size:15.3px;color:#eeeeec">180.00</span><span class="t" style="right:102px;top:576px;font-size:15.3px;color:#eeeeec">90.00</span><span class="t" style="right:41px;top:576px;font-size:15.3px;color:#eeeeec">70.00</span><span class="t" style="right:5px;top:576px;font-size:15.3px;color:#eeeeec">17</span><div style="left:660px;top:600px;width:706px;height:2px;background:#1b1f20"></div><div style="left:660px;top:602px;width:252px;height:139px;background:#33393b"></div><div style="left:912px;top:602px;width:1px;height:139px;background:#1b1f20"></div><div style="left:913px;top:602px;width:453px;height:139px;background:#24282a"></div><span class="t" style="left:659px;top:603.5px;font-family:'Liberation Mono',monospace;font-size:15.8px;letter-spacing:0.64px;color:#eeeeec">(X:108.50  Y: 38.74)</span><span class="t" style="left:659px;top:621.5px;font-family:'Liberation Mono',monospace;font-size:15.8px;letter-spacing:0.64px;color:#eeeeec"> 0   fX1 +2.0892857e+00</span><span class="t" style="left:659px;top:639.5px;font-family:'Liberation Mono',monospace;font-size:15.8px;letter-spacing:0.64px;color:#eeeeec"> 1   fY1 +3.8580571e+00</span><span class="t" style="left:659px;top:657.5px;font-family:'Liberation Mono',monospace;font-size:15.8px;letter-spacing:0.64px;color:#eeeeec"> 4   fX2 +2.0892857e+00</span><span class="t" style="left:659px;top:675.5px;font-family:'Liberation Mono',monospace;font-size:15.8px;letter-spacing:0.64px;color:#eeeeec"> 5   fY2 +3.6432000e+00</span><svg style="left:11px;top:117px" width="21" height="21" viewBox="0 0 21 21"><g transform="translate(0.8,0.8) scale(1.0)"><path d="M1.5 1.5L13.5 5.5L10.5 8L17.2 14.5L14.5 17.2L8 10.5L5.5 13.5Z" fill="#fff" stroke="#fff" stroke-width="4.2" stroke-linejoin="round"/><path d="M1.5 1.5L13.5 5.5L10.5 8L17.2 14.5L14.5 17.2L8 10.5L5.5 13.5Z" fill="#fff" stroke="#000" stroke-width="1.7" stroke-linejoin="miter"/></g></svg><svg style="left:10px;top:150px" width="23" height="23" viewBox="0 0 23 23"><rect x="1" y="1.5" width="17.5" height="9" rx="1.5" fill="#fff"/><path d="M3 9V4.5L4.5 3H5.5L7 4.5V9M3 6.5H7M9 9V3H11.5L12.5 4V5.5L11.5 6L12.5 6.8V8L11.5 9ZM9 6H11.5M17 3.5H15L14 4.5V7.5L15 8.5H17" fill="none" stroke="#000" stroke-width="1.2"/><g transform="translate(7,8.5) scale(0.75)"><path d="M1.5 1.5L13.5 5.5L10.5 8L17.2 14.5L14.5 17.2L8 10.5L5.5 13.5Z" fill="#fff" stroke="#fff" stroke-width="5.6000000000000005" stroke-linejoin="round"/><path d="M1.5 1.5L13.5 5.5L10.5 8L17.2 14.5L14.5 17.2L8 10.5L5.5 13.5Z" fill="#fff" stroke="#000" stroke-width="2.2666666666666666" stroke-linejoin="miter"/></g></svg><svg style="left:10px;top:186px" width="23" height="23" viewBox="0 0 23 23"><path d="M4.5 3V19M2 5.5L4.5 2.5L7 5.5M2.5 8H6.5M2.5 12H6.5M2.5 16H6.5" fill="none" stroke="#fff" stroke-width="4" stroke-linejoin="miter" stroke-linecap="square"/><path d="M4.5 3V19M2 5.5L4.5 2.5L7 5.5M2.5 8H6.5M2.5 12H6.5M2.5 16H6.5" fill="none" stroke="#000" stroke-width="1.5" stroke-linejoin="miter" stroke-linecap="square"/><g transform="translate(6.5,4.5) scale(0.8)"><path d="M1.5 1.5L13.5 5.5L10.5 8L17.2 14.5L14.5 17.2L8 10.5L5.5 13.5Z" fill="#fff" stroke="#fff" stroke-width="5.25" stroke-linejoin="round"/><path d="M1.5 1.5L13.5 5.5L10.5 8L17.2 14.5L14.5 17.2L8 10.5L5.5 13.5Z" fill="#fff" stroke="#000" stroke-width="2.125" stroke-linejoin="miter"/></g></svg><svg style="left:10px;top:221px" width="23" height="23" viewBox="0 0 23 23"><circle cx="4.5" cy="4.5" r="3.5" fill="#fff"/><circle cx="4.5" cy="4.5" r="2.2" fill="#000"/><g transform="translate(6,5.5) scale(0.8)"><path d="M1.5 1.5L13.5 5.5L10.5 8L17.2 14.5L14.5 17.2L8 10.5L5.5 13.5Z" fill="#fff" stroke="#fff" stroke-width="5.25" stroke-linejoin="round"/><path d="M1.5 1.5L13.5 5.5L10.5 8L17.2 14.5L14.5 17.2L8 10.5L5.5 13.5Z" fill="#fff" stroke="#000" stroke-width="2.125" stroke-linejoin="miter"/></g></svg><svg style="left:11px;top:271px" width="20" height="20" viewBox="0 0 20 20"><path d="M16 3L2.8 15.8H16.3" fill="none" stroke="#fff" stroke-width="4.2" stroke-linejoin="miter" stroke-linecap="square"/><path d="M16 3L2.8 15.8H16.3" fill="none" stroke="#000" stroke-width="2.2" stroke-linejoin="miter" stroke-linecap="square"/></svg><svg style="left:12px;top:307px" width="19" height="20" viewBox="0 0 19 20"><rect x="0.5" y="0.5" width="17" height="18" fill="#fff"/><rect x="2" y="2" width="14" height="15" fill="#000"/><rect x="4" y="4" width="10" height="11" fill="#fff"/></svg><svg style="left:11px;top:341px" width="21" height="21" viewBox="0 0 21 21"><circle cx="10.5" cy="10.5" r="10" fill="#fff"/><circle cx="10.5" cy="10.5" r="8.6" fill="#000"/><circle cx="10.5" cy="10.5" r="7" fill="#fff"/></svg><svg style="left:11px;top:376px" width="21" height="21" viewBox="0 0 21 21"><circle cx="10.5" cy="10.5" r="10" fill="#fff"/><circle cx="10.5" cy="10.5" r="8.6" fill="#000"/><path d="M10.5 3.5A7 7 0 0 0 10.5 17.5Z" fill="#fff"/></svg><svg style="left:12px;top:413px" width="19" height="18" viewBox="0 0 19 18"><path d="M1.5 1.5H16.5V6.5H14.5V4.5H11V13H13V15H5V13H7V4.5H3.5V6.5H1.5Z" fill="#000" stroke="#fff" stroke-width="1.6" stroke-linejoin="miter"/><path d="M3 3H15" stroke="#000"/></svg><svg style="left:10px;top:462px" width="23" height="19" viewBox="0 0 23 19"><path d="M2.5 15.5H6.5C9 15.5 8 3 11.5 3C15 3 14 15.5 16.5 15.5H20.5" fill="none" stroke="#fff" stroke-width="5.4" stroke-linejoin="miter" stroke-linecap="butt"/><path d="M2.5 15.5H6.5C9 15.5 8 3 11.5 3C15 3 14 15.5 16.5 15.5H20.5" fill="none" stroke="#000" stroke-width="2.4" stroke-linejoin="miter" stroke-linecap="butt"/></svg><svg style="left:12px;top:496px" width="19" height="19" viewBox="0 0 19 19"><rect x="1" y="1" width="17" height="17" fill="#fff"/><rect x="2" y="2" width="15" height="15" fill="#000"/><rect x="4" y="4" width="11" height="11" fill="#fff"/><rect x="6" y="4" width="1" height="1" fill="#000"/><rect x="6" y="14" width="1" height="1" fill="#000"/><rect x="9" y="4" width="1" height="1" fill="#000"/><rect x="9" y="14" width="1" height="1" fill="#000"/><rect x="12" y="4" width="1" height="1" fill="#000"/><rect x="12" y="14" width="1" height="1" fill="#000"/><rect x="4" y="6" width="1" height="1" fill="#000"/><rect x="14" y="6" width="1" height="1" fill="#000"/><rect x="4" y="9" width="1" height="1" fill="#000"/><rect x="14" y="9" width="1" height="1" fill="#000"/><rect x="4" y="12" width="1" height="1" fill="#000"/><rect x="14" y="12" width="1" height="1" fill="#000"/></svg><svg style="left:12px;top:531px" width="18" height="18" viewBox="0 0 18 18"><rect x="0" y="0" width="18" height="18" fill="#fff"/><rect x="1" y="1" width="16" height="16" fill="#000"/><rect x="2" y="2" width="2" height="2" fill="#fff"/><rect x="2" y="5" width="2" height="2" fill="#fff"/><rect x="2" y="8" width="2" height="2" fill="#fff"/><rect x="2" y="11" width="2" height="2" fill="#fff"/><rect x="2" y="14" width="2" height="2" fill="#fff"/><rect x="5" y="2" width="2" height="2" fill="#fff"/><rect x="5" y="5" width="2" height="2" fill="#fff"/><rect x="5" y="8" width="2" height="2" fill="#fff"/><rect x="5" y="11" width="2" height="2" fill="#fff"/><rect x="5" y="14" width="2" height="2" fill="#fff"/><rect x="8" y="2" width="2" height="2" fill="#fff"/><rect x="8" y="5" width="2" height="2" fill="#fff"/><rect x="8" y="8" width="2" height="2" fill="#fff"/><rect x="8" y="11" width="2" height="2" fill="#fff"/><rect x="8" y="14" width="2" height="2" fill="#fff"/><rect x="11" y="2" width="2" height="2" fill="#fff"/><rect x="11" y="5" width="2" height="2" fill="#fff"/><rect x="11" y="8" width="2" height="2" fill="#fff"/><rect x="11" y="11" width="2" height="2" fill="#fff"/><rect x="11" y="14" width="2" height="2" fill="#fff"/><rect x="14" y="2" width="2" height="2" fill="#fff"/><rect x="14" y="5" width="2" height="2" fill="#fff"/><rect x="14" y="8" width="2" height="2" fill="#fff"/><rect x="14" y="11" width="2" height="2" fill="#fff"/><rect x="14" y="14" width="2" height="2" fill="#fff"/></svg><svg style="left:8px;top:562px" width="26" height="26" viewBox="0 0 26 26"><path d="M12.5 21V5.5M3.5 17.5H21M10.5 7.5L12.5 4.8L14.5 7.5M19.5 15.5L22 17.5L19.5 19.5M11 9.5H14M11 12.5H14M8 16V19M16.5 16V19" fill="none" stroke="#fff" stroke-width="4" stroke-linejoin="miter" stroke-linecap="square"/><path d="M12.5 21V5.5M3.5 17.5H21M10.5 7.5L12.5 4.8L14.5 7.5M19.5 15.5L22 17.5L19.5 19.5M11 9.5H14M11 12.5H14M8 16V19M16.5 16V19" fill="none" stroke="#000" stroke-width="1.4" stroke-linejoin="miter" stroke-linecap="square"/></svg><svg style="left:14px;top:600px" width="10" height="22" viewBox="0 0 10 22"><path d="M5 20V3M3 5.5L5 2.5L7 5.5M3.5 8.5H6.5M3.5 11.5H6.5M3.5 14.5H6.5M3.5 17.5H6.5" fill="none" stroke="#fff" stroke-width="3.8" stroke-linejoin="miter" stroke-linecap="square"/><path d="M5 20V3M3 5.5L5 2.5L7 5.5M3.5 8.5H6.5M3.5 11.5H6.5M3.5 14.5H6.5M3.5 17.5H6.5" fill="none" stroke="#000" stroke-width="1.4" stroke-linejoin="miter" stroke-linecap="square"/></svg><svg style="left:8px;top:646px" width="26" height="26" viewBox="0 0 26 26"><path d="M7.4 4.5V22.5M5.2 6.2H9.6M6.2 9.5H8.8M6.2 15H8.8M5 21.5H9.8M5.5 12.3L16.5 17M11.5 5.5L18 11.2V15M11.5 5.5L10.8 9.5L16.5 15.5M16.5 17H22.5M20.8 15.3L22.8 17L20.8 18.7M16 17.5L14.5 21M19 17.5V21.5" fill="none" stroke="#fff" stroke-width="3.8" stroke-linejoin="miter" stroke-linecap="square"/><path d="M7.4 4.5V22.5M5.2 6.2H9.6M6.2 9.5H8.8M6.2 15H8.8M5 21.5H9.8M5.5 12.3L16.5 17M11.5 5.5L18 11.2V15M11.5 5.5L10.8 9.5L16.5 15.5M16.5 17H22.5M20.8 15.3L22.8 17L20.8 18.7M16 17.5L14.5 21M19 17.5V21.5" fill="none" stroke="#000" stroke-width="1.3" stroke-linejoin="miter" stroke-linecap="square"/><path d="M12.6 7.2L16.6 11.4M12.2 9L15.6 12.6" stroke="#000" stroke-width="0.9" stroke-dasharray="1 1"/></svg><svg style="left:18px;top:714px" width="7" height="11" viewBox="0 0 7 11"><path d="M0.5 0.5L6 5.5L0.5 10.5Z" fill="#d8d8d6"/></svg><svg style="left:677px;top:82px" width="21" height="21" viewBox="0 0 21 21"><rect x="1" y="1" width="19" height="19" fill="#fff"/><rect x="0" y="0" width="19" height="19" fill="#000"/><rect x="1.6" y="1.6" width="15.8" height="15.8" fill="#fff"/><path d="M7.2 3.2H8.4V7.6M6.5 8.6H9.2L6.6 11.6H9.5M6.6 13H9.3L7.8 14.4C9.8 14.4 9.8 17.2 7.8 17.2H6.6" fill="none" stroke="#000" stroke-width="1.3"/><path d="M11.2 5.6h5.5M11.2 10.3h5.5M11.2 15h5.5" stroke="#000" stroke-width="1.6" stroke-dasharray="0.9 0.6"/></svg><svg style="left:676px;top:128px" width="21" height="19" viewBox="0 0 21 19"><path d="M17 2.8L3.5 16H17.5" fill="none" stroke="#fff" stroke-width="4.2" stroke-linejoin="miter" stroke-linecap="square"/><path d="M17 2.8L3.5 16H17.5" fill="none" stroke="#000" stroke-width="2.2" stroke-linejoin="miter" stroke-linecap="square"/></svg><svg style="left:679px;top:175px" width="17" height="19" viewBox="0 0 17 19"><rect x="0.5" y="0.5" width="16" height="18" fill="#fff"/><rect x="1.8" y="1.8" width="13.4" height="15.4" fill="#000"/><rect x="4" y="4" width="9" height="11" fill="#fff"/></svg><svg style="left:677px;top:220px" width="21" height="21" viewBox="0 0 21 21"><circle cx="10.5" cy="10.5" r="10" fill="#fff"/><circle cx="10.5" cy="10.5" r="8.6" fill="#000"/><circle cx="10.5" cy="10.5" r="7" fill="#fff"/></svg><svg style="left:677px;top:266px" width="21" height="21" viewBox="0 0 21 21"><circle cx="10.5" cy="10.5" r="10" fill="#fff"/><circle cx="10.5" cy="10.5" r="8.6" fill="#000"/><path d="M10.5 3.5A7 7 0 0 0 10.5 17.5Z" fill="#fff"/></svg><svg style="left:678px;top:314px" width="19" height="18" viewBox="0 0 19 18"><path d="M1.5 1.5H16.5V6.5H14.5V4.5H11V13H13V15H5V13H7V4.5H3.5V6.5H1.5Z" fill="#000" stroke="#fff" stroke-width="1.6" stroke-linejoin="miter"/></svg><svg style="left:674px;top:384px" width="26" height="26" viewBox="0 0 26 26"><path d="M22.5 4.5V23H3.5" fill="none" stroke="#fff" stroke-width="1"/><rect x="3.5" y="4.5" width="18" height="18" fill="#fff" stroke="#000" stroke-width="1.2"/><path d="M10.5 20.7V7.5M7 17.4H17.5M9 11.4H12M9 14.4H12M13.5 16V18.8" stroke="#000" stroke-width="1.3" fill="none"/><path d="M8 8.6L10.5 5.8L13 8.6Z" fill="#000"/><path d="M16.3 15.2L19.2 17.4L16.3 19.6Z" fill="#000"/></svg><svg style="left:674px;top:430px" width="26" height="26" viewBox="0 0 26 26"><path d="M22.5 4.5V23.5H3.5" fill="none" stroke="#fff" stroke-width="1"/><rect x="3" y="4" width="19" height="19" fill="#000"/><rect x="4.5" y="5.5" width="16" height="16" fill="none" stroke="#fff" stroke-width="1"/><rect x="5" y="13" width="15" height="1" fill="#fff"/><rect x="7" y="7" width="11" height="5" fill="#fff"/><rect x="7" y="15" width="11" height="5" fill="#fff"/><rect x="9" y="7" width="1" height="1" fill="#000"/><rect x="9" y="11" width="1" height="1" fill="#000"/><rect x="9" y="15" width="1" height="1" fill="#000"/><rect x="9" y="19" width="1" height="1" fill="#000"/><rect x="12" y="7" width="1" height="1" fill="#000"/><rect x="12" y="11" width="1" height="1" fill="#000"/><rect x="12" y="15" width="1" height="1" fill="#000"/><rect x="12" y="19" width="1" height="1" fill="#000"/><rect x="15" y="7" width="1" height="1" fill="#000"/><rect x="15" y="11" width="1" height="1" fill="#000"/><rect x="15" y="15" width="1" height="1" fill="#000"/><rect x="15" y="19" width="1" height="1" fill="#000"/><rect x="7" y="9" width="1" height="1" fill="#000"/><rect x="7" y="17" width="1" height="1" fill="#000"/><rect x="17" y="9" width="1" height="1" fill="#000"/><rect x="17" y="17" width="1" height="1" fill="#000"/></svg><svg style="left:11px;top:73px" width="20" height="23" viewBox="0 0 20 23"><path d="M2 2H12.5L18 7.5V21H2Z" fill="#f4f4f2" stroke="#b9b9b7" stroke-width="1" stroke-linejoin="round"/><path d="M12.5 2V7.5H18" fill="#dcdcda" stroke="#b9b9b7" stroke-width="0.8"/><path d="M4.5 6.5h6M4.5 8.5h6M4.5 10.5h9M4.5 12.5h5M4.5 15h10M4.5 17h10M4.5 19h5" stroke="#c8c8c6" stroke-width="0.8"/></svg><svg style="left:93px;top:73px" width="25" height="21" viewBox="0 0 25 21"><path d="M2.5 3.5C2.5 2.5 3 2 4 2H9L10.5 4H20.5C21.5 4 22 4.5 22 5.5V18.5H2.5Z" fill="#c4ac80" stroke="#8e6e40" stroke-width="1"/><rect x="7" y="5" width="12" height="6" fill="#fafafa" stroke="#9a9a98" stroke-width="0.6"/><path d="M1 9.5H23L21.5 19H2.5Z" fill="#e2d4b6" stroke="#8e6e40" stroke-width="1" stroke-linejoin="round"/></svg><svg style="left:165px;top:73px" width="20" height="24" viewBox="0 0 20 24"><rect x="1.5" y="2" width="17" height="20.5" rx="2" fill="#e0e0de" stroke="#a8a8a6" stroke-width="1"/><rect x="3.5" y="4" width="13" height="9" fill="#cfcfcd"/><rect x="3.5" y="14.5" width="13" height="6.5" fill="#d4d4d2" stroke="#a0a09e" stroke-width="0.6"/><path d="M7 17.5h6" stroke="#909090" stroke-width="1.2"/><path d="M10 1.5V12" stroke="#3ca81c" stroke-width="3.2"/><path d="M4.8 8L10 13.2L15.2 8" fill="none" stroke="#3ca81c" stroke-width="3" stroke-linejoin="round"/><path d="M10 1.8V11" stroke="#8ee060" stroke-width="1.2"/></svg><svg style="left:246px;top:72px" width="26" height="26" viewBox="0 0 26 26"><path d="M7.4 5V21.4M5.1 19.3H21M5.3 7.2L7.4 4.8L9.5 7.2M19.4 17.2L21.8 19.3L19.4 21.4" fill="none" stroke="#fff" stroke-width="4.4" stroke-linejoin="miter" stroke-linecap="square"/><path d="M7.4 5V21.4M5.1 19.3H21M5.3 7.2L7.4 4.8L9.5 7.2M19.4 17.2L21.8 19.3L19.4 21.4" fill="none" stroke="#000" stroke-width="1.4" stroke-linejoin="miter" stroke-linecap="square"/><path d="M12.2 9.3V7.5H18.6V11.2H15.6V13.4M15.6 14.3V15.6" fill="none" stroke="#fff" stroke-width="5"/><path d="M12.2 9.3V7.5H18.6V11.2H15.6V13.4M15.6 14.3V15.6" fill="none" stroke="#000" stroke-width="2.6"/></svg><svg style="left:280px;top:72px" width="26" height="26" viewBox="0 0 26 26"><path d="M5 14L15.4 3.8L22.2 10.5L12 20.8H5Z" fill="#000"/><path d="M6.4 13.4L15.4 4.6L19.3 8.5L10.3 17.4Z" fill="#00e4e4"/><path d="M9.2 15.4L17.2 7.4M10.4 16.6L18.4 8.6" stroke="#000" stroke-width="0.8" stroke-dasharray="0.8 0.9"/><path d="M5.7 14.6L11.3 20.1H5.7Z" fill="#e0a410"/></svg><svg style="left:318px;top:77px" width="22" height="18" viewBox="0 0 22 18"><defs><linearGradient id="pg" x1="0" y1="0" x2="0" y2="1"><stop offset="0" stop-color="#f0f0ee"/><stop offset="0.7" stop-color="#d8d8d6"/><stop offset="1" stop-color="#b0b0ae"/></linearGradient></defs><rect x="2.3" y="8.5" width="16.4" height="8.8" rx="1.5" fill="#2e2e2c"/><rect x="2.8" y="10" width="1.8" height="6.5" rx="0.8" fill="#bdbdbb"/><rect x="16.4" y="10" width="1.8" height="6.5" rx="0.8" fill="#bdbdbb"/><rect x="1.3" y="0.8" width="19.4" height="9" rx="2" fill="url(#pg)" stroke="#7a7a78" stroke-width="0.5"/><rect x="5" y="2.2" width="11.7" height="2.4" fill="#4a4a48"/><circle cx="6.6" cy="3.4" r="0.55" fill="#ddd"/><circle cx="8.6" cy="3.4" r="0.55" fill="#ddd"/><circle cx="10.6" cy="3.4" r="0.55" fill="#ddd"/><rect x="5" y="9" width="11.5" height="0.9" fill="#000"/><rect x="5.1" y="9.8" width="11.1" height="6" fill="#f6f6f4"/><path d="M6 10.6L9.5 11.2L12 13L15.5 14.6" stroke="#8cc870" stroke-width="1.2" fill="none"/><path d="M7 12.5L10 14" stroke="#b8e0a0" stroke-width="0.9"/><rect x="13" y="15" width="2" height="1" fill="#4a90e0"/></svg><svg style="left:368px;top:74px" width="20" height="22" viewBox="0 0 20 22"><rect x="0.5" y="0.5" width="18.5" height="20.5" fill="#fff"/><rect x="1.5" y="1.5" width="16.5" height="18.5" fill="#000"/><rect x="3" y="3" width="13" height="15.5" fill="#fff"/><rect x="4" y="4" width="11" height="3" fill="#000"/><rect x="4.8" y="4.8" width="1.4" height="1.5" fill="#fff"/><rect x="7.4" y="4.8" width="1.4" height="1.5" fill="#fff"/><rect x="10.0" y="4.8" width="1.4" height="1.5" fill="#fff"/><rect x="12.6" y="4.8" width="1.4" height="1.5" fill="#fff"/><rect x="4.0" y="8.0" width="2.2" height="2" fill="#000"/><rect x="4.0" y="10.8" width="2.2" height="2" fill="#000"/><rect x="4.0" y="13.6" width="2.2" height="2" fill="#000"/><rect x="4.0" y="16.4" width="2.2" height="2" fill="#000"/><rect x="7.0" y="8.0" width="2.2" height="2" fill="#000"/><rect x="7.0" y="10.8" width="2.2" height="2" fill="#000"/><rect x="7.0" y="13.6" width="2.2" height="2" fill="#000"/><rect x="7.0" y="16.4" width="2.2" height="2" fill="#000"/><rect x="10.0" y="8.0" width="2.2" height="2" fill="#000"/><rect x="10.0" y="10.8" width="2.2" height="2" fill="#000"/><rect x="10.0" y="13.6" width="2.2" height="2" fill="#000"/><rect x="10.0" y="16.4" width="2.2" height="2" fill="#000"/><rect x="13.0" y="8.0" width="2.2" height="2" fill="#000"/><rect x="13.0" y="10.8" width="2.2" height="2" fill="#000"/><rect x="13.0" y="13.6" width="2.2" height="2" fill="#000"/><rect x="13.0" y="16.4" width="2.2" height="2" fill="#000"/></svg><svg style="left:401px;top:75px" width="25" height="19" viewBox="0 0 25 19"><path d="M8.5 3L3 8.5L8.5 14M3.5 8.5H16C19.5 8.5 21.5 10.5 21.5 13.2C21.5 16 19.5 17.5 17 17.5" fill="none" stroke="#7c6e2c" stroke-width="4.2" stroke-linejoin="round" stroke-linecap="round"/><path d="M8.5 3L3 8.5L8.5 14M3.5 8.5H16C19.5 8.5 21.5 10.5 21.5 13.2C21.5 16 19.5 17.5 17 17.5" fill="none" stroke="#b4ab70" stroke-width="2" stroke-linejoin="round" stroke-linecap="round"/></svg></body></html>
